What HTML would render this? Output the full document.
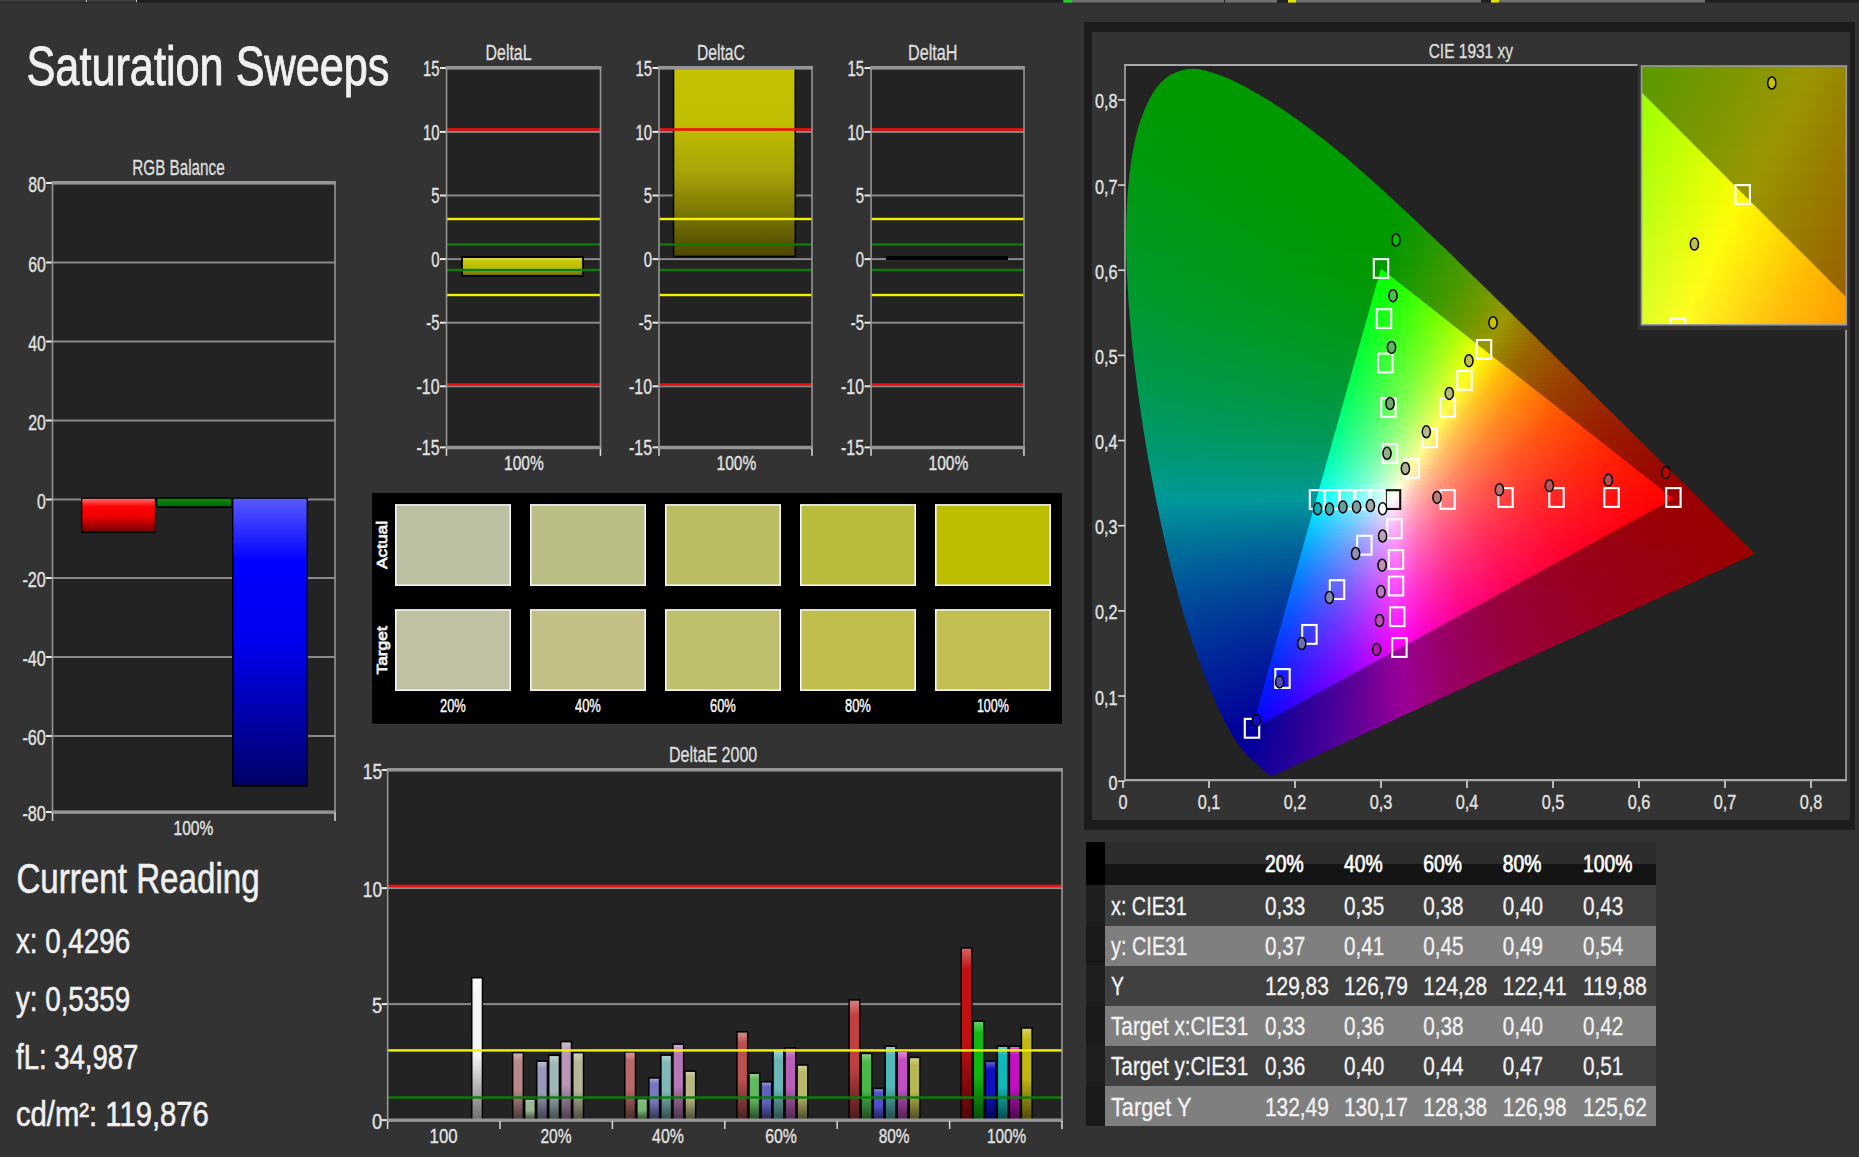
<!DOCTYPE html>
<html><head><meta charset="utf-8"><title>Saturation Sweeps</title>
<style>html,body{margin:0;padding:0;background:#333333;overflow:hidden;width:1859px;height:1157px}svg{display:block}text{font-family:"Liberation Sans",sans-serif}</style>
</head><body>
<svg width="1859" height="1157" viewBox="0 0 1859 1157" font-family="Liberation Sans"><rect x="0" y="0" width="1859" height="1157" fill="#333333"/>
<rect x="0" y="0" width="1859" height="2.5" fill="#1f1f1f"/>
<rect x="0" y="0" width="137" height="2.5" fill="#383838"/>
<rect x="86" y="0" width="1" height="2" fill="#bbbbbb"/>
<rect x="136" y="0" width="1" height="2.5" fill="#cccccc"/>
<rect x="0" y="2" width="137" height="0.8" fill="#262626"/>
<rect x="1063" y="0" width="161" height="2.5" fill="#707070"/>
<rect x="1064" y="0" width="8" height="2.5" fill="#20d020"/>
<rect x="1225" y="0" width="52" height="2.5" fill="#707070"/>
<rect x="1288" y="0" width="193" height="2.5" fill="#707070"/>
<rect x="1288" y="0" width="8" height="2.5" fill="#e0e000"/>
<rect x="1491" y="0" width="214" height="2.5" fill="#707070"/>
<rect x="1491" y="0" width="8" height="2.5" fill="#e0e000"/>
<text x="26.5" y="85.4" font-size="56" fill="#f0f0f0" textLength="363" lengthAdjust="spacingAndGlyphs" stroke="#f0f0f0" stroke-width="0.9">Saturation Sweeps</text>
<defs>
<linearGradient id="gR" x1="0" y1="0" x2="0" y2="1"><stop offset="0" stop-color="#ff6a6a"/><stop offset="0.25" stop-color="#ff0000"/><stop offset="0.55" stop-color="#ee0000"/><stop offset="1" stop-color="#7a0000"/></linearGradient>
<linearGradient id="gG" x1="0" y1="0" x2="0" y2="1"><stop offset="0" stop-color="#0a8a0a"/><stop offset="1" stop-color="#066806"/></linearGradient>
<linearGradient id="gB" x1="0" y1="0" x2="0" y2="1"><stop offset="0" stop-color="#5a5aff"/><stop offset="0.22" stop-color="#0000ff"/><stop offset="0.5" stop-color="#0000f0"/><stop offset="1" stop-color="#000068"/></linearGradient>
<linearGradient id="gYL" x1="0" y1="0" x2="0" y2="1"><stop offset="0" stop-color="#dcdc50"/><stop offset="0.2" stop-color="#c4c400"/><stop offset="0.6" stop-color="#bcbc00"/><stop offset="1" stop-color="#6c6800"/></linearGradient>
<linearGradient id="gYC" x1="0" y1="0" x2="0" y2="1"><stop offset="0" stop-color="#c4c200"/><stop offset="0.3" stop-color="#c0be00"/><stop offset="0.55" stop-color="#a8a408"/><stop offset="1" stop-color="#4c4800"/></linearGradient>
</defs>
<text x="132.3" y="175" font-size="21.5" fill="#dedede" stroke="#dedede" stroke-width="0.35" textLength="92.4" lengthAdjust="spacingAndGlyphs">RGB Balance</text>
<rect x="52.5" y="183" width="282.5" height="629" fill="#232323"/>
<rect x="46" y="182" width="6.5" height="2" fill="#e8e8e8"/>
<text x="28.2" y="192" font-size="21.6" fill="#e2e2e2" stroke="#e2e2e2" stroke-width="0.35" textLength="17.6" lengthAdjust="spacingAndGlyphs">80</text>
<rect x="52.5" y="261.5" width="282.5" height="2" fill="#8a8a8a"/>
<rect x="46" y="261.5" width="6.5" height="2" fill="#e8e8e8"/>
<text x="28.2" y="271.5" font-size="21.6" fill="#e2e2e2" stroke="#e2e2e2" stroke-width="0.35" textLength="17.6" lengthAdjust="spacingAndGlyphs">60</text>
<rect x="52.5" y="340.5" width="282.5" height="2" fill="#8a8a8a"/>
<rect x="46" y="340.5" width="6.5" height="2" fill="#e8e8e8"/>
<text x="28.2" y="350.5" font-size="21.6" fill="#e2e2e2" stroke="#e2e2e2" stroke-width="0.35" textLength="17.6" lengthAdjust="spacingAndGlyphs">40</text>
<rect x="52.5" y="419.5" width="282.5" height="2" fill="#8a8a8a"/>
<rect x="46" y="419.5" width="6.5" height="2" fill="#e8e8e8"/>
<text x="28.2" y="429.5" font-size="21.6" fill="#e2e2e2" stroke="#e2e2e2" stroke-width="0.35" textLength="17.6" lengthAdjust="spacingAndGlyphs">20</text>
<rect x="52.5" y="498.5" width="282.5" height="2" fill="#8a8a8a"/>
<rect x="46" y="498.5" width="6.5" height="2" fill="#e8e8e8"/>
<text x="37" y="508.5" font-size="21.6" fill="#e2e2e2" stroke="#e2e2e2" stroke-width="0.35" textLength="8.8" lengthAdjust="spacingAndGlyphs">0</text>
<rect x="52.5" y="577" width="282.5" height="2" fill="#8a8a8a"/>
<rect x="46" y="577" width="6.5" height="2" fill="#e8e8e8"/>
<text x="22.4" y="587" font-size="21.6" fill="#e2e2e2" stroke="#e2e2e2" stroke-width="0.35" textLength="23.4" lengthAdjust="spacingAndGlyphs">-20</text>
<rect x="52.5" y="656" width="282.5" height="2" fill="#8a8a8a"/>
<rect x="46" y="656" width="6.5" height="2" fill="#e8e8e8"/>
<text x="22.4" y="666" font-size="21.6" fill="#e2e2e2" stroke="#e2e2e2" stroke-width="0.35" textLength="23.4" lengthAdjust="spacingAndGlyphs">-40</text>
<rect x="52.5" y="735" width="282.5" height="2" fill="#8a8a8a"/>
<rect x="46" y="735" width="6.5" height="2" fill="#e8e8e8"/>
<text x="22.4" y="745" font-size="21.6" fill="#e2e2e2" stroke="#e2e2e2" stroke-width="0.35" textLength="23.4" lengthAdjust="spacingAndGlyphs">-60</text>
<rect x="46" y="811" width="6.5" height="2" fill="#e8e8e8"/>
<text x="22.4" y="821" font-size="21.6" fill="#e2e2e2" stroke="#e2e2e2" stroke-width="0.35" textLength="23.4" lengthAdjust="spacingAndGlyphs">-80</text>
<rect x="81" y="497.5" width="75" height="35.5" fill="#000"/>
<rect x="82.3" y="498.8" width="72.5" height="32.2" fill="url(#gR)"/>
<rect x="156" y="497.5" width="76" height="10.5" fill="#000"/>
<rect x="157.3" y="498.8" width="73.7" height="7.4" fill="url(#gG)"/>
<rect x="232" y="497.5" width="76" height="289.5" fill="#000"/>
<rect x="233.4" y="498.8" width="73.2" height="286" fill="url(#gB)"/>
<rect x="51.75" y="181" width="1.6" height="633" fill="#959595"/>
<rect x="334.2" y="181" width="1.6" height="633" fill="#959595"/>
<rect x="51.75" y="181" width="284.05" height="3.6" fill="#959595"/>
<rect x="51.75" y="810.4" width="284.05" height="3.4" fill="#959595"/>
<rect x="51.8" y="813" width="1.5" height="8" fill="#d8d8d8"/>
<rect x="334.3" y="813" width="1.5" height="8" fill="#d8d8d8"/>
<text x="173.6" y="834.9" font-size="21" fill="#e2e2e2" stroke="#e2e2e2" stroke-width="0.35" textLength="39.6" lengthAdjust="spacingAndGlyphs">100%</text>
<text x="485.6" y="59.9" font-size="21.5" fill="#dedede" stroke="#dedede" stroke-width="0.35" textLength="45.9" lengthAdjust="spacingAndGlyphs">DeltaL</text>
<rect x="446.5" y="68" width="154" height="379.4" fill="#232323"/>
<rect x="446.5" y="130.9" width="154" height="2" fill="#8a8a8a"/>
<rect x="446.5" y="194.5" width="154" height="2" fill="#8a8a8a"/>
<rect x="446.5" y="258.1" width="154" height="2" fill="#8a8a8a"/>
<rect x="446.5" y="321.7" width="154" height="2" fill="#8a8a8a"/>
<rect x="446.5" y="385.3" width="154" height="2" fill="#8a8a8a"/>
<rect x="440" y="67" width="6.5" height="2" fill="#e8e8e8"/>
<text x="422.9" y="75.6" font-size="21.6" fill="#e2e2e2" stroke="#e2e2e2" stroke-width="0.35" textLength="16.6" lengthAdjust="spacingAndGlyphs">15</text>
<rect x="440" y="130.9" width="6.5" height="2" fill="#e8e8e8"/>
<text x="422.9" y="139.5" font-size="21.6" fill="#e2e2e2" stroke="#e2e2e2" stroke-width="0.35" textLength="16.6" lengthAdjust="spacingAndGlyphs">10</text>
<rect x="440" y="194.5" width="6.5" height="2" fill="#e8e8e8"/>
<text x="431.2" y="203.1" font-size="21.6" fill="#e2e2e2" stroke="#e2e2e2" stroke-width="0.35" textLength="8.3" lengthAdjust="spacingAndGlyphs">5</text>
<rect x="440" y="258.1" width="6.5" height="2" fill="#e8e8e8"/>
<text x="431.2" y="266.7" font-size="21.6" fill="#e2e2e2" stroke="#e2e2e2" stroke-width="0.35" textLength="8.3" lengthAdjust="spacingAndGlyphs">0</text>
<rect x="440" y="321.7" width="6.5" height="2" fill="#e8e8e8"/>
<text x="426.3" y="330.3" font-size="21.6" fill="#e2e2e2" stroke="#e2e2e2" stroke-width="0.35" textLength="13.2" lengthAdjust="spacingAndGlyphs">-5</text>
<rect x="440" y="385.3" width="6.5" height="2" fill="#e8e8e8"/>
<text x="416.5" y="393.9" font-size="21.6" fill="#e2e2e2" stroke="#e2e2e2" stroke-width="0.35" textLength="23" lengthAdjust="spacingAndGlyphs">-10</text>
<rect x="440" y="446.4" width="6.5" height="2" fill="#e8e8e8"/>
<text x="416.5" y="455" font-size="21.6" fill="#e2e2e2" stroke="#e2e2e2" stroke-width="0.35" textLength="23" lengthAdjust="spacingAndGlyphs">-15</text>
<rect x="461.2" y="256" width="122.8" height="20.8" fill="#000"/>
<rect x="462.9" y="258" width="119.2" height="17" fill="url(#gYL)"/>
<rect x="446.5" y="128.2" width="154" height="2.6" fill="#ee1010"/>
<rect x="446.5" y="383.2" width="154" height="2.6" fill="#ee1010"/>
<rect x="446.5" y="217.8" width="154" height="2.4" fill="#f2f200"/>
<rect x="446.5" y="293.8" width="154" height="2.4" fill="#f2f200"/>
<rect x="446.5" y="243.3" width="154" height="2.3" fill="#0a7d0a"/>
<rect x="446.5" y="268.8" width="154" height="2.3" fill="#0a7d0a"/>
<rect x="445.75" y="66" width="1.6" height="383.4" fill="#959595"/>
<rect x="599.7" y="66" width="1.6" height="383.4" fill="#959595"/>
<rect x="445.75" y="66" width="155.55" height="3.6" fill="#959595"/>
<rect x="445.75" y="445.8" width="155.55" height="3.4" fill="#959595"/>
<rect x="445.75" y="448.9" width="1.5" height="7" fill="#d8d8d8"/>
<rect x="599.7" y="448.9" width="1.5" height="7" fill="#d8d8d8"/>
<text x="504.1" y="470" font-size="21" fill="#e2e2e2" stroke="#e2e2e2" stroke-width="0.35" textLength="39.7" lengthAdjust="spacingAndGlyphs">100%</text>
<text x="696.9" y="59.9" font-size="21.5" fill="#dedede" stroke="#dedede" stroke-width="0.35" textLength="48" lengthAdjust="spacingAndGlyphs">DeltaC</text>
<rect x="659" y="68" width="153" height="379.4" fill="#232323"/>
<rect x="659" y="130.9" width="153" height="2" fill="#8a8a8a"/>
<rect x="659" y="194.5" width="153" height="2" fill="#8a8a8a"/>
<rect x="659" y="258.1" width="153" height="2" fill="#8a8a8a"/>
<rect x="659" y="321.7" width="153" height="2" fill="#8a8a8a"/>
<rect x="659" y="385.3" width="153" height="2" fill="#8a8a8a"/>
<rect x="652.5" y="67" width="6.5" height="2" fill="#e8e8e8"/>
<text x="635.4" y="75.6" font-size="21.6" fill="#e2e2e2" stroke="#e2e2e2" stroke-width="0.35" textLength="16.6" lengthAdjust="spacingAndGlyphs">15</text>
<rect x="652.5" y="130.9" width="6.5" height="2" fill="#e8e8e8"/>
<text x="635.4" y="139.5" font-size="21.6" fill="#e2e2e2" stroke="#e2e2e2" stroke-width="0.35" textLength="16.6" lengthAdjust="spacingAndGlyphs">10</text>
<rect x="652.5" y="194.5" width="6.5" height="2" fill="#e8e8e8"/>
<text x="643.7" y="203.1" font-size="21.6" fill="#e2e2e2" stroke="#e2e2e2" stroke-width="0.35" textLength="8.3" lengthAdjust="spacingAndGlyphs">5</text>
<rect x="652.5" y="258.1" width="6.5" height="2" fill="#e8e8e8"/>
<text x="643.7" y="266.7" font-size="21.6" fill="#e2e2e2" stroke="#e2e2e2" stroke-width="0.35" textLength="8.3" lengthAdjust="spacingAndGlyphs">0</text>
<rect x="652.5" y="321.7" width="6.5" height="2" fill="#e8e8e8"/>
<text x="638.8" y="330.3" font-size="21.6" fill="#e2e2e2" stroke="#e2e2e2" stroke-width="0.35" textLength="13.2" lengthAdjust="spacingAndGlyphs">-5</text>
<rect x="652.5" y="385.3" width="6.5" height="2" fill="#e8e8e8"/>
<text x="629" y="393.9" font-size="21.6" fill="#e2e2e2" stroke="#e2e2e2" stroke-width="0.35" textLength="23" lengthAdjust="spacingAndGlyphs">-10</text>
<rect x="652.5" y="446.4" width="6.5" height="2" fill="#e8e8e8"/>
<text x="629" y="455" font-size="21.6" fill="#e2e2e2" stroke="#e2e2e2" stroke-width="0.35" textLength="23" lengthAdjust="spacingAndGlyphs">-15</text>
<rect x="672.8" y="68" width="123.3" height="189.5" fill="#000"/>
<rect x="674.3" y="68" width="120.2" height="187.6" fill="url(#gYC)"/>
<rect x="659" y="128.2" width="153" height="2.6" fill="#ee1010"/>
<rect x="659" y="383.2" width="153" height="2.6" fill="#ee1010"/>
<rect x="659" y="217.8" width="153" height="2.4" fill="#f2f200"/>
<rect x="659" y="293.8" width="153" height="2.4" fill="#f2f200"/>
<rect x="659" y="243.3" width="153" height="2.3" fill="#0a7d0a"/>
<rect x="659" y="268.8" width="153" height="2.3" fill="#0a7d0a"/>
<rect x="658.25" y="66" width="1.6" height="383.4" fill="#959595"/>
<rect x="811.2" y="66" width="1.6" height="383.4" fill="#959595"/>
<rect x="658.25" y="66" width="154.55" height="3.6" fill="#959595"/>
<rect x="658.25" y="445.8" width="154.55" height="3.4" fill="#959595"/>
<rect x="658.25" y="448.9" width="1.5" height="7" fill="#d8d8d8"/>
<rect x="811.2" y="448.9" width="1.5" height="7" fill="#d8d8d8"/>
<text x="716.6" y="470" font-size="21" fill="#e2e2e2" stroke="#e2e2e2" stroke-width="0.35" textLength="39.7" lengthAdjust="spacingAndGlyphs">100%</text>
<text x="908" y="59.9" font-size="21.5" fill="#dedede" stroke="#dedede" stroke-width="0.35" textLength="49.4" lengthAdjust="spacingAndGlyphs">DeltaH</text>
<rect x="871" y="68" width="153" height="379.4" fill="#232323"/>
<rect x="871" y="130.9" width="153" height="2" fill="#8a8a8a"/>
<rect x="871" y="194.5" width="153" height="2" fill="#8a8a8a"/>
<rect x="871" y="258.1" width="153" height="2" fill="#8a8a8a"/>
<rect x="871" y="321.7" width="153" height="2" fill="#8a8a8a"/>
<rect x="871" y="385.3" width="153" height="2" fill="#8a8a8a"/>
<rect x="864.5" y="67" width="6.5" height="2" fill="#e8e8e8"/>
<text x="847.4" y="75.6" font-size="21.6" fill="#e2e2e2" stroke="#e2e2e2" stroke-width="0.35" textLength="16.6" lengthAdjust="spacingAndGlyphs">15</text>
<rect x="864.5" y="130.9" width="6.5" height="2" fill="#e8e8e8"/>
<text x="847.4" y="139.5" font-size="21.6" fill="#e2e2e2" stroke="#e2e2e2" stroke-width="0.35" textLength="16.6" lengthAdjust="spacingAndGlyphs">10</text>
<rect x="864.5" y="194.5" width="6.5" height="2" fill="#e8e8e8"/>
<text x="855.7" y="203.1" font-size="21.6" fill="#e2e2e2" stroke="#e2e2e2" stroke-width="0.35" textLength="8.3" lengthAdjust="spacingAndGlyphs">5</text>
<rect x="864.5" y="258.1" width="6.5" height="2" fill="#e8e8e8"/>
<text x="855.7" y="266.7" font-size="21.6" fill="#e2e2e2" stroke="#e2e2e2" stroke-width="0.35" textLength="8.3" lengthAdjust="spacingAndGlyphs">0</text>
<rect x="864.5" y="321.7" width="6.5" height="2" fill="#e8e8e8"/>
<text x="850.8" y="330.3" font-size="21.6" fill="#e2e2e2" stroke="#e2e2e2" stroke-width="0.35" textLength="13.2" lengthAdjust="spacingAndGlyphs">-5</text>
<rect x="864.5" y="385.3" width="6.5" height="2" fill="#e8e8e8"/>
<text x="841" y="393.9" font-size="21.6" fill="#e2e2e2" stroke="#e2e2e2" stroke-width="0.35" textLength="23" lengthAdjust="spacingAndGlyphs">-10</text>
<rect x="864.5" y="446.4" width="6.5" height="2" fill="#e8e8e8"/>
<text x="841" y="455" font-size="21.6" fill="#e2e2e2" stroke="#e2e2e2" stroke-width="0.35" textLength="23" lengthAdjust="spacingAndGlyphs">-15</text>
<rect x="886" y="256" width="122" height="4" fill="#000"/>
<rect x="871" y="128.2" width="153" height="2.6" fill="#ee1010"/>
<rect x="871" y="383.2" width="153" height="2.6" fill="#ee1010"/>
<rect x="871" y="217.8" width="153" height="2.4" fill="#f2f200"/>
<rect x="871" y="293.8" width="153" height="2.4" fill="#f2f200"/>
<rect x="871" y="243.3" width="153" height="2.3" fill="#0a7d0a"/>
<rect x="871" y="268.8" width="153" height="2.3" fill="#0a7d0a"/>
<rect x="870.25" y="66" width="1.6" height="383.4" fill="#959595"/>
<rect x="1023.2" y="66" width="1.6" height="383.4" fill="#959595"/>
<rect x="870.25" y="66" width="154.55" height="3.6" fill="#959595"/>
<rect x="870.25" y="445.8" width="154.55" height="3.4" fill="#959595"/>
<rect x="870.25" y="448.9" width="1.5" height="7" fill="#d8d8d8"/>
<rect x="1023.2" y="448.9" width="1.5" height="7" fill="#d8d8d8"/>
<text x="928.6" y="470" font-size="21" fill="#e2e2e2" stroke="#e2e2e2" stroke-width="0.35" textLength="39.7" lengthAdjust="spacingAndGlyphs">100%</text>
<rect x="372" y="493" width="690" height="230.7" fill="#000000"/>
<rect x="395.8" y="504.9" width="114.4" height="80.3" fill="#bbc0a2" stroke="#f4f4f4" stroke-width="1.6"/>
<rect x="395.8" y="609.9" width="114.4" height="80.3" fill="#c0c0a2" stroke="#f4f4f4" stroke-width="1.6"/>
<text x="439.95" y="712.3" font-size="17.5" fill="#ffffff" stroke="#ffffff" stroke-width="0.35" textLength="25.9" lengthAdjust="spacingAndGlyphs">20%</text>
<rect x="530.8" y="504.9" width="114.4" height="80.3" fill="#babe85" stroke="#f4f4f4" stroke-width="1.6"/>
<rect x="530.8" y="609.9" width="114.4" height="80.3" fill="#c2c087" stroke="#f4f4f4" stroke-width="1.6"/>
<text x="574.95" y="712.3" font-size="17.5" fill="#ffffff" stroke="#ffffff" stroke-width="0.35" textLength="25.9" lengthAdjust="spacingAndGlyphs">40%</text>
<rect x="665.8" y="504.9" width="114.4" height="80.3" fill="#babd62" stroke="#f4f4f4" stroke-width="1.6"/>
<rect x="665.8" y="609.9" width="114.4" height="80.3" fill="#c0bf6c" stroke="#f4f4f4" stroke-width="1.6"/>
<text x="709.95" y="712.3" font-size="17.5" fill="#ffffff" stroke="#ffffff" stroke-width="0.35" textLength="25.9" lengthAdjust="spacingAndGlyphs">60%</text>
<rect x="800.8" y="504.9" width="114.4" height="80.3" fill="#b8bc3a" stroke="#f4f4f4" stroke-width="1.6"/>
<rect x="800.8" y="609.9" width="114.4" height="80.3" fill="#c0bf4e" stroke="#f4f4f4" stroke-width="1.6"/>
<text x="844.95" y="712.3" font-size="17.5" fill="#ffffff" stroke="#ffffff" stroke-width="0.35" textLength="25.9" lengthAdjust="spacingAndGlyphs">80%</text>
<rect x="935.8" y="504.9" width="114.4" height="80.3" fill="#bebe00" stroke="#f4f4f4" stroke-width="1.6"/>
<rect x="935.8" y="609.9" width="114.4" height="80.3" fill="#c2c052" stroke="#f4f4f4" stroke-width="1.6"/>
<text x="976.9" y="712.3" font-size="17.5" fill="#ffffff" stroke="#ffffff" stroke-width="0.35" textLength="32" lengthAdjust="spacingAndGlyphs">100%</text>
<text transform="translate(386.9,569) rotate(-90)" font-size="14.6" fill="#f4f4f4" stroke="#f4f4f4" stroke-width="0.75" textLength="48" lengthAdjust="spacingAndGlyphs">Actual</text>
<text transform="translate(386.9,674.5) rotate(-90)" font-size="14.6" fill="#f4f4f4" stroke="#f4f4f4" stroke-width="0.75" textLength="48.2" lengthAdjust="spacingAndGlyphs">Target</text>
<text x="668.9" y="762.3" font-size="21.5" fill="#dedede" stroke="#dedede" stroke-width="0.35" textLength="88.4" lengthAdjust="spacingAndGlyphs">DeltaE 2000</text>
<rect x="387.6" y="770" width="674.4" height="350.1" fill="#232323"/>
<rect x="387.6" y="887.1" width="674.4" height="2" fill="#8a8a8a"/>
<rect x="387.6" y="1003.1" width="674.4" height="2" fill="#8a8a8a"/>
<rect x="381.6" y="769" width="6" height="2" fill="#e8e8e8"/>
<text x="362.8" y="778.6" font-size="21.6" fill="#e2e2e2" stroke="#e2e2e2" stroke-width="0.35" textLength="19.3" lengthAdjust="spacingAndGlyphs">15</text>
<rect x="381.6" y="887.1" width="6" height="2" fill="#e8e8e8"/>
<text x="362.8" y="896.7" font-size="21.6" fill="#e2e2e2" stroke="#e2e2e2" stroke-width="0.35" textLength="19.3" lengthAdjust="spacingAndGlyphs">10</text>
<rect x="381.6" y="1003.1" width="6" height="2" fill="#e8e8e8"/>
<text x="371.9" y="1012.7" font-size="21.6" fill="#e2e2e2" stroke="#e2e2e2" stroke-width="0.35" textLength="10.2" lengthAdjust="spacingAndGlyphs">5</text>
<rect x="381.6" y="1119.1" width="6" height="2" fill="#e8e8e8"/>
<text x="371.9" y="1128.7" font-size="21.6" fill="#e2e2e2" stroke="#e2e2e2" stroke-width="0.35" textLength="10.2" lengthAdjust="spacingAndGlyphs">0</text>
<linearGradient id="bw" x1="0" y1="0" x2="0" y2="1"><stop offset="0" stop-color="#ffffff"/><stop offset="0.12" stop-color="#f4f4f4"/><stop offset="0.55" stop-color="#f4f4f4"/><stop offset="1" stop-color="#707070"/></linearGradient>
<rect x="471" y="976.9" width="12.1" height="142.1" fill="#000"/>
<rect x="472.5" y="978.5" width="9.2" height="140.5" fill="url(#bw)"/>
<linearGradient id="b00" x1="0" y1="0" x2="0" y2="1"><stop offset="0" stop-color="#d0b1b1"/><stop offset="0.12" stop-color="#b88888"/><stop offset="0.55" stop-color="#b88888"/><stop offset="1" stop-color="#4d3939"/></linearGradient>
<rect x="511.9" y="1051.8" width="12.1" height="67.2" fill="#000"/>
<rect x="513.4" y="1053.4" width="9.2" height="65.6" fill="url(#b00)"/>
<linearGradient id="b01" x1="0" y1="0" x2="0" y2="1"><stop offset="0" stop-color="#bcd0bc"/><stop offset="0.12" stop-color="#98b898"/><stop offset="0.55" stop-color="#98b898"/><stop offset="1" stop-color="#3f4d3f"/></linearGradient>
<rect x="523.93" y="1098.1" width="12.1" height="20.9" fill="#000"/>
<rect x="525.43" y="1099.7" width="9.2" height="19.3" fill="url(#b01)"/>
<linearGradient id="b02" x1="0" y1="0" x2="0" y2="1"><stop offset="0" stop-color="#bcbcd0"/><stop offset="0.12" stop-color="#9898b8"/><stop offset="0.55" stop-color="#9898b8"/><stop offset="1" stop-color="#3f3f4d"/></linearGradient>
<rect x="535.96" y="1060.3" width="12.1" height="58.7" fill="#000"/>
<rect x="537.46" y="1061.9" width="9.2" height="57.1" fill="url(#b02)"/>
<linearGradient id="b03" x1="0" y1="0" x2="0" y2="1"><stop offset="0" stop-color="#c1d0d0"/><stop offset="0.12" stop-color="#a0b8b8"/><stop offset="0.55" stop-color="#a0b8b8"/><stop offset="1" stop-color="#434d4d"/></linearGradient>
<rect x="547.99" y="1054.5" width="12.1" height="64.5" fill="#000"/>
<rect x="549.49" y="1056.1" width="9.2" height="62.9" fill="url(#b03)"/>
<linearGradient id="b04" x1="0" y1="0" x2="0" y2="1"><stop offset="0" stop-color="#d0bcd0"/><stop offset="0.12" stop-color="#b898b8"/><stop offset="0.55" stop-color="#b898b8"/><stop offset="1" stop-color="#4d3f4d"/></linearGradient>
<rect x="560.02" y="1040.8" width="12.1" height="78.2" fill="#000"/>
<rect x="561.52" y="1042.4" width="9.2" height="76.6" fill="url(#b04)"/>
<linearGradient id="b05" x1="0" y1="0" x2="0" y2="1"><stop offset="0" stop-color="#d0d0bc"/><stop offset="0.12" stop-color="#b8b898"/><stop offset="0.55" stop-color="#b8b898"/><stop offset="1" stop-color="#4d4d3f"/></linearGradient>
<rect x="572.05" y="1051.8" width="12.1" height="67.2" fill="#000"/>
<rect x="573.55" y="1053.4" width="9.2" height="65.6" fill="url(#b05)"/>
<linearGradient id="b10" x1="0" y1="0" x2="0" y2="1"><stop offset="0" stop-color="#d09c9c"/><stop offset="0.12" stop-color="#b86868"/><stop offset="0.55" stop-color="#b86868"/><stop offset="1" stop-color="#4d2b2b"/></linearGradient>
<rect x="624.05" y="1051" width="12.1" height="68" fill="#000"/>
<rect x="625.55" y="1052.6" width="9.2" height="66.4" fill="url(#b10)"/>
<linearGradient id="b11" x1="0" y1="0" x2="0" y2="1"><stop offset="0" stop-color="#a7d0a7"/><stop offset="0.12" stop-color="#78b878"/><stop offset="0.55" stop-color="#78b878"/><stop offset="1" stop-color="#324d32"/></linearGradient>
<rect x="636.08" y="1097.8" width="12.1" height="21.2" fill="#000"/>
<rect x="637.58" y="1099.4" width="9.2" height="19.6" fill="url(#b11)"/>
<linearGradient id="b12" x1="0" y1="0" x2="0" y2="1"><stop offset="0" stop-color="#a7a7d6"/><stop offset="0.12" stop-color="#7878c0"/><stop offset="0.55" stop-color="#7878c0"/><stop offset="1" stop-color="#323250"/></linearGradient>
<rect x="648.11" y="1077.1" width="12.1" height="41.9" fill="#000"/>
<rect x="649.61" y="1078.7" width="9.2" height="40.3" fill="url(#b12)"/>
<linearGradient id="b13" x1="0" y1="0" x2="0" y2="1"><stop offset="0" stop-color="#acd0d0"/><stop offset="0.12" stop-color="#80b8b8"/><stop offset="0.55" stop-color="#80b8b8"/><stop offset="1" stop-color="#354d4d"/></linearGradient>
<rect x="660.14" y="1054.3" width="12.1" height="64.7" fill="#000"/>
<rect x="661.64" y="1055.9" width="9.2" height="63.1" fill="url(#b13)"/>
<linearGradient id="b14" x1="0" y1="0" x2="0" y2="1"><stop offset="0" stop-color="#d0a7d0"/><stop offset="0.12" stop-color="#b878b8"/><stop offset="0.55" stop-color="#b878b8"/><stop offset="1" stop-color="#4d324d"/></linearGradient>
<rect x="672.17" y="1043.3" width="12.1" height="75.7" fill="#000"/>
<rect x="673.67" y="1044.9" width="9.2" height="74.1" fill="url(#b14)"/>
<linearGradient id="b15" x1="0" y1="0" x2="0" y2="1"><stop offset="0" stop-color="#d0d0ac"/><stop offset="0.12" stop-color="#b8b880"/><stop offset="0.55" stop-color="#b8b880"/><stop offset="1" stop-color="#4d4d35"/></linearGradient>
<rect x="684.2" y="1070.3" width="12.1" height="48.7" fill="#000"/>
<rect x="685.7" y="1071.9" width="9.2" height="47.1" fill="url(#b15)"/>
<linearGradient id="b20" x1="0" y1="0" x2="0" y2="1"><stop offset="0" stop-color="#d08d8d"/><stop offset="0.12" stop-color="#b85050"/><stop offset="0.55" stop-color="#b85050"/><stop offset="1" stop-color="#4d2121"/></linearGradient>
<rect x="736.2" y="1031" width="12.1" height="88" fill="#000"/>
<rect x="737.7" y="1032.6" width="9.2" height="86.4" fill="url(#b20)"/>
<linearGradient id="b21" x1="0" y1="0" x2="0" y2="1"><stop offset="0" stop-color="#97d097"/><stop offset="0.12" stop-color="#60b860"/><stop offset="0.55" stop-color="#60b860"/><stop offset="1" stop-color="#284d28"/></linearGradient>
<rect x="748.23" y="1072.4" width="12.1" height="46.6" fill="#000"/>
<rect x="749.73" y="1074" width="9.2" height="45" fill="url(#b21)"/>
<linearGradient id="b22" x1="0" y1="0" x2="0" y2="1"><stop offset="0" stop-color="#9797d6"/><stop offset="0.12" stop-color="#6060c0"/><stop offset="0.55" stop-color="#6060c0"/><stop offset="1" stop-color="#282850"/></linearGradient>
<rect x="760.26" y="1081" width="12.1" height="38" fill="#000"/>
<rect x="761.76" y="1082.6" width="9.2" height="36.4" fill="url(#b22)"/>
<linearGradient id="b23" x1="0" y1="0" x2="0" y2="1"><stop offset="0" stop-color="#9cd0d0"/><stop offset="0.12" stop-color="#68b8b8"/><stop offset="0.55" stop-color="#68b8b8"/><stop offset="1" stop-color="#2b4d4d"/></linearGradient>
<rect x="772.29" y="1049.4" width="12.1" height="69.6" fill="#000"/>
<rect x="773.79" y="1051" width="9.2" height="68" fill="url(#b23)"/>
<linearGradient id="b24" x1="0" y1="0" x2="0" y2="1"><stop offset="0" stop-color="#d097d0"/><stop offset="0.12" stop-color="#b860b8"/><stop offset="0.55" stop-color="#b860b8"/><stop offset="1" stop-color="#4d284d"/></linearGradient>
<rect x="784.32" y="1047.2" width="12.1" height="71.8" fill="#000"/>
<rect x="785.82" y="1048.8" width="9.2" height="70.2" fill="url(#b24)"/>
<linearGradient id="b25" x1="0" y1="0" x2="0" y2="1"><stop offset="0" stop-color="#d0d09c"/><stop offset="0.12" stop-color="#b8b868"/><stop offset="0.55" stop-color="#b8b868"/><stop offset="1" stop-color="#4d4d2b"/></linearGradient>
<rect x="796.35" y="1064.2" width="12.1" height="54.8" fill="#000"/>
<rect x="797.85" y="1065.8" width="9.2" height="53.2" fill="url(#b25)"/>
<linearGradient id="b30" x1="0" y1="0" x2="0" y2="1"><stop offset="0" stop-color="#d68282"/><stop offset="0.12" stop-color="#c04040"/><stop offset="0.55" stop-color="#c04040"/><stop offset="1" stop-color="#501a1a"/></linearGradient>
<rect x="848.35" y="999.1" width="12.1" height="119.9" fill="#000"/>
<rect x="849.85" y="1000.7" width="9.2" height="118.3" fill="url(#b30)"/>
<linearGradient id="b31" x1="0" y1="0" x2="0" y2="1"><stop offset="0" stop-color="#88d088"/><stop offset="0.12" stop-color="#48b848"/><stop offset="0.55" stop-color="#48b848"/><stop offset="1" stop-color="#1e4d1e"/></linearGradient>
<rect x="860.38" y="1052.6" width="12.1" height="66.4" fill="#000"/>
<rect x="861.88" y="1054.2" width="9.2" height="64.8" fill="url(#b31)"/>
<linearGradient id="b32" x1="0" y1="0" x2="0" y2="1"><stop offset="0" stop-color="#8d8ddb"/><stop offset="0.12" stop-color="#5050c8"/><stop offset="0.55" stop-color="#5050c8"/><stop offset="1" stop-color="#212154"/></linearGradient>
<rect x="872.41" y="1087.6" width="12.1" height="31.4" fill="#000"/>
<rect x="873.91" y="1089.2" width="9.2" height="29.8" fill="url(#b32)"/>
<linearGradient id="b33" x1="0" y1="0" x2="0" y2="1"><stop offset="0" stop-color="#8dd0d0"/><stop offset="0.12" stop-color="#50b8b8"/><stop offset="0.55" stop-color="#50b8b8"/><stop offset="1" stop-color="#214d4d"/></linearGradient>
<rect x="884.44" y="1045.4" width="12.1" height="73.6" fill="#000"/>
<rect x="885.94" y="1047" width="9.2" height="72" fill="url(#b33)"/>
<linearGradient id="b34" x1="0" y1="0" x2="0" y2="1"><stop offset="0" stop-color="#d68dd6"/><stop offset="0.12" stop-color="#c050c0"/><stop offset="0.55" stop-color="#c050c0"/><stop offset="1" stop-color="#502150"/></linearGradient>
<rect x="896.47" y="1050.3" width="12.1" height="68.7" fill="#000"/>
<rect x="897.97" y="1051.9" width="9.2" height="67.1" fill="url(#b34)"/>
<linearGradient id="b35" x1="0" y1="0" x2="0" y2="1"><stop offset="0" stop-color="#d0d08d"/><stop offset="0.12" stop-color="#b8b850"/><stop offset="0.55" stop-color="#b8b850"/><stop offset="1" stop-color="#4d4d21"/></linearGradient>
<rect x="908.5" y="1056.6" width="12.1" height="62.4" fill="#000"/>
<rect x="910" y="1058.2" width="9.2" height="60.8" fill="url(#b35)"/>
<linearGradient id="b40" x1="0" y1="0" x2="0" y2="1"><stop offset="0" stop-color="#d66363"/><stop offset="0.12" stop-color="#c01010"/><stop offset="0.55" stop-color="#c01010"/><stop offset="1" stop-color="#500606"/></linearGradient>
<rect x="960.5" y="947.1" width="12.1" height="171.9" fill="#000"/>
<rect x="962" y="948.7" width="9.2" height="170.3" fill="url(#b40)"/>
<linearGradient id="b41" x1="0" y1="0" x2="0" y2="1"><stop offset="0" stop-color="#63d063"/><stop offset="0.12" stop-color="#10b810"/><stop offset="0.55" stop-color="#10b810"/><stop offset="1" stop-color="#064d06"/></linearGradient>
<rect x="972.53" y="1020.3" width="12.1" height="98.7" fill="#000"/>
<rect x="974.03" y="1021.9" width="9.2" height="97.1" fill="url(#b41)"/>
<linearGradient id="b42" x1="0" y1="0" x2="0" y2="1"><stop offset="0" stop-color="#6363d6"/><stop offset="0.12" stop-color="#1010c0"/><stop offset="0.55" stop-color="#1010c0"/><stop offset="1" stop-color="#060650"/></linearGradient>
<rect x="984.56" y="1060.5" width="12.1" height="58.5" fill="#000"/>
<rect x="986.06" y="1062.1" width="9.2" height="56.9" fill="url(#b42)"/>
<linearGradient id="b43" x1="0" y1="0" x2="0" y2="1"><stop offset="0" stop-color="#63d0d0"/><stop offset="0.12" stop-color="#10b8b8"/><stop offset="0.55" stop-color="#10b8b8"/><stop offset="1" stop-color="#064d4d"/></linearGradient>
<rect x="996.59" y="1045.4" width="12.1" height="73.6" fill="#000"/>
<rect x="998.09" y="1047" width="9.2" height="72" fill="url(#b43)"/>
<linearGradient id="b44" x1="0" y1="0" x2="0" y2="1"><stop offset="0" stop-color="#d663d6"/><stop offset="0.12" stop-color="#c010c0"/><stop offset="0.55" stop-color="#c010c0"/><stop offset="1" stop-color="#500650"/></linearGradient>
<rect x="1008.62" y="1045.4" width="12.1" height="73.6" fill="#000"/>
<rect x="1010.12" y="1047" width="9.2" height="72" fill="url(#b44)"/>
<linearGradient id="b45" x1="0" y1="0" x2="0" y2="1"><stop offset="0" stop-color="#d6d063"/><stop offset="0.12" stop-color="#c0b810"/><stop offset="0.55" stop-color="#c0b810"/><stop offset="1" stop-color="#504d06"/></linearGradient>
<rect x="1020.65" y="1027.1" width="12.1" height="91.9" fill="#000"/>
<rect x="1022.15" y="1028.7" width="9.2" height="90.3" fill="url(#b45)"/>
<rect x="387.6" y="884.7" width="674.4" height="2.4" fill="#ee1010"/>
<rect x="387.6" y="1049.2" width="674.4" height="2.4" fill="#f2f200"/>
<rect x="387.6" y="1096.3" width="674.4" height="2.4" fill="#0a7d0a"/>
<rect x="386.85" y="768" width="1.6" height="354.1" fill="#959595"/>
<rect x="1061.2" y="768" width="1.6" height="354.1" fill="#959595"/>
<rect x="386.85" y="768" width="675.95" height="3.6" fill="#959595"/>
<rect x="386.85" y="1118.5" width="675.95" height="3.4" fill="#959595"/>
<rect x="386.85" y="1121" width="1.5" height="8" fill="#d8d8d8"/>
<rect x="499.25" y="1121" width="1.5" height="8" fill="#d8d8d8"/>
<rect x="611.65" y="1121" width="1.5" height="8" fill="#d8d8d8"/>
<rect x="724.05" y="1121" width="1.5" height="8" fill="#d8d8d8"/>
<rect x="836.45" y="1121" width="1.5" height="8" fill="#d8d8d8"/>
<rect x="948.85" y="1121" width="1.5" height="8" fill="#d8d8d8"/>
<rect x="1061.25" y="1121" width="1.5" height="8" fill="#d8d8d8"/>
<text x="429.55" y="1143.4" font-size="21" fill="#e2e2e2" stroke="#e2e2e2" stroke-width="0.35" textLength="28.1" lengthAdjust="spacingAndGlyphs">100</text>
<text x="540.45" y="1143.4" font-size="21" fill="#e2e2e2" stroke="#e2e2e2" stroke-width="0.35" textLength="31.1" lengthAdjust="spacingAndGlyphs">20%</text>
<text x="652.1" y="1143.4" font-size="21" fill="#e2e2e2" stroke="#e2e2e2" stroke-width="0.35" textLength="31.8" lengthAdjust="spacingAndGlyphs">40%</text>
<text x="765.2" y="1143.4" font-size="21" fill="#e2e2e2" stroke="#e2e2e2" stroke-width="0.35" textLength="31.6" lengthAdjust="spacingAndGlyphs">60%</text>
<text x="878.7" y="1143.4" font-size="21" fill="#e2e2e2" stroke="#e2e2e2" stroke-width="0.35" textLength="30.8" lengthAdjust="spacingAndGlyphs">80%</text>
<text x="987" y="1143.4" font-size="21" fill="#e2e2e2" stroke="#e2e2e2" stroke-width="0.35" textLength="39.2" lengthAdjust="spacingAndGlyphs">100%</text>
<text x="16.4" y="893.4" font-size="42" fill="#f0f0f0" textLength="243.3" lengthAdjust="spacingAndGlyphs" stroke="#f0f0f0" stroke-width="0.6">Current Reading</text>
<text x="15.9" y="952.9" font-size="34.5" fill="#f0f0f0" textLength="114.2" lengthAdjust="spacingAndGlyphs" stroke="#f0f0f0" stroke-width="0.6">x: 0,4296</text>
<text x="15.9" y="1011.2" font-size="34.5" fill="#f0f0f0" textLength="114.2" lengthAdjust="spacingAndGlyphs" stroke="#f0f0f0" stroke-width="0.6">y: 0,5359</text>
<text x="16" y="1068.8" font-size="34.5" fill="#f0f0f0" textLength="122.4" lengthAdjust="spacingAndGlyphs" stroke="#f0f0f0" stroke-width="0.6">fL: 34,987</text>
<text x="16" y="1126.3" font-size="34.5" fill="#f0f0f0" textLength="192.8" lengthAdjust="spacingAndGlyphs" stroke="#f0f0f0" stroke-width="0.6">cd/m²: 119,876</text>
<rect x="1084" y="22" width="771" height="808" fill="#1c1c1c"/>
<rect x="1092" y="32" width="758" height="788" fill="#333333"/>
<text x="1428.7" y="57.7" font-size="21" fill="#dedede" stroke="#dedede" stroke-width="0.35" textLength="84.3" lengthAdjust="spacingAndGlyphs">CIE 1931 xy</text>
<rect x="1125" y="65" width="721" height="715" fill="#232323"/>
<defs><linearGradient id="s0" gradientUnits="userSpaceOnUse" x1="1180.43" y1="0" x2="1205.77" y2="0"><stop offset="0.0000" stop-color="#009900"/><stop offset="1.0000" stop-color="#009900"/></linearGradient><linearGradient id="s1" gradientUnits="userSpaceOnUse" x1="1169.52" y1="0" x2="1219.35" y2="0"><stop offset="0.0000" stop-color="#009900"/><stop offset="1.0000" stop-color="#009900"/></linearGradient><linearGradient id="s2" gradientUnits="userSpaceOnUse" x1="1163.00" y1="0" x2="1230.25" y2="0"><stop offset="0.0000" stop-color="#009900"/><stop offset="1.0000" stop-color="#009900"/></linearGradient><linearGradient id="s3" gradientUnits="userSpaceOnUse" x1="1158.44" y1="0" x2="1238.84" y2="0"><stop offset="0.0000" stop-color="#009900"/><stop offset="1.0000" stop-color="#009900"/></linearGradient><linearGradient id="s4" gradientUnits="userSpaceOnUse" x1="1154.95" y1="0" x2="1246.51" y2="0"><stop offset="0.0000" stop-color="#009900"/><stop offset="1.0000" stop-color="#009900"/></linearGradient><linearGradient id="s5" gradientUnits="userSpaceOnUse" x1="1152.00" y1="0" x2="1253.75" y2="0"><stop offset="0.0000" stop-color="#009900"/><stop offset="1.0000" stop-color="#009900"/></linearGradient><linearGradient id="s6" gradientUnits="userSpaceOnUse" x1="1149.37" y1="0" x2="1260.81" y2="0"><stop offset="0.0000" stop-color="#009901"/><stop offset="1.0000" stop-color="#009900"/></linearGradient><linearGradient id="s7" gradientUnits="userSpaceOnUse" x1="1147.18" y1="0" x2="1267.63" y2="0"><stop offset="0.0000" stop-color="#009902"/><stop offset="1.0000" stop-color="#009900"/></linearGradient><linearGradient id="s8" gradientUnits="userSpaceOnUse" x1="1145.04" y1="0" x2="1274.13" y2="0"><stop offset="0.0000" stop-color="#009903"/><stop offset="1.0000" stop-color="#009900"/></linearGradient><linearGradient id="s9" gradientUnits="userSpaceOnUse" x1="1143.23" y1="0" x2="1280.38" y2="0"><stop offset="0.0000" stop-color="#009903"/><stop offset="1.0000" stop-color="#009900"/></linearGradient><linearGradient id="s10" gradientUnits="userSpaceOnUse" x1="1141.43" y1="0" x2="1286.43" y2="0"><stop offset="0.0000" stop-color="#009904"/><stop offset="1.0000" stop-color="#009900"/></linearGradient><linearGradient id="s11" gradientUnits="userSpaceOnUse" x1="1139.91" y1="0" x2="1292.33" y2="0"><stop offset="0.0000" stop-color="#009905"/><stop offset="0.8824" stop-color="#009900"/><stop offset="1.0000" stop-color="#009900"/></linearGradient><linearGradient id="s12" gradientUnits="userSpaceOnUse" x1="1138.40" y1="0" x2="1298.07" y2="0"><stop offset="0.0000" stop-color="#009906"/><stop offset="0.7407" stop-color="#009900"/><stop offset="1.0000" stop-color="#009900"/></linearGradient><linearGradient id="s13" gradientUnits="userSpaceOnUse" x1="1137.06" y1="0" x2="1303.65" y2="0"><stop offset="0.0000" stop-color="#009907"/><stop offset="0.6964" stop-color="#009900"/><stop offset="1.0000" stop-color="#009900"/></linearGradient><linearGradient id="s14" gradientUnits="userSpaceOnUse" x1="1135.82" y1="0" x2="1309.08" y2="0"><stop offset="0.0000" stop-color="#009908"/><stop offset="0.6552" stop-color="#009900"/><stop offset="1.0000" stop-color="#009900"/></linearGradient><linearGradient id="s15" gradientUnits="userSpaceOnUse" x1="1134.59" y1="0" x2="1314.40" y2="0"><stop offset="0.0000" stop-color="#009908"/><stop offset="0.6500" stop-color="#009900"/><stop offset="1.0000" stop-color="#009900"/></linearGradient><linearGradient id="s16" gradientUnits="userSpaceOnUse" x1="1133.59" y1="0" x2="1319.62" y2="0"><stop offset="0.0000" stop-color="#009909"/><stop offset="0.6349" stop-color="#009900"/><stop offset="1.0000" stop-color="#009900"/></linearGradient><linearGradient id="s17" gradientUnits="userSpaceOnUse" x1="1132.58" y1="0" x2="1324.76" y2="0"><stop offset="0.0000" stop-color="#00990a"/><stop offset="0.6308" stop-color="#009900"/><stop offset="1.0000" stop-color="#009900"/></linearGradient><linearGradient id="s18" gradientUnits="userSpaceOnUse" x1="1131.65" y1="0" x2="1329.82" y2="0"><stop offset="0.0000" stop-color="#00990b"/><stop offset="0.6418" stop-color="#009900"/><stop offset="1.0000" stop-color="#009900"/></linearGradient><linearGradient id="s19" gradientUnits="userSpaceOnUse" x1="1130.85" y1="0" x2="1334.78" y2="0"><stop offset="0.0000" stop-color="#00990c"/><stop offset="0.6471" stop-color="#009900"/><stop offset="1.0000" stop-color="#009900"/></linearGradient><linearGradient id="s20" gradientUnits="userSpaceOnUse" x1="1130.06" y1="0" x2="1339.67" y2="0"><stop offset="0.0000" stop-color="#00990d"/><stop offset="0.6429" stop-color="#009900"/><stop offset="1.0000" stop-color="#009900"/></linearGradient><linearGradient id="s21" gradientUnits="userSpaceOnUse" x1="1129.35" y1="0" x2="1344.48" y2="0"><stop offset="0.0000" stop-color="#00990d"/><stop offset="0.6528" stop-color="#009900"/><stop offset="1.0000" stop-color="#009900"/></linearGradient><linearGradient id="s22" gradientUnits="userSpaceOnUse" x1="1128.73" y1="0" x2="1349.24" y2="0"><stop offset="0.0000" stop-color="#00990e"/><stop offset="0.6622" stop-color="#009900"/><stop offset="1.0000" stop-color="#009900"/></linearGradient><linearGradient id="s23" gradientUnits="userSpaceOnUse" x1="1128.11" y1="0" x2="1353.95" y2="0"><stop offset="0.0000" stop-color="#00990f"/><stop offset="0.6579" stop-color="#009900"/><stop offset="1.0000" stop-color="#009900"/></linearGradient><linearGradient id="s24" gradientUnits="userSpaceOnUse" x1="1127.53" y1="0" x2="1358.60" y2="0"><stop offset="0.0000" stop-color="#009910"/><stop offset="0.6667" stop-color="#009900"/><stop offset="1.0000" stop-color="#009900"/></linearGradient><linearGradient id="s25" gradientUnits="userSpaceOnUse" x1="1127.06" y1="0" x2="1363.20" y2="0"><stop offset="0.0000" stop-color="#009911"/><stop offset="0.6709" stop-color="#009900"/><stop offset="1.0000" stop-color="#009900"/></linearGradient><linearGradient id="s26" gradientUnits="userSpaceOnUse" x1="1126.58" y1="0" x2="1367.74" y2="0"><stop offset="0.0000" stop-color="#009911"/><stop offset="0.6790" stop-color="#009900"/><stop offset="1.0000" stop-color="#009900"/></linearGradient><linearGradient id="s27" gradientUnits="userSpaceOnUse" x1="1126.11" y1="0" x2="1372.24" y2="0"><stop offset="0.0000" stop-color="#009912"/><stop offset="0.6867" stop-color="#009900"/><stop offset="1.0000" stop-color="#009900"/></linearGradient><linearGradient id="s28" gradientUnits="userSpaceOnUse" x1="1125.74" y1="0" x2="1376.71" y2="0"><stop offset="0.0000" stop-color="#009913"/><stop offset="0.6905" stop-color="#009900"/><stop offset="1.0000" stop-color="#009900"/></linearGradient><linearGradient id="s29" gradientUnits="userSpaceOnUse" x1="1125.39" y1="0" x2="1381.15" y2="0"><stop offset="0.0000" stop-color="#009914"/><stop offset="0.6977" stop-color="#009900"/><stop offset="1.0000" stop-color="#009900"/></linearGradient><linearGradient id="s30" gradientUnits="userSpaceOnUse" x1="1125.04" y1="0" x2="1385.57" y2="0"><stop offset="0.0000" stop-color="#009915"/><stop offset="0.7011" stop-color="#009900"/><stop offset="1.0000" stop-color="#009900"/></linearGradient><linearGradient id="s31" gradientUnits="userSpaceOnUse" x1="1125.00" y1="0" x2="1389.96" y2="0"><stop offset="0.0000" stop-color="#009916"/><stop offset="0.7079" stop-color="#009900"/><stop offset="1.0000" stop-color="#009900"/></linearGradient><linearGradient id="s32" gradientUnits="userSpaceOnUse" x1="1125.00" y1="0" x2="1394.31" y2="0"><stop offset="0.0000" stop-color="#009917"/><stop offset="0.7222" stop-color="#009900"/><stop offset="1.0000" stop-color="#009900"/></linearGradient><linearGradient id="s33" gradientUnits="userSpaceOnUse" x1="1125.00" y1="0" x2="1398.64" y2="0"><stop offset="0.0000" stop-color="#009917"/><stop offset="0.7283" stop-color="#009900"/><stop offset="1.0000" stop-color="#009900"/></linearGradient><linearGradient id="s34" gradientUnits="userSpaceOnUse" x1="1125.00" y1="0" x2="1402.94" y2="0"><stop offset="0.0000" stop-color="#009918"/><stop offset="0.7312" stop-color="#009900"/><stop offset="1.0000" stop-color="#039900"/></linearGradient><linearGradient id="s35" gradientUnits="userSpaceOnUse" x1="1125.00" y1="0" x2="1407.23" y2="0"><stop offset="0.0000" stop-color="#009919"/><stop offset="0.7368" stop-color="#009900"/><stop offset="0.9789" stop-color="#029900"/><stop offset="1.0000" stop-color="#079900"/></linearGradient><linearGradient id="s36" gradientUnits="userSpaceOnUse" x1="1125.00" y1="0" x2="1411.50" y2="0"><stop offset="0.0000" stop-color="#00991a"/><stop offset="0.7396" stop-color="#009900"/><stop offset="0.9583" stop-color="#029900"/><stop offset="1.0000" stop-color="#0b9900"/></linearGradient><linearGradient id="s37" gradientUnits="userSpaceOnUse" x1="1125.00" y1="0" x2="1415.76" y2="0"><stop offset="0.0000" stop-color="#00991b"/><stop offset="0.7423" stop-color="#009900"/><stop offset="0.9485" stop-color="#049900"/><stop offset="1.0000" stop-color="#0f9900"/></linearGradient><linearGradient id="s38" gradientUnits="userSpaceOnUse" x1="1125.00" y1="0" x2="1420.01" y2="0"><stop offset="0.0000" stop-color="#00991c"/><stop offset="0.7475" stop-color="#009900"/><stop offset="0.9293" stop-color="#039900"/><stop offset="1.0000" stop-color="#139900"/></linearGradient><linearGradient id="s39" gradientUnits="userSpaceOnUse" x1="1125.00" y1="0" x2="1424.24" y2="0"><stop offset="0.0000" stop-color="#00991d"/><stop offset="0.7600" stop-color="#009900"/><stop offset="0.9100" stop-color="#039900"/><stop offset="1.0000" stop-color="#179900"/></linearGradient><linearGradient id="s40" gradientUnits="userSpaceOnUse" x1="1125.00" y1="0" x2="1428.45" y2="0"><stop offset="0.0000" stop-color="#00991e"/><stop offset="0.7647" stop-color="#009900"/><stop offset="0.8922" stop-color="#029900"/><stop offset="1.0000" stop-color="#1c9900"/></linearGradient><linearGradient id="s41" gradientUnits="userSpaceOnUse" x1="1125.00" y1="0" x2="1432.65" y2="0"><stop offset="0.0000" stop-color="#00991f"/><stop offset="0.7670" stop-color="#009900"/><stop offset="0.8835" stop-color="#049900"/><stop offset="1.0000" stop-color="#209900"/></linearGradient><linearGradient id="s42" gradientUnits="userSpaceOnUse" x1="1125.00" y1="0" x2="1436.84" y2="0"><stop offset="0.0000" stop-color="#009920"/><stop offset="0.7692" stop-color="#009900"/><stop offset="0.8654" stop-color="#049900"/><stop offset="1.0000" stop-color="#259900"/></linearGradient><linearGradient id="s43" gradientUnits="userSpaceOnUse" x1="1125.00" y1="0" x2="1441.01" y2="0"><stop offset="0.0000" stop-color="#009921"/><stop offset="0.7736" stop-color="#009900"/><stop offset="0.8491" stop-color="#039900"/><stop offset="1.0000" stop-color="#2a9900"/></linearGradient><linearGradient id="s44" gradientUnits="userSpaceOnUse" x1="1125.00" y1="0" x2="1445.18" y2="0"><stop offset="0.0000" stop-color="#009922"/><stop offset="0.7757" stop-color="#009900"/><stop offset="0.8411" stop-color="#059900"/><stop offset="1.0000" stop-color="#2f9900"/></linearGradient><linearGradient id="s45" gradientUnits="userSpaceOnUse" x1="1125.00" y1="0" x2="1449.33" y2="0"><stop offset="0.0000" stop-color="#009923"/><stop offset="0.7890" stop-color="#009900"/><stop offset="0.8624" stop-color="#0e9900"/><stop offset="1.0000" stop-color="#349900"/></linearGradient><linearGradient id="s46" gradientUnits="userSpaceOnUse" x1="1125.00" y1="0" x2="1453.47" y2="0"><stop offset="0.0000" stop-color="#009924"/><stop offset="0.7909" stop-color="#009900"/><stop offset="1.0000" stop-color="#399900"/></linearGradient><linearGradient id="s47" gradientUnits="userSpaceOnUse" x1="1125.00" y1="0" x2="1457.59" y2="0"><stop offset="0.0000" stop-color="#009925"/><stop offset="0.7928" stop-color="#039900"/><stop offset="1.0000" stop-color="#3f9900"/></linearGradient><linearGradient id="s48" gradientUnits="userSpaceOnUse" x1="1125.00" y1="0" x2="1461.71" y2="0"><stop offset="0.0000" stop-color="#009926"/><stop offset="0.7788" stop-color="#039900"/><stop offset="1.0000" stop-color="#449900"/></linearGradient><linearGradient id="s49" gradientUnits="userSpaceOnUse" x1="1125.00" y1="0" x2="1465.82" y2="0"><stop offset="0.0000" stop-color="#009927"/><stop offset="0.7632" stop-color="#029900"/><stop offset="1.0000" stop-color="#4a9900"/></linearGradient><linearGradient id="s50" gradientUnits="userSpaceOnUse" x1="1125.00" y1="0" x2="1469.92" y2="0"><stop offset="0.0000" stop-color="#009928"/><stop offset="0.7478" stop-color="#019900"/><stop offset="1.0000" stop-color="#509900"/></linearGradient><linearGradient id="s51" gradientUnits="userSpaceOnUse" x1="1125.00" y1="0" x2="1474.02" y2="0"><stop offset="0.0000" stop-color="#009929"/><stop offset="0.7350" stop-color="#019901"/><stop offset="1.0000" stop-color="#579900"/></linearGradient><linearGradient id="s52" gradientUnits="userSpaceOnUse" x1="1125.00" y1="0" x2="1478.12" y2="0"><stop offset="0.0000" stop-color="#00992a"/><stop offset="0.7288" stop-color="#039902"/><stop offset="1.0000" stop-color="#5d9900"/></linearGradient><linearGradient id="s53" gradientUnits="userSpaceOnUse" x1="1125.00" y1="0" x2="1482.23" y2="0"><stop offset="0.0000" stop-color="#00992b"/><stop offset="0.7167" stop-color="#039903"/><stop offset="0.9833" stop-color="#5d9900"/><stop offset="1.0000" stop-color="#649900"/></linearGradient><linearGradient id="s54" gradientUnits="userSpaceOnUse" x1="1125.00" y1="0" x2="1486.33" y2="0"><stop offset="0.0000" stop-color="#00992c"/><stop offset="0.7025" stop-color="#029905"/><stop offset="0.9421" stop-color="#549900"/><stop offset="1.0000" stop-color="#6b9900"/></linearGradient><linearGradient id="s55" gradientUnits="userSpaceOnUse" x1="1125.00" y1="0" x2="1490.42" y2="0"><stop offset="0.0000" stop-color="#00992e"/><stop offset="0.6967" stop-color="#039906"/><stop offset="0.8770" stop-color="#419900"/><stop offset="1.0000" stop-color="#729900"/></linearGradient><linearGradient id="s56" gradientUnits="userSpaceOnUse" x1="1125.00" y1="0" x2="1494.52" y2="0"><stop offset="0.0000" stop-color="#00992f"/><stop offset="0.6855" stop-color="#039907"/><stop offset="0.8548" stop-color="#3e9900"/><stop offset="1.0000" stop-color="#7a9900"/></linearGradient><linearGradient id="s57" gradientUnits="userSpaceOnUse" x1="1125.13" y1="0" x2="1498.61" y2="0"><stop offset="0.0000" stop-color="#009930"/><stop offset="0.6720" stop-color="#029909"/><stop offset="0.8480" stop-color="#409900"/><stop offset="1.0000" stop-color="#829900"/></linearGradient><linearGradient id="s58" gradientUnits="userSpaceOnUse" x1="1125.38" y1="0" x2="1502.70" y2="0"><stop offset="0.0000" stop-color="#009931"/><stop offset="0.6587" stop-color="#01990b"/><stop offset="0.8413" stop-color="#439900"/><stop offset="1.0000" stop-color="#8a9900"/></linearGradient><linearGradient id="s59" gradientUnits="userSpaceOnUse" x1="1125.63" y1="0" x2="1506.78" y2="0"><stop offset="0.0000" stop-color="#009932"/><stop offset="0.6484" stop-color="#01990c"/><stop offset="0.8438" stop-color="#4a9900"/><stop offset="1.0000" stop-color="#939900"/></linearGradient><linearGradient id="s60" gradientUnits="userSpaceOnUse" x1="1125.91" y1="0" x2="1510.85" y2="0"><stop offset="0.0000" stop-color="#009934"/><stop offset="0.6434" stop-color="#03990d"/><stop offset="0.8450" stop-color="#509900"/><stop offset="1.0000" stop-color="#999600"/></linearGradient><linearGradient id="s61" gradientUnits="userSpaceOnUse" x1="1126.22" y1="0" x2="1514.92" y2="0"><stop offset="0.0000" stop-color="#009935"/><stop offset="0.6308" stop-color="#02990f"/><stop offset="0.8462" stop-color="#579900"/><stop offset="0.9846" stop-color="#999500"/><stop offset="1.0000" stop-color="#998e00"/></linearGradient><linearGradient id="s62" gradientUnits="userSpaceOnUse" x1="1126.52" y1="0" x2="1518.98" y2="0"><stop offset="0.0000" stop-color="#009936"/><stop offset="0.6183" stop-color="#019911"/><stop offset="0.8397" stop-color="#5b9900"/><stop offset="0.9618" stop-color="#999900"/><stop offset="1.0000" stop-color="#998600"/></linearGradient><linearGradient id="s63" gradientUnits="userSpaceOnUse" x1="1126.82" y1="0" x2="1523.04" y2="0"><stop offset="0.0000" stop-color="#009937"/><stop offset="0.6090" stop-color="#019913"/><stop offset="0.8271" stop-color="#5b9900"/><stop offset="0.9474" stop-color="#999800"/><stop offset="1.0000" stop-color="#997e00"/></linearGradient><linearGradient id="s64" gradientUnits="userSpaceOnUse" x1="1127.14" y1="0" x2="1527.09" y2="0"><stop offset="0.0000" stop-color="#009939"/><stop offset="0.6045" stop-color="#039914"/><stop offset="0.8209" stop-color="#5f9900"/><stop offset="0.9328" stop-color="#999700"/><stop offset="1.0000" stop-color="#997700"/></linearGradient><linearGradient id="s65" gradientUnits="userSpaceOnUse" x1="1127.50" y1="0" x2="1531.14" y2="0"><stop offset="0.0000" stop-color="#00993a"/><stop offset="0.5926" stop-color="#029916"/><stop offset="0.8074" stop-color="#5f9901"/><stop offset="0.9185" stop-color="#999700"/><stop offset="1.0000" stop-color="#997100"/></linearGradient><linearGradient id="s66" gradientUnits="userSpaceOnUse" x1="1127.87" y1="0" x2="1535.20" y2="0"><stop offset="0.0000" stop-color="#00993b"/><stop offset="0.5809" stop-color="#019918"/><stop offset="0.7868" stop-color="#5b9904"/><stop offset="0.9044" stop-color="#999600"/><stop offset="1.0000" stop-color="#996b00"/></linearGradient><linearGradient id="s67" gradientUnits="userSpaceOnUse" x1="1128.23" y1="0" x2="1539.25" y2="0"><stop offset="0.0000" stop-color="#00993d"/><stop offset="0.5725" stop-color="#01991a"/><stop offset="0.7754" stop-color="#5c9906"/><stop offset="0.8841" stop-color="#999900"/><stop offset="0.9855" stop-color="#996a00"/><stop offset="1.0000" stop-color="#996500"/></linearGradient><linearGradient id="s68" gradientUnits="userSpaceOnUse" x1="1128.59" y1="0" x2="1543.30" y2="0"><stop offset="0.0000" stop-color="#00993e"/><stop offset="0.5683" stop-color="#03991b"/><stop offset="0.7698" stop-color="#5f9907"/><stop offset="0.8705" stop-color="#999900"/><stop offset="0.9712" stop-color="#996900"/><stop offset="1.0000" stop-color="#995f00"/></linearGradient><linearGradient id="s69" gradientUnits="userSpaceOnUse" x1="1129.00" y1="0" x2="1547.35" y2="0"><stop offset="0.0000" stop-color="#009940"/><stop offset="0.5571" stop-color="#02991d"/><stop offset="0.7500" stop-color="#5b990a"/><stop offset="0.8571" stop-color="#999800"/><stop offset="0.9571" stop-color="#996800"/><stop offset="1.0000" stop-color="#995a00"/></linearGradient><linearGradient id="s70" gradientUnits="userSpaceOnUse" x1="1129.43" y1="0" x2="1551.39" y2="0"><stop offset="0.0000" stop-color="#009941"/><stop offset="0.5461" stop-color="#01991f"/><stop offset="0.7376" stop-color="#5b990c"/><stop offset="0.8440" stop-color="#999700"/><stop offset="0.9433" stop-color="#996700"/><stop offset="1.0000" stop-color="#995500"/></linearGradient><linearGradient id="s71" gradientUnits="userSpaceOnUse" x1="1129.85" y1="0" x2="1555.44" y2="0"><stop offset="0.0000" stop-color="#009943"/><stop offset="0.5423" stop-color="#039921"/><stop offset="0.7324" stop-color="#5f990e"/><stop offset="0.8310" stop-color="#999701"/><stop offset="0.9296" stop-color="#996700"/><stop offset="1.0000" stop-color="#995100"/></linearGradient><linearGradient id="s72" gradientUnits="userSpaceOnUse" x1="1130.27" y1="0" x2="1559.48" y2="0"><stop offset="0.0000" stop-color="#009944"/><stop offset="0.5347" stop-color="#039923"/><stop offset="0.7222" stop-color="#609910"/><stop offset="0.8125" stop-color="#989904"/><stop offset="0.9097" stop-color="#996800"/><stop offset="1.0000" stop-color="#994c00"/></linearGradient><linearGradient id="s73" gradientUnits="userSpaceOnUse" x1="1130.72" y1="0" x2="1563.53" y2="0"><stop offset="0.0000" stop-color="#009946"/><stop offset="0.5241" stop-color="#029925"/><stop offset="0.7034" stop-color="#5c9913"/><stop offset="0.8000" stop-color="#999907"/><stop offset="0.8897" stop-color="#996a00"/><stop offset="1.0000" stop-color="#994800"/></linearGradient><linearGradient id="s74" gradientUnits="userSpaceOnUse" x1="1131.20" y1="0" x2="1567.58" y2="0"><stop offset="0.0000" stop-color="#009947"/><stop offset="0.5137" stop-color="#019927"/><stop offset="0.6918" stop-color="#5c9916"/><stop offset="0.7877" stop-color="#999909"/><stop offset="0.8767" stop-color="#996900"/><stop offset="1.0000" stop-color="#994400"/></linearGradient><linearGradient id="s75" gradientUnits="userSpaceOnUse" x1="1131.67" y1="0" x2="1571.62" y2="0"><stop offset="0.0000" stop-color="#009949"/><stop offset="0.5102" stop-color="#039929"/><stop offset="0.6871" stop-color="#609917"/><stop offset="0.7755" stop-color="#99980c"/><stop offset="0.8639" stop-color="#996900"/><stop offset="1.0000" stop-color="#994100"/></linearGradient><linearGradient id="s76" gradientUnits="userSpaceOnUse" x1="1132.15" y1="0" x2="1575.67" y2="0"><stop offset="0.0000" stop-color="#00994b"/><stop offset="0.5000" stop-color="#02992c"/><stop offset="0.6689" stop-color="#5b991b"/><stop offset="0.7635" stop-color="#99970e"/><stop offset="0.8514" stop-color="#996801"/><stop offset="0.9932" stop-color="#993e00"/><stop offset="1.0000" stop-color="#993d00"/></linearGradient><linearGradient id="s77" gradientUnits="userSpaceOnUse" x1="1132.62" y1="0" x2="1579.71" y2="0"><stop offset="0.0000" stop-color="#00994c"/><stop offset="0.4933" stop-color="#02992e"/><stop offset="0.6600" stop-color="#5c991d"/><stop offset="0.7533" stop-color="#999611"/><stop offset="0.8400" stop-color="#996702"/><stop offset="0.9800" stop-color="#993e00"/><stop offset="1.0000" stop-color="#993a00"/></linearGradient><linearGradient id="s78" gradientUnits="userSpaceOnUse" x1="1133.14" y1="0" x2="1583.76" y2="0"><stop offset="0.0000" stop-color="#00994e"/><stop offset="0.4834" stop-color="#019930"/><stop offset="0.6490" stop-color="#5c9920"/><stop offset="0.7351" stop-color="#989915"/><stop offset="0.8212" stop-color="#996805"/><stop offset="0.9536" stop-color="#994000"/><stop offset="1.0000" stop-color="#993600"/></linearGradient><linearGradient id="s79" gradientUnits="userSpaceOnUse" x1="1133.66" y1="0" x2="1587.81" y2="0"><stop offset="0.0000" stop-color="#009950"/><stop offset="0.4803" stop-color="#039932"/><stop offset="0.6382" stop-color="#5c9922"/><stop offset="0.7237" stop-color="#999918"/><stop offset="0.8026" stop-color="#996b08"/><stop offset="0.9145" stop-color="#994500"/><stop offset="1.0000" stop-color="#993300"/></linearGradient><linearGradient id="s80" gradientUnits="userSpaceOnUse" x1="1134.18" y1="0" x2="1591.86" y2="0"><stop offset="0.0000" stop-color="#009951"/><stop offset="0.4706" stop-color="#029935"/><stop offset="0.6275" stop-color="#5c9925"/><stop offset="0.7124" stop-color="#99991a"/><stop offset="0.7908" stop-color="#996a0a"/><stop offset="0.9085" stop-color="#994300"/><stop offset="1.0000" stop-color="#993000"/></linearGradient><linearGradient id="s81" gradientUnits="userSpaceOnUse" x1="1134.71" y1="0" x2="1595.91" y2="0"><stop offset="0.0000" stop-color="#009953"/><stop offset="0.4610" stop-color="#019937"/><stop offset="0.6169" stop-color="#5c9928"/><stop offset="0.7013" stop-color="#99981d"/><stop offset="0.7792" stop-color="#99690c"/><stop offset="0.9026" stop-color="#994000"/><stop offset="1.0000" stop-color="#992d00"/></linearGradient><linearGradient id="s82" gradientUnits="userSpaceOnUse" x1="1135.24" y1="0" x2="1599.97" y2="0"><stop offset="0.0000" stop-color="#009955"/><stop offset="0.4581" stop-color="#03993a"/><stop offset="0.6129" stop-color="#60992a"/><stop offset="0.6903" stop-color="#999720"/><stop offset="0.7677" stop-color="#99680e"/><stop offset="0.8903" stop-color="#993f00"/><stop offset="1.0000" stop-color="#992a00"/></linearGradient><linearGradient id="s83" gradientUnits="userSpaceOnUse" x1="1135.81" y1="0" x2="1604.04" y2="0"><stop offset="0.0000" stop-color="#009957"/><stop offset="0.4459" stop-color="#00993d"/><stop offset="0.5987" stop-color="#5d992e"/><stop offset="0.6752" stop-color="#989924"/><stop offset="0.7580" stop-color="#996710"/><stop offset="0.8790" stop-color="#993e00"/><stop offset="1.0000" stop-color="#992800"/></linearGradient><linearGradient id="s84" gradientUnits="userSpaceOnUse" x1="1136.37" y1="0" x2="1608.10" y2="0"><stop offset="0.0000" stop-color="#009959"/><stop offset="0.4430" stop-color="#03993f"/><stop offset="0.5886" stop-color="#5d9931"/><stop offset="0.6646" stop-color="#989927"/><stop offset="0.7405" stop-color="#996913"/><stop offset="0.8608" stop-color="#993f02"/><stop offset="1.0000" stop-color="#992500"/></linearGradient><linearGradient id="s85" gradientUnits="userSpaceOnUse" x1="1136.93" y1="0" x2="1612.17" y2="0"><stop offset="0.0000" stop-color="#00995b"/><stop offset="0.4340" stop-color="#019942"/><stop offset="0.5786" stop-color="#5d9934"/><stop offset="0.6541" stop-color="#99992b"/><stop offset="0.7233" stop-color="#996b17"/><stop offset="0.8365" stop-color="#994205"/><stop offset="0.9937" stop-color="#992400"/><stop offset="1.0000" stop-color="#992300"/></linearGradient><linearGradient id="s86" gradientUnits="userSpaceOnUse" x1="1137.49" y1="0" x2="1616.23" y2="0"><stop offset="0.0000" stop-color="#00995d"/><stop offset="0.4250" stop-color="#009945"/><stop offset="0.5687" stop-color="#5c9937"/><stop offset="0.6438" stop-color="#99982e"/><stop offset="0.7125" stop-color="#996a19"/><stop offset="0.8250" stop-color="#994107"/><stop offset="0.9625" stop-color="#992600"/><stop offset="1.0000" stop-color="#992000"/></linearGradient><linearGradient id="s87" gradientUnits="userSpaceOnUse" x1="1138.09" y1="0" x2="1620.29" y2="0"><stop offset="0.0000" stop-color="#00995f"/><stop offset="0.4224" stop-color="#029947"/><stop offset="0.5590" stop-color="#5c993a"/><stop offset="0.6335" stop-color="#999831"/><stop offset="0.7019" stop-color="#99691c"/><stop offset="0.8137" stop-color="#994008"/><stop offset="0.9503" stop-color="#992500"/><stop offset="1.0000" stop-color="#991e00"/></linearGradient><linearGradient id="s88" gradientUnits="userSpaceOnUse" x1="1138.69" y1="0" x2="1624.33" y2="0"><stop offset="0.0000" stop-color="#009961"/><stop offset="0.4136" stop-color="#01994a"/><stop offset="0.5494" stop-color="#5c993e"/><stop offset="0.6235" stop-color="#999735"/><stop offset="0.6914" stop-color="#99681e"/><stop offset="0.8025" stop-color="#993f0a"/><stop offset="0.9444" stop-color="#992300"/><stop offset="1.0000" stop-color="#991c00"/></linearGradient><linearGradient id="s89" gradientUnits="userSpaceOnUse" x1="1139.29" y1="0" x2="1628.37" y2="0"><stop offset="0.0000" stop-color="#009963"/><stop offset="0.4085" stop-color="#02994d"/><stop offset="0.5427" stop-color="#5e9941"/><stop offset="0.6098" stop-color="#989939"/><stop offset="0.6829" stop-color="#996720"/><stop offset="0.7927" stop-color="#993e0b"/><stop offset="0.9451" stop-color="#992100"/><stop offset="1.0000" stop-color="#991a00"/></linearGradient><linearGradient id="s90" gradientUnits="userSpaceOnUse" x1="1139.89" y1="0" x2="1632.40" y2="0"><stop offset="0.0000" stop-color="#009965"/><stop offset="0.4000" stop-color="#019950"/><stop offset="0.5273" stop-color="#599945"/><stop offset="0.6000" stop-color="#99993d"/><stop offset="0.6667" stop-color="#996924"/><stop offset="0.7697" stop-color="#99400f"/><stop offset="0.9394" stop-color="#991f00"/><stop offset="1.0000" stop-color="#991800"/></linearGradient><linearGradient id="s91" gradientUnits="userSpaceOnUse" x1="1140.51" y1="0" x2="1636.43" y2="0"><stop offset="0.0000" stop-color="#009968"/><stop offset="0.3976" stop-color="#039953"/><stop offset="0.5241" stop-color="#5d9948"/><stop offset="0.5904" stop-color="#999941"/><stop offset="0.6506" stop-color="#996b28"/><stop offset="0.7470" stop-color="#994312"/><stop offset="0.9157" stop-color="#992000"/><stop offset="1.0000" stop-color="#991600"/></linearGradient><linearGradient id="s92" gradientUnits="userSpaceOnUse" x1="1141.15" y1="0" x2="1640.46" y2="0"><stop offset="0.0000" stop-color="#00996a"/><stop offset="0.3892" stop-color="#029956"/><stop offset="0.5150" stop-color="#5d994c"/><stop offset="0.5808" stop-color="#999845"/><stop offset="0.6407" stop-color="#996b2b"/><stop offset="0.7365" stop-color="#994214"/><stop offset="0.9042" stop-color="#991f00"/><stop offset="1.0000" stop-color="#991400"/></linearGradient><linearGradient id="s93" gradientUnits="userSpaceOnUse" x1="1141.80" y1="0" x2="1644.50" y2="0"><stop offset="0.0000" stop-color="#00996c"/><stop offset="0.3810" stop-color="#00995a"/><stop offset="0.5060" stop-color="#5d9950"/><stop offset="0.5714" stop-color="#999748"/><stop offset="0.6310" stop-color="#996a2d"/><stop offset="0.7262" stop-color="#994116"/><stop offset="0.8929" stop-color="#991f01"/><stop offset="1.0000" stop-color="#991200"/></linearGradient><linearGradient id="s94" gradientUnits="userSpaceOnUse" x1="1142.44" y1="0" x2="1648.55" y2="0"><stop offset="0.0000" stop-color="#00996f"/><stop offset="0.3787" stop-color="#03995d"/><stop offset="0.4970" stop-color="#5d9954"/><stop offset="0.5621" stop-color="#99974c"/><stop offset="0.6213" stop-color="#996930"/><stop offset="0.7160" stop-color="#994017"/><stop offset="0.8817" stop-color="#991e02"/><stop offset="1.0000" stop-color="#991000"/></linearGradient><linearGradient id="s95" gradientUnits="userSpaceOnUse" x1="1143.09" y1="0" x2="1652.60" y2="0"><stop offset="0.0000" stop-color="#009971"/><stop offset="0.3706" stop-color="#029961"/><stop offset="0.4882" stop-color="#5c9958"/><stop offset="0.5529" stop-color="#999650"/><stop offset="0.6118" stop-color="#996833"/><stop offset="0.7059" stop-color="#993f19"/><stop offset="0.8706" stop-color="#991d04"/><stop offset="1.0000" stop-color="#990f00"/></linearGradient><linearGradient id="s96" gradientUnits="userSpaceOnUse" x1="1143.79" y1="0" x2="1656.65" y2="0"><stop offset="0.0000" stop-color="#009974"/><stop offset="0.3626" stop-color="#009964"/><stop offset="0.4795" stop-color="#5c995c"/><stop offset="0.5439" stop-color="#999554"/><stop offset="0.6023" stop-color="#996736"/><stop offset="0.6959" stop-color="#993e1b"/><stop offset="0.8596" stop-color="#991c05"/><stop offset="1.0000" stop-color="#990d00"/></linearGradient><linearGradient id="s97" gradientUnits="userSpaceOnUse" x1="1144.48" y1="0" x2="1660.71" y2="0"><stop offset="0.0000" stop-color="#009977"/><stop offset="0.3584" stop-color="#019968"/><stop offset="0.4682" stop-color="#599961"/><stop offset="0.5318" stop-color="#99985b"/><stop offset="0.5896" stop-color="#99683a"/><stop offset="0.6821" stop-color="#993f1e"/><stop offset="0.8439" stop-color="#991c06"/><stop offset="1.0000" stop-color="#990b00"/></linearGradient><linearGradient id="s98" gradientUnits="userSpaceOnUse" x1="1145.18" y1="0" x2="1664.76" y2="0"><stop offset="0.0000" stop-color="#009979"/><stop offset="0.3506" stop-color="#00996c"/><stop offset="0.4598" stop-color="#599965"/><stop offset="0.5230" stop-color="#99975f"/><stop offset="0.5805" stop-color="#99673d"/><stop offset="0.6724" stop-color="#993e20"/><stop offset="0.8333" stop-color="#991b08"/><stop offset="1.0000" stop-color="#990a00"/></linearGradient><linearGradient id="s99" gradientUnits="userSpaceOnUse" x1="1145.87" y1="0" x2="1668.81" y2="0"><stop offset="0.0000" stop-color="#00997c"/><stop offset="0.3486" stop-color="#039970"/><stop offset="0.4571" stop-color="#5e9969"/><stop offset="0.5143" stop-color="#999663"/><stop offset="0.5714" stop-color="#996640"/><stop offset="0.6629" stop-color="#993d22"/><stop offset="0.8229" stop-color="#991b09"/><stop offset="0.9943" stop-color="#990900"/><stop offset="1.0000" stop-color="#990800"/></linearGradient><linearGradient id="s100" gradientUnits="userSpaceOnUse" x1="1146.61" y1="0" x2="1672.86" y2="0"><stop offset="0.0000" stop-color="#00997f"/><stop offset="0.3409" stop-color="#019974"/><stop offset="0.4432" stop-color="#59996e"/><stop offset="0.5057" stop-color="#999668"/><stop offset="0.5568" stop-color="#996946"/><stop offset="0.6420" stop-color="#994027"/><stop offset="0.7898" stop-color="#991d0c"/><stop offset="0.9773" stop-color="#990800"/><stop offset="1.0000" stop-color="#990700"/></linearGradient><linearGradient id="s101" gradientUnits="userSpaceOnUse" x1="1147.35" y1="0" x2="1676.92" y2="0"><stop offset="0.0000" stop-color="#009982"/><stop offset="0.3333" stop-color="#009978"/><stop offset="0.4350" stop-color="#589973"/><stop offset="0.4915" stop-color="#979970"/><stop offset="0.5537" stop-color="#996446"/><stop offset="0.6384" stop-color="#993d27"/><stop offset="0.7910" stop-color="#991b0c"/><stop offset="0.9831" stop-color="#990700"/><stop offset="1.0000" stop-color="#990500"/></linearGradient><linearGradient id="s102" gradientUnits="userSpaceOnUse" x1="1148.09" y1="0" x2="1680.97" y2="0"><stop offset="0.0000" stop-color="#009985"/><stop offset="0.3315" stop-color="#03997c"/><stop offset="0.4326" stop-color="#5e9978"/><stop offset="0.4831" stop-color="#979975"/><stop offset="0.5393" stop-color="#99674c"/><stop offset="0.6236" stop-color="#993e2b"/><stop offset="0.7697" stop-color="#991c0f"/><stop offset="0.9775" stop-color="#990600"/><stop offset="1.0000" stop-color="#990400"/></linearGradient><linearGradient id="s103" gradientUnits="userSpaceOnUse" x1="1148.83" y1="0" x2="1685.04" y2="0"><stop offset="0.0000" stop-color="#009988"/><stop offset="0.3240" stop-color="#019981"/><stop offset="0.4246" stop-color="#5e997d"/><stop offset="0.4749" stop-color="#98997b"/><stop offset="0.5251" stop-color="#996a53"/><stop offset="0.6034" stop-color="#994130"/><stop offset="0.7374" stop-color="#991e13"/><stop offset="0.9665" stop-color="#990500"/><stop offset="1.0000" stop-color="#990300"/></linearGradient><linearGradient id="s104" gradientUnits="userSpaceOnUse" x1="1149.59" y1="0" x2="1689.12" y2="0"><stop offset="0.0000" stop-color="#00998b"/><stop offset="0.3167" stop-color="#009985"/><stop offset="0.4111" stop-color="#579983"/><stop offset="0.4667" stop-color="#999980"/><stop offset="0.5167" stop-color="#996856"/><stop offset="0.5944" stop-color="#994032"/><stop offset="0.7278" stop-color="#991e15"/><stop offset="0.9611" stop-color="#990400"/><stop offset="1.0000" stop-color="#990100"/></linearGradient><linearGradient id="s105" gradientUnits="userSpaceOnUse" x1="1150.36" y1="0" x2="1693.21" y2="0"><stop offset="0.0000" stop-color="#00998e"/><stop offset="0.3149" stop-color="#03998a"/><stop offset="0.4088" stop-color="#5d9988"/><stop offset="0.4586" stop-color="#999886"/><stop offset="0.5028" stop-color="#996b5d"/><stop offset="0.5746" stop-color="#994339"/><stop offset="0.7017" stop-color="#992019"/><stop offset="0.9503" stop-color="#990300"/><stop offset="1.0000" stop-color="#990000"/></linearGradient><linearGradient id="s106" gradientUnits="userSpaceOnUse" x1="1151.14" y1="0" x2="1697.29" y2="0"><stop offset="0.0000" stop-color="#009992"/><stop offset="0.3060" stop-color="#00998f"/><stop offset="0.3989" stop-color="#5b998e"/><stop offset="0.4481" stop-color="#97998d"/><stop offset="0.4973" stop-color="#99685f"/><stop offset="0.5738" stop-color="#993f38"/><stop offset="0.7049" stop-color="#991c18"/><stop offset="0.9508" stop-color="#990200"/><stop offset="1.0000" stop-color="#990000"/></linearGradient><linearGradient id="s107" gradientUnits="userSpaceOnUse" x1="1151.92" y1="0" x2="1701.35" y2="0"><stop offset="0.0000" stop-color="#009995"/><stop offset="0.3043" stop-color="#039994"/><stop offset="0.3913" stop-color="#5a9994"/><stop offset="0.4402" stop-color="#989993"/><stop offset="0.4891" stop-color="#996763"/><stop offset="0.5598" stop-color="#99403d"/><stop offset="0.6848" stop-color="#991d1c"/><stop offset="0.9348" stop-color="#990201"/><stop offset="1.0000" stop-color="#990000"/></linearGradient><linearGradient id="s108" gradientUnits="userSpaceOnUse" x1="1152.71" y1="0" x2="1705.38" y2="0"><stop offset="0.0000" stop-color="#009999"/><stop offset="0.2973" stop-color="#019999"/><stop offset="0.3838" stop-color="#5a9899"/><stop offset="0.4324" stop-color="#989899"/><stop offset="0.4757" stop-color="#996a6b"/><stop offset="0.5459" stop-color="#994141"/><stop offset="0.6649" stop-color="#991f1f"/><stop offset="0.9027" stop-color="#990203"/><stop offset="1.0000" stop-color="#990000"/></linearGradient><linearGradient id="s109" gradientUnits="userSpaceOnUse" x1="1153.53" y1="0" x2="1709.41" y2="0"><stop offset="0.0000" stop-color="#009699"/><stop offset="0.2903" stop-color="#009399"/><stop offset="0.3763" stop-color="#569299"/><stop offset="0.4301" stop-color="#999098"/><stop offset="0.4731" stop-color="#99656a"/><stop offset="0.5430" stop-color="#993d42"/><stop offset="0.6667" stop-color="#991c1f"/><stop offset="0.9086" stop-color="#990103"/><stop offset="1.0000" stop-color="#990000"/></linearGradient><linearGradient id="s110" gradientUnits="userSpaceOnUse" x1="1154.34" y1="0" x2="1713.44" y2="0"><stop offset="0.0000" stop-color="#009299"/><stop offset="0.2888" stop-color="#038e99"/><stop offset="0.3797" stop-color="#5f8c99"/><stop offset="0.4278" stop-color="#998996"/><stop offset="0.4706" stop-color="#995f6a"/><stop offset="0.5401" stop-color="#993a42"/><stop offset="0.6631" stop-color="#991a1f"/><stop offset="0.9037" stop-color="#990003"/><stop offset="1.0000" stop-color="#990000"/></linearGradient><linearGradient id="s111" gradientUnits="userSpaceOnUse" x1="1155.16" y1="0" x2="1717.47" y2="0"><stop offset="0.0000" stop-color="#008e99"/><stop offset="0.2819" stop-color="#018999"/><stop offset="0.3723" stop-color="#5b8799"/><stop offset="0.4202" stop-color="#968599"/><stop offset="0.4734" stop-color="#995765"/><stop offset="0.5479" stop-color="#99333e"/><stop offset="0.6809" stop-color="#99141c"/><stop offset="0.9043" stop-color="#990003"/><stop offset="1.0000" stop-color="#990000"/></linearGradient><linearGradient id="s112" gradientUnits="userSpaceOnUse" x1="1155.98" y1="0" x2="1721.52" y2="0"><stop offset="0.0000" stop-color="#008b99"/><stop offset="0.2751" stop-color="#008599"/><stop offset="0.3651" stop-color="#578299"/><stop offset="0.4180" stop-color="#987f99"/><stop offset="0.4656" stop-color="#995569"/><stop offset="0.5397" stop-color="#993240"/><stop offset="0.6667" stop-color="#99141e"/><stop offset="0.8889" stop-color="#990004"/><stop offset="1.0000" stop-color="#990000"/></linearGradient><linearGradient id="s113" gradientUnits="userSpaceOnUse" x1="1156.82" y1="0" x2="1725.60" y2="0"><stop offset="0.0000" stop-color="#008899"/><stop offset="0.2737" stop-color="#038099"/><stop offset="0.3684" stop-color="#5f7c99"/><stop offset="0.4158" stop-color="#997898"/><stop offset="0.4632" stop-color="#995169"/><stop offset="0.5368" stop-color="#992f40"/><stop offset="0.6684" stop-color="#99121e"/><stop offset="0.8737" stop-color="#990006"/><stop offset="1.0000" stop-color="#990000"/></linearGradient><linearGradient id="s114" gradientUnits="userSpaceOnUse" x1="1157.67" y1="0" x2="1729.67" y2="0"><stop offset="0.0000" stop-color="#008499"/><stop offset="0.2670" stop-color="#017c99"/><stop offset="0.3613" stop-color="#5c7799"/><stop offset="0.4136" stop-color="#997196"/><stop offset="0.4607" stop-color="#994c68"/><stop offset="0.5340" stop-color="#992c41"/><stop offset="0.6649" stop-color="#99101e"/><stop offset="0.8586" stop-color="#990007"/><stop offset="1.0000" stop-color="#990000"/></linearGradient><linearGradient id="s115" gradientUnits="userSpaceOnUse" x1="1158.52" y1="0" x2="1733.71" y2="0"><stop offset="0.0000" stop-color="#008199"/><stop offset="0.2604" stop-color="#007899"/><stop offset="0.3542" stop-color="#587299"/><stop offset="0.4062" stop-color="#976e99"/><stop offset="0.4635" stop-color="#994564"/><stop offset="0.5417" stop-color="#99263d"/><stop offset="0.6823" stop-color="#990c1b"/><stop offset="0.8490" stop-color="#990008"/><stop offset="1.0000" stop-color="#990000"/></linearGradient><linearGradient id="s116" gradientUnits="userSpaceOnUse" x1="1159.38" y1="0" x2="1737.74" y2="0"><stop offset="0.0000" stop-color="#007e99"/><stop offset="0.2591" stop-color="#037399"/><stop offset="0.3523" stop-color="#5b6d99"/><stop offset="0.4041" stop-color="#986999"/><stop offset="0.4560" stop-color="#994467"/><stop offset="0.5337" stop-color="#99253f"/><stop offset="0.6684" stop-color="#990c1d"/><stop offset="0.8290" stop-color="#99000a"/><stop offset="1.0000" stop-color="#990000"/></linearGradient><linearGradient id="s117" gradientUnits="userSpaceOnUse" x1="1160.26" y1="0" x2="1741.77" y2="0"><stop offset="0.0000" stop-color="#007b99"/><stop offset="0.2526" stop-color="#026f99"/><stop offset="0.3505" stop-color="#5d6899"/><stop offset="0.4021" stop-color="#996398"/><stop offset="0.4485" stop-color="#99426b"/><stop offset="0.5258" stop-color="#992441"/><stop offset="0.6598" stop-color="#990b1e"/><stop offset="0.8144" stop-color="#99000b"/><stop offset="1.0000" stop-color="#990000"/></linearGradient><linearGradient id="s118" gradientUnits="userSpaceOnUse" x1="1161.15" y1="0" x2="1745.84" y2="0"><stop offset="0.0000" stop-color="#007799"/><stop offset="0.2462" stop-color="#006b99"/><stop offset="0.3436" stop-color="#5a6499"/><stop offset="0.4000" stop-color="#995d96"/><stop offset="0.4513" stop-color="#993c67"/><stop offset="0.5333" stop-color="#991f3e"/><stop offset="0.6769" stop-color="#99071b"/><stop offset="0.8256" stop-color="#99000a"/><stop offset="1.0000" stop-color="#990000"/></linearGradient><linearGradient id="s119" gradientUnits="userSpaceOnUse" x1="1162.03" y1="0" x2="1749.93" y2="0"><stop offset="0.0000" stop-color="#007499"/><stop offset="0.2449" stop-color="#036799"/><stop offset="0.3418" stop-color="#5c5f99"/><stop offset="0.3929" stop-color="#975a99"/><stop offset="0.4490" stop-color="#993866"/><stop offset="0.5306" stop-color="#991c3e"/><stop offset="0.6735" stop-color="#99051c"/><stop offset="0.8367" stop-color="#990009"/><stop offset="1.0000" stop-color="#990000"/></linearGradient><linearGradient id="s120" gradientUnits="userSpaceOnUse" x1="1162.95" y1="0" x2="1753.97" y2="0"><stop offset="0.0000" stop-color="#007199"/><stop offset="0.2374" stop-color="#016499"/><stop offset="0.3384" stop-color="#5c5b99"/><stop offset="0.3939" stop-color="#995396"/><stop offset="0.4444" stop-color="#993567"/><stop offset="0.5253" stop-color="#991b3f"/><stop offset="0.6667" stop-color="#99041d"/><stop offset="0.9192" stop-color="#990003"/><stop offset="1.0000" stop-color="#990000"/></linearGradient><linearGradient id="s121" gradientUnits="userSpaceOnUse" x1="1163.88" y1="0" x2="1757.50" y2="0"><stop offset="0.0000" stop-color="#006e99"/><stop offset="0.2323" stop-color="#006099"/><stop offset="0.3333" stop-color="#5b5799"/><stop offset="0.3889" stop-color="#995098"/><stop offset="0.4394" stop-color="#993369"/><stop offset="0.5202" stop-color="#991940"/><stop offset="0.6616" stop-color="#99031e"/><stop offset="0.9394" stop-color="#990002"/><stop offset="1.0000" stop-color="#990000"/></linearGradient><linearGradient id="s122" gradientUnits="userSpaceOnUse" x1="1164.81" y1="0" x2="1757.45" y2="0"><stop offset="0.0000" stop-color="#006b99"/><stop offset="0.2323" stop-color="#035d99"/><stop offset="0.3333" stop-color="#5c5399"/><stop offset="0.3889" stop-color="#994c98"/><stop offset="0.4394" stop-color="#992f69"/><stop offset="0.5202" stop-color="#991741"/><stop offset="0.6616" stop-color="#99021e"/><stop offset="0.9394" stop-color="#990002"/><stop offset="1.0000" stop-color="#990000"/></linearGradient><linearGradient id="s123" gradientUnits="userSpaceOnUse" x1="1165.75" y1="0" x2="1748.76" y2="0"><stop offset="0.0000" stop-color="#006899"/><stop offset="0.2308" stop-color="#015999"/><stop offset="0.3385" stop-color="#5e4f99"/><stop offset="0.3949" stop-color="#994797"/><stop offset="0.4462" stop-color="#992c69"/><stop offset="0.5282" stop-color="#991541"/><stop offset="0.6718" stop-color="#99011f"/><stop offset="0.9538" stop-color="#990003"/><stop offset="1.0000" stop-color="#990000"/></linearGradient><linearGradient id="s124" gradientUnits="userSpaceOnUse" x1="1166.73" y1="0" x2="1740.07" y2="0"><stop offset="0.0000" stop-color="#006599"/><stop offset="0.2292" stop-color="#005699"/><stop offset="0.3385" stop-color="#5a4b99"/><stop offset="0.4010" stop-color="#994296"/><stop offset="0.4583" stop-color="#992766"/><stop offset="0.5469" stop-color="#99113e"/><stop offset="0.7031" stop-color="#99001c"/><stop offset="1.0000" stop-color="#990002"/></linearGradient><linearGradient id="s125" gradientUnits="userSpaceOnUse" x1="1167.71" y1="0" x2="1731.38" y2="0"><stop offset="0.0000" stop-color="#006399"/><stop offset="0.2340" stop-color="#035399"/><stop offset="0.3457" stop-color="#5e4799"/><stop offset="0.4043" stop-color="#993f98"/><stop offset="0.4628" stop-color="#992568"/><stop offset="0.5532" stop-color="#990f3f"/><stop offset="0.7021" stop-color="#99001e"/><stop offset="1.0000" stop-color="#990003"/></linearGradient><linearGradient id="s126" gradientUnits="userSpaceOnUse" x1="1168.70" y1="0" x2="1722.69" y2="0"><stop offset="0.0000" stop-color="#006099"/><stop offset="0.2324" stop-color="#025099"/><stop offset="0.3459" stop-color="#5b4499"/><stop offset="0.4108" stop-color="#993b97"/><stop offset="0.4703" stop-color="#992268"/><stop offset="0.5622" stop-color="#990d40"/><stop offset="0.7027" stop-color="#990021"/><stop offset="1.0000" stop-color="#990004"/></linearGradient><linearGradient id="s127" gradientUnits="userSpaceOnUse" x1="1169.71" y1="0" x2="1714.00" y2="0"><stop offset="0.0000" stop-color="#005d99"/><stop offset="0.2308" stop-color="#014d99"/><stop offset="0.3516" stop-color="#5c4099"/><stop offset="0.4176" stop-color="#993796"/><stop offset="0.4780" stop-color="#991f68"/><stop offset="0.5769" stop-color="#990b3e"/><stop offset="0.7088" stop-color="#990022"/><stop offset="1.0000" stop-color="#990006"/></linearGradient><linearGradient id="s128" gradientUnits="userSpaceOnUse" x1="1170.73" y1="0" x2="1705.31" y2="0"><stop offset="0.0000" stop-color="#005a99"/><stop offset="0.2346" stop-color="#034999"/><stop offset="0.3575" stop-color="#5e3d99"/><stop offset="0.4246" stop-color="#993295"/><stop offset="0.4860" stop-color="#991c68"/><stop offset="0.5866" stop-color="#99093f"/><stop offset="0.7095" stop-color="#990024"/><stop offset="1.0000" stop-color="#990007"/></linearGradient><linearGradient id="s129" gradientUnits="userSpaceOnUse" x1="1171.76" y1="0" x2="1696.62" y2="0"><stop offset="0.0000" stop-color="#005799"/><stop offset="0.2343" stop-color="#034799"/><stop offset="0.3600" stop-color="#5c3999"/><stop offset="0.4286" stop-color="#993098"/><stop offset="0.4914" stop-color="#991a69"/><stop offset="0.5943" stop-color="#990740"/><stop offset="0.7143" stop-color="#990026"/><stop offset="1.0000" stop-color="#990009"/></linearGradient><linearGradient id="s130" gradientUnits="userSpaceOnUse" x1="1172.81" y1="0" x2="1687.93" y2="0"><stop offset="0.0000" stop-color="#005599"/><stop offset="0.2326" stop-color="#014499"/><stop offset="0.3663" stop-color="#5e3699"/><stop offset="0.4360" stop-color="#992c97"/><stop offset="0.5000" stop-color="#991869"/><stop offset="0.6047" stop-color="#990640"/><stop offset="0.7442" stop-color="#990024"/><stop offset="1.0000" stop-color="#99000a"/></linearGradient><linearGradient id="s131" gradientUnits="userSpaceOnUse" x1="1173.88" y1="0" x2="1679.24" y2="0"><stop offset="0.0000" stop-color="#005299"/><stop offset="0.2367" stop-color="#044199"/><stop offset="0.3728" stop-color="#603299"/><stop offset="0.4438" stop-color="#992896"/><stop offset="0.5148" stop-color="#991466"/><stop offset="0.6272" stop-color="#99023e"/><stop offset="0.8225" stop-color="#99001c"/><stop offset="1.0000" stop-color="#99000c"/></linearGradient><linearGradient id="s132" gradientUnits="userSpaceOnUse" x1="1174.95" y1="0" x2="1670.55" y2="0"><stop offset="0.0000" stop-color="#004f99"/><stop offset="0.2349" stop-color="#023e99"/><stop offset="0.3735" stop-color="#5d3099"/><stop offset="0.4458" stop-color="#982699"/><stop offset="0.5241" stop-color="#991166"/><stop offset="0.6386" stop-color="#99013e"/><stop offset="0.8434" stop-color="#99001c"/><stop offset="1.0000" stop-color="#99000e"/></linearGradient><linearGradient id="s133" gradientUnits="userSpaceOnUse" x1="1176.04" y1="0" x2="1661.86" y2="0"><stop offset="0.0000" stop-color="#004d99"/><stop offset="0.2346" stop-color="#023c99"/><stop offset="0.3765" stop-color="#5b2d99"/><stop offset="0.4568" stop-color="#992297"/><stop offset="0.5309" stop-color="#990f67"/><stop offset="0.6481" stop-color="#99003f"/><stop offset="0.8519" stop-color="#99001d"/><stop offset="1.0000" stop-color="#99000f"/></linearGradient><linearGradient id="s134" gradientUnits="userSpaceOnUse" x1="1177.15" y1="0" x2="1653.17" y2="0"><stop offset="0.0000" stop-color="#004a99"/><stop offset="0.2327" stop-color="#013999"/><stop offset="0.3836" stop-color="#5d2a99"/><stop offset="0.4654" stop-color="#991e96"/><stop offset="0.5409" stop-color="#990d67"/><stop offset="0.6604" stop-color="#99003f"/><stop offset="0.8742" stop-color="#99001d"/><stop offset="1.0000" stop-color="#990011"/></linearGradient><linearGradient id="s135" gradientUnits="userSpaceOnUse" x1="1178.27" y1="0" x2="1644.48" y2="0"><stop offset="0.0000" stop-color="#004899"/><stop offset="0.2372" stop-color="#033699"/><stop offset="0.3910" stop-color="#5e2799"/><stop offset="0.4679" stop-color="#981d99"/><stop offset="0.5513" stop-color="#990b67"/><stop offset="0.6731" stop-color="#990040"/><stop offset="0.8910" stop-color="#99001d"/><stop offset="1.0000" stop-color="#990013"/></linearGradient><linearGradient id="s136" gradientUnits="userSpaceOnUse" x1="1179.41" y1="0" x2="1635.79" y2="0"><stop offset="0.0000" stop-color="#004599"/><stop offset="0.2353" stop-color="#023499"/><stop offset="0.3922" stop-color="#5c2499"/><stop offset="0.4771" stop-color="#991999"/><stop offset="0.5556" stop-color="#99096a"/><stop offset="0.6667" stop-color="#990045"/><stop offset="0.8758" stop-color="#990021"/><stop offset="1.0000" stop-color="#990015"/></linearGradient><linearGradient id="s137" gradientUnits="userSpaceOnUse" x1="1180.60" y1="0" x2="1627.10" y2="0"><stop offset="0.0000" stop-color="#004399"/><stop offset="0.2349" stop-color="#023299"/><stop offset="0.4027" stop-color="#5f2199"/><stop offset="0.4899" stop-color="#991596"/><stop offset="0.5772" stop-color="#990566"/><stop offset="0.7047" stop-color="#99003f"/><stop offset="0.9396" stop-color="#99001d"/><stop offset="1.0000" stop-color="#990017"/></linearGradient><linearGradient id="s138" gradientUnits="userSpaceOnUse" x1="1181.78" y1="0" x2="1618.41" y2="0"><stop offset="0.0000" stop-color="#004099"/><stop offset="0.2329" stop-color="#013099"/><stop offset="0.4041" stop-color="#5c1f99"/><stop offset="0.4932" stop-color="#981399"/><stop offset="0.5822" stop-color="#990469"/><stop offset="0.7192" stop-color="#990040"/><stop offset="0.9589" stop-color="#99001d"/><stop offset="1.0000" stop-color="#99001a"/></linearGradient><linearGradient id="s139" gradientUnits="userSpaceOnUse" x1="1183.01" y1="0" x2="1609.72" y2="0"><stop offset="0.0000" stop-color="#003e99"/><stop offset="0.2378" stop-color="#032d99"/><stop offset="0.4126" stop-color="#5e1c99"/><stop offset="0.5035" stop-color="#991099"/><stop offset="0.5944" stop-color="#990268"/><stop offset="0.7343" stop-color="#990040"/><stop offset="0.9790" stop-color="#99001e"/><stop offset="1.0000" stop-color="#99001c"/></linearGradient><linearGradient id="s140" gradientUnits="userSpaceOnUse" x1="1184.29" y1="0" x2="1601.03" y2="0"><stop offset="0.0000" stop-color="#003c99"/><stop offset="0.2374" stop-color="#032b99"/><stop offset="0.4173" stop-color="#5d1999"/><stop offset="0.5180" stop-color="#990d96"/><stop offset="0.6115" stop-color="#990067"/><stop offset="0.7626" stop-color="#99003e"/><stop offset="1.0000" stop-color="#99001e"/></linearGradient><linearGradient id="s141" gradientUnits="userSpaceOnUse" x1="1185.56" y1="0" x2="1592.34" y2="0"><stop offset="0.0000" stop-color="#003999"/><stop offset="0.2353" stop-color="#022999"/><stop offset="0.4265" stop-color="#5e1699"/><stop offset="0.5221" stop-color="#990b99"/><stop offset="0.6176" stop-color="#99006a"/><stop offset="0.7721" stop-color="#990040"/><stop offset="1.0000" stop-color="#990021"/></linearGradient><linearGradient id="s142" gradientUnits="userSpaceOnUse" x1="1186.90" y1="0" x2="1583.65" y2="0"><stop offset="0.0000" stop-color="#003799"/><stop offset="0.2331" stop-color="#012799"/><stop offset="0.4286" stop-color="#5c1499"/><stop offset="0.5338" stop-color="#990899"/><stop offset="0.6316" stop-color="#990069"/><stop offset="0.7895" stop-color="#990040"/><stop offset="1.0000" stop-color="#990023"/></linearGradient><linearGradient id="s143" gradientUnits="userSpaceOnUse" x1="1188.24" y1="0" x2="1574.95" y2="0"><stop offset="0.0000" stop-color="#003599"/><stop offset="0.2326" stop-color="#012599"/><stop offset="0.4341" stop-color="#5b1299"/><stop offset="0.5426" stop-color="#980699"/><stop offset="0.6512" stop-color="#990068"/><stop offset="0.8140" stop-color="#99003f"/><stop offset="1.0000" stop-color="#990026"/></linearGradient><linearGradient id="s144" gradientUnits="userSpaceOnUse" x1="1189.61" y1="0" x2="1566.26" y2="0"><stop offset="0.0000" stop-color="#003299"/><stop offset="0.2381" stop-color="#032299"/><stop offset="0.4524" stop-color="#610f99"/><stop offset="0.5556" stop-color="#990399"/><stop offset="0.6587" stop-color="#99006a"/><stop offset="0.8254" stop-color="#990041"/><stop offset="1.0000" stop-color="#990029"/></linearGradient><linearGradient id="s145" gradientUnits="userSpaceOnUse" x1="1191.01" y1="0" x2="1557.57" y2="0"><stop offset="0.0000" stop-color="#003099"/><stop offset="0.2358" stop-color="#032099"/><stop offset="0.4553" stop-color="#5e0d99"/><stop offset="0.5691" stop-color="#990098"/><stop offset="0.6829" stop-color="#990068"/><stop offset="0.8618" stop-color="#99003f"/><stop offset="1.0000" stop-color="#99002c"/></linearGradient><linearGradient id="s146" gradientUnits="userSpaceOnUse" x1="1192.42" y1="0" x2="1548.88" y2="0"><stop offset="0.0000" stop-color="#002e99"/><stop offset="0.2353" stop-color="#031e99"/><stop offset="0.4622" stop-color="#5d0b99"/><stop offset="0.5798" stop-color="#990099"/><stop offset="0.6975" stop-color="#990068"/><stop offset="0.8824" stop-color="#99003f"/><stop offset="1.0000" stop-color="#990030"/></linearGradient><linearGradient id="s147" gradientUnits="userSpaceOnUse" x1="1193.86" y1="0" x2="1540.19" y2="0"><stop offset="0.0000" stop-color="#002c99"/><stop offset="0.2328" stop-color="#021d99"/><stop offset="0.4741" stop-color="#5f0899"/><stop offset="0.5948" stop-color="#990098"/><stop offset="0.7155" stop-color="#990068"/><stop offset="0.9052" stop-color="#990040"/><stop offset="1.0000" stop-color="#990033"/></linearGradient><linearGradient id="s148" gradientUnits="userSpaceOnUse" x1="1195.30" y1="0" x2="1531.50" y2="0"><stop offset="0.0000" stop-color="#002999"/><stop offset="0.2301" stop-color="#011b99"/><stop offset="0.4779" stop-color="#5d0799"/><stop offset="0.6106" stop-color="#990097"/><stop offset="0.7345" stop-color="#990069"/><stop offset="0.9381" stop-color="#99003f"/><stop offset="1.0000" stop-color="#990037"/></linearGradient><linearGradient id="s149" gradientUnits="userSpaceOnUse" x1="1196.75" y1="0" x2="1522.81" y2="0"><stop offset="0.0000" stop-color="#002799"/><stop offset="0.2294" stop-color="#011999"/><stop offset="0.4862" stop-color="#5c0599"/><stop offset="0.6239" stop-color="#990098"/><stop offset="0.7523" stop-color="#990069"/><stop offset="0.9541" stop-color="#990041"/><stop offset="1.0000" stop-color="#99003b"/></linearGradient><linearGradient id="s150" gradientUnits="userSpaceOnUse" x1="1198.20" y1="0" x2="1514.12" y2="0"><stop offset="0.0000" stop-color="#002599"/><stop offset="0.2358" stop-color="#031799"/><stop offset="0.5000" stop-color="#5d0299"/><stop offset="0.6415" stop-color="#990098"/><stop offset="0.7736" stop-color="#990069"/><stop offset="0.9906" stop-color="#990040"/><stop offset="1.0000" stop-color="#99003f"/></linearGradient><linearGradient id="s151" gradientUnits="userSpaceOnUse" x1="1199.68" y1="0" x2="1505.43" y2="0"><stop offset="0.0000" stop-color="#002399"/><stop offset="0.2353" stop-color="#031599"/><stop offset="0.5098" stop-color="#5d0099"/><stop offset="0.6569" stop-color="#990098"/><stop offset="0.7941" stop-color="#99006a"/><stop offset="1.0000" stop-color="#990043"/></linearGradient><linearGradient id="s152" gradientUnits="userSpaceOnUse" x1="1201.16" y1="0" x2="1496.74" y2="0"><stop offset="0.0000" stop-color="#002199"/><stop offset="0.2323" stop-color="#031399"/><stop offset="0.5253" stop-color="#5e0099"/><stop offset="0.6768" stop-color="#990098"/><stop offset="0.8283" stop-color="#990068"/><stop offset="1.0000" stop-color="#990048"/></linearGradient><linearGradient id="s153" gradientUnits="userSpaceOnUse" x1="1202.68" y1="0" x2="1488.05" y2="0"><stop offset="0.0000" stop-color="#001f99"/><stop offset="0.2292" stop-color="#021299"/><stop offset="0.5313" stop-color="#5c0099"/><stop offset="0.6979" stop-color="#990097"/><stop offset="0.8542" stop-color="#990068"/><stop offset="1.0000" stop-color="#99004d"/></linearGradient><linearGradient id="s154" gradientUnits="userSpaceOnUse" x1="1204.22" y1="0" x2="1479.36" y2="0"><stop offset="0.0000" stop-color="#001c99"/><stop offset="0.2283" stop-color="#021099"/><stop offset="0.5326" stop-color="#580099"/><stop offset="0.7174" stop-color="#990098"/><stop offset="0.8804" stop-color="#990068"/><stop offset="1.0000" stop-color="#990052"/></linearGradient><linearGradient id="s155" gradientUnits="userSpaceOnUse" x1="1205.82" y1="0" x2="1470.67" y2="0"><stop offset="0.0000" stop-color="#001a99"/><stop offset="0.2247" stop-color="#020f99"/><stop offset="0.5281" stop-color="#530099"/><stop offset="0.7416" stop-color="#990097"/><stop offset="0.9101" stop-color="#990068"/><stop offset="1.0000" stop-color="#990058"/></linearGradient><linearGradient id="s156" gradientUnits="userSpaceOnUse" x1="1207.44" y1="0" x2="1461.98" y2="0"><stop offset="0.0000" stop-color="#001899"/><stop offset="0.2235" stop-color="#020d99"/><stop offset="0.5176" stop-color="#4c0099"/><stop offset="0.7647" stop-color="#990098"/><stop offset="0.9412" stop-color="#990069"/><stop offset="1.0000" stop-color="#99005e"/></linearGradient><linearGradient id="s157" gradientUnits="userSpaceOnUse" x1="1209.09" y1="0" x2="1453.29" y2="0"><stop offset="0.0000" stop-color="#001699"/><stop offset="0.2317" stop-color="#040b99"/><stop offset="0.5122" stop-color="#470099"/><stop offset="0.7927" stop-color="#990097"/><stop offset="0.9878" stop-color="#990067"/><stop offset="1.0000" stop-color="#990064"/></linearGradient><linearGradient id="s158" gradientUnits="userSpaceOnUse" x1="1210.79" y1="0" x2="1444.60" y2="0"><stop offset="0.0000" stop-color="#001499"/><stop offset="0.2179" stop-color="#010a99"/><stop offset="0.5000" stop-color="#400099"/><stop offset="0.8205" stop-color="#990097"/><stop offset="1.0000" stop-color="#99006c"/></linearGradient><linearGradient id="s159" gradientUnits="userSpaceOnUse" x1="1212.51" y1="0" x2="1435.91" y2="0"><stop offset="0.0000" stop-color="#001299"/><stop offset="0.2267" stop-color="#040899"/><stop offset="0.5067" stop-color="#3f0099"/><stop offset="0.8533" stop-color="#990097"/><stop offset="1.0000" stop-color="#990073"/></linearGradient><linearGradient id="s160" gradientUnits="userSpaceOnUse" x1="1214.26" y1="0" x2="1427.22" y2="0"><stop offset="0.0000" stop-color="#001099"/><stop offset="0.2254" stop-color="#040699"/><stop offset="0.5211" stop-color="#3f0099"/><stop offset="0.8873" stop-color="#990097"/><stop offset="1.0000" stop-color="#99007c"/></linearGradient><linearGradient id="s161" gradientUnits="userSpaceOnUse" x1="1216.07" y1="0" x2="1418.53" y2="0"><stop offset="0.0000" stop-color="#000e99"/><stop offset="0.2206" stop-color="#030599"/><stop offset="0.6029" stop-color="#4d0099"/><stop offset="0.9265" stop-color="#990097"/><stop offset="1.0000" stop-color="#990085"/></linearGradient><linearGradient id="s162" gradientUnits="userSpaceOnUse" x1="1217.96" y1="0" x2="1409.84" y2="0"><stop offset="0.0000" stop-color="#000c99"/><stop offset="0.2187" stop-color="#040399"/><stop offset="0.7187" stop-color="#600099"/><stop offset="0.9688" stop-color="#990097"/><stop offset="1.0000" stop-color="#99008f"/></linearGradient><linearGradient id="s163" gradientUnits="userSpaceOnUse" x1="1219.93" y1="0" x2="1401.15" y2="0"><stop offset="0.0000" stop-color="#000a99"/><stop offset="0.2131" stop-color="#030299"/><stop offset="0.7377" stop-color="#5e0099"/><stop offset="1.0000" stop-color="#970099"/></linearGradient><linearGradient id="s164" gradientUnits="userSpaceOnUse" x1="1221.99" y1="0" x2="1392.46" y2="0"><stop offset="0.0000" stop-color="#000899"/><stop offset="0.2105" stop-color="#040199"/><stop offset="0.7719" stop-color="#5e0099"/><stop offset="1.0000" stop-color="#8c0099"/></linearGradient><linearGradient id="s165" gradientUnits="userSpaceOnUse" x1="1224.13" y1="0" x2="1383.76" y2="0"><stop offset="0.0000" stop-color="#000699"/><stop offset="0.2037" stop-color="#040099"/><stop offset="0.8148" stop-color="#5f0099"/><stop offset="1.0000" stop-color="#810099"/></linearGradient><linearGradient id="s166" gradientUnits="userSpaceOnUse" x1="1226.33" y1="0" x2="1375.07" y2="0"><stop offset="0.0000" stop-color="#000499"/><stop offset="0.2000" stop-color="#040099"/><stop offset="0.8600" stop-color="#600099"/><stop offset="1.0000" stop-color="#770099"/></linearGradient><linearGradient id="s167" gradientUnits="userSpaceOnUse" x1="1228.61" y1="0" x2="1366.38" y2="0"><stop offset="0.0000" stop-color="#000299"/><stop offset="0.1957" stop-color="#040099"/><stop offset="0.9130" stop-color="#600099"/><stop offset="1.0000" stop-color="#6d0099"/></linearGradient><linearGradient id="s168" gradientUnits="userSpaceOnUse" x1="1231.09" y1="0" x2="1357.69" y2="0"><stop offset="0.0000" stop-color="#000099"/><stop offset="0.1860" stop-color="#050099"/><stop offset="0.9767" stop-color="#610099"/><stop offset="1.0000" stop-color="#640099"/></linearGradient><linearGradient id="s169" gradientUnits="userSpaceOnUse" x1="1233.74" y1="0" x2="1349.00" y2="0"><stop offset="0.0000" stop-color="#000099"/><stop offset="0.1795" stop-color="#050099"/><stop offset="1.0000" stop-color="#5b0099"/></linearGradient><linearGradient id="s170" gradientUnits="userSpaceOnUse" x1="1236.55" y1="0" x2="1340.31" y2="0"><stop offset="0.0000" stop-color="#000099"/><stop offset="0.1714" stop-color="#060099"/><stop offset="1.0000" stop-color="#520099"/></linearGradient><linearGradient id="s171" gradientUnits="userSpaceOnUse" x1="1239.66" y1="0" x2="1331.62" y2="0"><stop offset="0.0000" stop-color="#000099"/><stop offset="0.2581" stop-color="#0e0099"/><stop offset="1.0000" stop-color="#4a0099"/></linearGradient><linearGradient id="s172" gradientUnits="userSpaceOnUse" x1="1243.22" y1="0" x2="1322.93" y2="0"><stop offset="0.0000" stop-color="#000099"/><stop offset="1.0000" stop-color="#420099"/></linearGradient><linearGradient id="s173" gradientUnits="userSpaceOnUse" x1="1247.08" y1="0" x2="1314.24" y2="0"><stop offset="0.0000" stop-color="#030099"/><stop offset="1.0000" stop-color="#3b0099"/></linearGradient><linearGradient id="s174" gradientUnits="userSpaceOnUse" x1="1251.35" y1="0" x2="1305.55" y2="0"><stop offset="0.0000" stop-color="#070099"/><stop offset="1.0000" stop-color="#330099"/></linearGradient><linearGradient id="s175" gradientUnits="userSpaceOnUse" x1="1255.95" y1="0" x2="1296.86" y2="0"><stop offset="0.0000" stop-color="#0b0099"/><stop offset="1.0000" stop-color="#2c0099"/></linearGradient><linearGradient id="s176" gradientUnits="userSpaceOnUse" x1="1260.59" y1="0" x2="1288.17" y2="0"><stop offset="0.0000" stop-color="#100099"/><stop offset="1.0000" stop-color="#260099"/></linearGradient><linearGradient id="s177" gradientUnits="userSpaceOnUse" x1="1265.12" y1="0" x2="1279.48" y2="0"><stop offset="0.0000" stop-color="#140099"/><stop offset="1.0000" stop-color="#1f0099"/></linearGradient><linearGradient id="t0" gradientUnits="userSpaceOnUse" x1="1376.88" y1="0" x2="1389.07" y2="0"><stop offset="0.0000" stop-color="#00ff02"/><stop offset="1.0000" stop-color="#0cff00"/></linearGradient><linearGradient id="t1" gradientUnits="userSpaceOnUse" x1="1375.76" y1="0" x2="1394.15" y2="0"><stop offset="0.0000" stop-color="#00ff05"/><stop offset="1.0000" stop-color="#14ff00"/></linearGradient><linearGradient id="t2" gradientUnits="userSpaceOnUse" x1="1374.64" y1="0" x2="1399.23" y2="0"><stop offset="0.0000" stop-color="#00ff07"/><stop offset="0.6667" stop-color="#12ff01"/><stop offset="1.0000" stop-color="#1dff00"/></linearGradient><linearGradient id="t3" gradientUnits="userSpaceOnUse" x1="1373.52" y1="0" x2="1404.31" y2="0"><stop offset="0.0000" stop-color="#00ff09"/><stop offset="0.5455" stop-color="#12ff03"/><stop offset="1.0000" stop-color="#27ff00"/></linearGradient><linearGradient id="t4" gradientUnits="userSpaceOnUse" x1="1372.40" y1="0" x2="1409.39" y2="0"><stop offset="0.0000" stop-color="#00ff0c"/><stop offset="0.4615" stop-color="#13ff05"/><stop offset="1.0000" stop-color="#30ff00"/></linearGradient><linearGradient id="t5" gradientUnits="userSpaceOnUse" x1="1371.28" y1="0" x2="1414.48" y2="0"><stop offset="0.0000" stop-color="#00ff0e"/><stop offset="0.4000" stop-color="#13ff08"/><stop offset="1.0000" stop-color="#3aff00"/></linearGradient><linearGradient id="t6" gradientUnits="userSpaceOnUse" x1="1370.16" y1="0" x2="1419.56" y2="0"><stop offset="0.0000" stop-color="#00ff10"/><stop offset="0.3529" stop-color="#14ff0a"/><stop offset="1.0000" stop-color="#45ff00"/></linearGradient><linearGradient id="t7" gradientUnits="userSpaceOnUse" x1="1369.04" y1="0" x2="1424.64" y2="0"><stop offset="0.0000" stop-color="#00ff13"/><stop offset="0.3158" stop-color="#14ff0d"/><stop offset="1.0000" stop-color="#50ff00"/></linearGradient><linearGradient id="t8" gradientUnits="userSpaceOnUse" x1="1367.91" y1="0" x2="1429.72" y2="0"><stop offset="0.0000" stop-color="#00ff15"/><stop offset="0.2381" stop-color="#10ff10"/><stop offset="1.0000" stop-color="#5bff00"/></linearGradient><linearGradient id="t9" gradientUnits="userSpaceOnUse" x1="1366.79" y1="0" x2="1434.80" y2="0"><stop offset="0.0000" stop-color="#00ff18"/><stop offset="0.2174" stop-color="#10ff13"/><stop offset="1.0000" stop-color="#67ff00"/></linearGradient><linearGradient id="t10" gradientUnits="userSpaceOnUse" x1="1365.67" y1="0" x2="1439.88" y2="0"><stop offset="0.0000" stop-color="#00ff1b"/><stop offset="0.2000" stop-color="#11ff15"/><stop offset="1.0000" stop-color="#73ff00"/></linearGradient><linearGradient id="t11" gradientUnits="userSpaceOnUse" x1="1364.55" y1="0" x2="1444.96" y2="0"><stop offset="0.0000" stop-color="#00ff1d"/><stop offset="0.1852" stop-color="#11ff18"/><stop offset="1.0000" stop-color="#80ff00"/></linearGradient><linearGradient id="t12" gradientUnits="userSpaceOnUse" x1="1363.43" y1="0" x2="1450.04" y2="0"><stop offset="0.0000" stop-color="#00ff20"/><stop offset="0.1724" stop-color="#11ff1b"/><stop offset="0.9655" stop-color="#88ff00"/><stop offset="1.0000" stop-color="#8eff00"/></linearGradient><linearGradient id="t13" gradientUnits="userSpaceOnUse" x1="1362.31" y1="0" x2="1455.13" y2="0"><stop offset="0.0000" stop-color="#00ff23"/><stop offset="0.1613" stop-color="#11ff1e"/><stop offset="0.8710" stop-color="#84ff03"/><stop offset="1.0000" stop-color="#9cff00"/></linearGradient><linearGradient id="t14" gradientUnits="userSpaceOnUse" x1="1361.19" y1="0" x2="1460.21" y2="0"><stop offset="0.0000" stop-color="#00ff26"/><stop offset="0.1471" stop-color="#11ff21"/><stop offset="0.8235" stop-color="#87ff06"/><stop offset="1.0000" stop-color="#aaff00"/></linearGradient><linearGradient id="t15" gradientUnits="userSpaceOnUse" x1="1360.07" y1="0" x2="1465.29" y2="0"><stop offset="0.0000" stop-color="#00ff29"/><stop offset="0.1389" stop-color="#11ff23"/><stop offset="0.7500" stop-color="#83ff0a"/><stop offset="1.0000" stop-color="#baff00"/></linearGradient><linearGradient id="t16" gradientUnits="userSpaceOnUse" x1="1358.95" y1="0" x2="1470.37" y2="0"><stop offset="0.0000" stop-color="#00ff2b"/><stop offset="0.1316" stop-color="#11ff26"/><stop offset="0.7105" stop-color="#85ff0d"/><stop offset="1.0000" stop-color="#caff00"/></linearGradient><linearGradient id="t17" gradientUnits="userSpaceOnUse" x1="1357.83" y1="0" x2="1475.45" y2="0"><stop offset="0.0000" stop-color="#00ff2e"/><stop offset="0.1000" stop-color="#0dff2a"/><stop offset="0.6500" stop-color="#81ff11"/><stop offset="1.0000" stop-color="#dbff00"/></linearGradient><linearGradient id="t18" gradientUnits="userSpaceOnUse" x1="1356.71" y1="0" x2="1480.53" y2="0"><stop offset="0.0000" stop-color="#00ff32"/><stop offset="0.0952" stop-color="#0dff2e"/><stop offset="0.6190" stop-color="#83ff14"/><stop offset="1.0000" stop-color="#edff00"/></linearGradient><linearGradient id="t19" gradientUnits="userSpaceOnUse" x1="1355.59" y1="0" x2="1485.61" y2="0"><stop offset="0.0000" stop-color="#00ff35"/><stop offset="0.0909" stop-color="#0dff31"/><stop offset="0.5682" stop-color="#7fff18"/><stop offset="1.0000" stop-color="#fffe00"/></linearGradient><linearGradient id="t20" gradientUnits="userSpaceOnUse" x1="1354.46" y1="0" x2="1490.70" y2="0"><stop offset="0.0000" stop-color="#00ff38"/><stop offset="0.0870" stop-color="#0eff34"/><stop offset="0.5435" stop-color="#81ff1c"/><stop offset="0.9348" stop-color="#fcff02"/><stop offset="1.0000" stop-color="#ffec00"/></linearGradient><linearGradient id="t21" gradientUnits="userSpaceOnUse" x1="1353.34" y1="0" x2="1495.78" y2="0"><stop offset="0.0000" stop-color="#00ff3b"/><stop offset="0.0833" stop-color="#0eff37"/><stop offset="0.5208" stop-color="#83ff1f"/><stop offset="0.8958" stop-color="#fffe05"/><stop offset="1.0000" stop-color="#ffdb00"/></linearGradient><linearGradient id="t22" gradientUnits="userSpaceOnUse" x1="1352.22" y1="0" x2="1500.86" y2="0"><stop offset="0.0000" stop-color="#00ff3f"/><stop offset="0.0800" stop-color="#0eff3b"/><stop offset="0.5000" stop-color="#85ff23"/><stop offset="0.8400" stop-color="#fdff0a"/><stop offset="1.0000" stop-color="#ffcc00"/></linearGradient><linearGradient id="t23" gradientUnits="userSpaceOnUse" x1="1351.10" y1="0" x2="1505.94" y2="0"><stop offset="0.0000" stop-color="#00ff42"/><stop offset="0.0577" stop-color="#09ff3f"/><stop offset="0.4423" stop-color="#7aff29"/><stop offset="0.7692" stop-color="#f1ff11"/><stop offset="0.8077" stop-color="#fffd0e"/><stop offset="0.9808" stop-color="#ffc300"/><stop offset="1.0000" stop-color="#ffbe00"/></linearGradient><linearGradient id="t24" gradientUnits="userSpaceOnUse" x1="1349.98" y1="0" x2="1511.02" y2="0"><stop offset="0.0000" stop-color="#00ff45"/><stop offset="0.0556" stop-color="#09ff43"/><stop offset="0.4259" stop-color="#7bff2c"/><stop offset="0.7407" stop-color="#f5ff15"/><stop offset="0.7778" stop-color="#fff911"/><stop offset="0.9630" stop-color="#ffbb00"/><stop offset="1.0000" stop-color="#ffb100"/></linearGradient><linearGradient id="t25" gradientUnits="userSpaceOnUse" x1="1348.86" y1="0" x2="1516.10" y2="0"><stop offset="0.0000" stop-color="#00ff49"/><stop offset="0.0536" stop-color="#09ff46"/><stop offset="0.4107" stop-color="#7dff30"/><stop offset="0.7321" stop-color="#fffd17"/><stop offset="0.8929" stop-color="#ffc206"/><stop offset="1.0000" stop-color="#ffa500"/></linearGradient><linearGradient id="t26" gradientUnits="userSpaceOnUse" x1="1347.74" y1="0" x2="1521.18" y2="0"><stop offset="0.0000" stop-color="#00ff4d"/><stop offset="0.0517" stop-color="#09ff4a"/><stop offset="0.3966" stop-color="#7fff34"/><stop offset="0.6897" stop-color="#fdff1c"/><stop offset="0.8793" stop-color="#ffb907"/><stop offset="1.0000" stop-color="#ff9a00"/></linearGradient><linearGradient id="t27" gradientUnits="userSpaceOnUse" x1="1346.62" y1="0" x2="1526.27" y2="0"><stop offset="0.0000" stop-color="#00ff50"/><stop offset="0.0500" stop-color="#0aff4e"/><stop offset="0.3667" stop-color="#7aff39"/><stop offset="0.6333" stop-color="#f0ff23"/><stop offset="0.6667" stop-color="#fffd20"/><stop offset="0.8167" stop-color="#ffc10d"/><stop offset="1.0000" stop-color="#ff9000"/></linearGradient><linearGradient id="t28" gradientUnits="userSpaceOnUse" x1="1345.50" y1="0" x2="1531.35" y2="0"><stop offset="0.0000" stop-color="#00ff54"/><stop offset="0.0484" stop-color="#0aff51"/><stop offset="0.3548" stop-color="#7cff3d"/><stop offset="0.6129" stop-color="#f4ff27"/><stop offset="0.6452" stop-color="#fff923"/><stop offset="0.7903" stop-color="#ffbd10"/><stop offset="1.0000" stop-color="#ff8600"/></linearGradient><linearGradient id="t29" gradientUnits="userSpaceOnUse" x1="1344.38" y1="0" x2="1536.43" y2="0"><stop offset="0.0000" stop-color="#00ff58"/><stop offset="0.0462" stop-color="#0aff55"/><stop offset="0.3385" stop-color="#7bff41"/><stop offset="0.5846" stop-color="#f3ff2c"/><stop offset="0.6154" stop-color="#fffa29"/><stop offset="0.7538" stop-color="#ffbe14"/><stop offset="0.9538" stop-color="#ff8701"/><stop offset="1.0000" stop-color="#ff7d00"/></linearGradient><linearGradient id="t30" gradientUnits="userSpaceOnUse" x1="1343.26" y1="0" x2="1541.51" y2="0"><stop offset="0.0000" stop-color="#00ff5c"/><stop offset="0.0448" stop-color="#0aff59"/><stop offset="0.3284" stop-color="#7dff46"/><stop offset="0.5821" stop-color="#fffe2f"/><stop offset="0.7164" stop-color="#ffc019"/><stop offset="0.9104" stop-color="#ff8705"/><stop offset="1.0000" stop-color="#ff7500"/></linearGradient><linearGradient id="t31" gradientUnits="userSpaceOnUse" x1="1342.13" y1="0" x2="1546.59" y2="0"><stop offset="0.0000" stop-color="#00ff60"/><stop offset="0.0435" stop-color="#0aff5e"/><stop offset="0.3188" stop-color="#7fff4a"/><stop offset="0.5507" stop-color="#fbff35"/><stop offset="0.7101" stop-color="#ffb71a"/><stop offset="0.8986" stop-color="#ff8106"/><stop offset="1.0000" stop-color="#ff6d00"/></linearGradient><linearGradient id="t32" gradientUnits="userSpaceOnUse" x1="1341.01" y1="0" x2="1551.67" y2="0"><stop offset="0.0000" stop-color="#00ff64"/><stop offset="0.0423" stop-color="#0aff62"/><stop offset="0.2958" stop-color="#7aff50"/><stop offset="0.5211" stop-color="#f7ff3b"/><stop offset="0.5352" stop-color="#fffe3a"/><stop offset="0.6620" stop-color="#ffbf21"/><stop offset="0.8310" stop-color="#ff890c"/><stop offset="1.0000" stop-color="#ff6600"/></linearGradient><linearGradient id="t33" gradientUnits="userSpaceOnUse" x1="1339.89" y1="0" x2="1556.75" y2="0"><stop offset="0.0000" stop-color="#00ff69"/><stop offset="0.0411" stop-color="#0aff66"/><stop offset="0.2877" stop-color="#7cff54"/><stop offset="0.4932" stop-color="#f2ff41"/><stop offset="0.5205" stop-color="#fffa3e"/><stop offset="0.6438" stop-color="#ffbb24"/><stop offset="0.8082" stop-color="#ff860e"/><stop offset="1.0000" stop-color="#ff5f00"/></linearGradient><linearGradient id="t34" gradientUnits="userSpaceOnUse" x1="1338.77" y1="0" x2="1561.83" y2="0"><stop offset="0.0000" stop-color="#00ff6d"/><stop offset="0.0400" stop-color="#0aff6b"/><stop offset="0.2800" stop-color="#7eff59"/><stop offset="0.4800" stop-color="#f6ff46"/><stop offset="0.4933" stop-color="#ffff45"/><stop offset="0.6000" stop-color="#ffc42c"/><stop offset="0.7600" stop-color="#ff8b14"/><stop offset="0.9867" stop-color="#ff5a00"/><stop offset="1.0000" stop-color="#ff5800"/></linearGradient><linearGradient id="t35" gradientUnits="userSpaceOnUse" x1="1337.65" y1="0" x2="1566.92" y2="0"><stop offset="0.0000" stop-color="#00ff72"/><stop offset="0.0390" stop-color="#0aff6f"/><stop offset="0.2727" stop-color="#80ff5e"/><stop offset="0.4675" stop-color="#fbff4b"/><stop offset="0.5325" stop-color="#ffda3b"/><stop offset="0.6623" stop-color="#ffa121"/><stop offset="0.8571" stop-color="#ff6b0a"/><stop offset="1.0000" stop-color="#ff5200"/></linearGradient><linearGradient id="t36" gradientUnits="userSpaceOnUse" x1="1336.53" y1="0" x2="1572.00" y2="0"><stop offset="0.0000" stop-color="#00ff76"/><stop offset="0.0253" stop-color="#05ff75"/><stop offset="0.2532" stop-color="#7bff64"/><stop offset="0.4430" stop-color="#f6ff52"/><stop offset="0.4557" stop-color="#ffff51"/><stop offset="0.5570" stop-color="#ffc235"/><stop offset="0.6962" stop-color="#ff8d1c"/><stop offset="0.9114" stop-color="#ff5a05"/><stop offset="1.0000" stop-color="#ff4c00"/></linearGradient><linearGradient id="t37" gradientUnits="userSpaceOnUse" x1="1335.41" y1="0" x2="1577.08" y2="0"><stop offset="0.0000" stop-color="#00ff7b"/><stop offset="0.0247" stop-color="#05ff79"/><stop offset="0.2346" stop-color="#75ff6a"/><stop offset="0.4198" stop-color="#f1ff59"/><stop offset="0.4444" stop-color="#fffb55"/><stop offset="0.5432" stop-color="#ffbf38"/><stop offset="0.6914" stop-color="#ff861d"/><stop offset="0.9012" stop-color="#ff5606"/><stop offset="1.0000" stop-color="#ff4600"/></linearGradient><linearGradient id="t38" gradientUnits="userSpaceOnUse" x1="1334.29" y1="0" x2="1582.16" y2="0"><stop offset="0.0000" stop-color="#00ff80"/><stop offset="0.0241" stop-color="#05ff7e"/><stop offset="0.2289" stop-color="#77ff6f"/><stop offset="0.3976" stop-color="#ecff60"/><stop offset="0.4217" stop-color="#ffff5d"/><stop offset="0.5181" stop-color="#ffc13e"/><stop offset="0.6506" stop-color="#ff8b23"/><stop offset="0.8434" stop-color="#ff5a0b"/><stop offset="1.0000" stop-color="#ff4100"/></linearGradient><linearGradient id="t39" gradientUnits="userSpaceOnUse" x1="1333.17" y1="0" x2="1587.24" y2="0"><stop offset="0.0000" stop-color="#00ff85"/><stop offset="0.0235" stop-color="#05ff83"/><stop offset="0.2235" stop-color="#79ff75"/><stop offset="0.3882" stop-color="#f0ff65"/><stop offset="0.4118" stop-color="#fffb61"/><stop offset="0.5059" stop-color="#ffbe42"/><stop offset="0.6353" stop-color="#ff8826"/><stop offset="0.8353" stop-color="#ff560c"/><stop offset="1.0000" stop-color="#ff3c00"/></linearGradient><linearGradient id="t40" gradientUnits="userSpaceOnUse" x1="1332.05" y1="0" x2="1592.32" y2="0"><stop offset="0.0000" stop-color="#00ff8a"/><stop offset="0.0230" stop-color="#05ff89"/><stop offset="0.2184" stop-color="#7bff7a"/><stop offset="0.3793" stop-color="#f4ff6b"/><stop offset="0.3908" stop-color="#feff6a"/><stop offset="0.4828" stop-color="#ffc048"/><stop offset="0.6092" stop-color="#ff892a"/><stop offset="0.7931" stop-color="#ff5810"/><stop offset="1.0000" stop-color="#ff3700"/></linearGradient><linearGradient id="t41" gradientUnits="userSpaceOnUse" x1="1330.93" y1="0" x2="1597.40" y2="0"><stop offset="0.0000" stop-color="#00ff8f"/><stop offset="0.0225" stop-color="#05ff8e"/><stop offset="0.2022" stop-color="#75ff81"/><stop offset="0.3596" stop-color="#efff73"/><stop offset="0.3820" stop-color="#fffb6f"/><stop offset="0.4719" stop-color="#ffbd4c"/><stop offset="0.5955" stop-color="#ff862d"/><stop offset="0.7753" stop-color="#ff5612"/><stop offset="1.0000" stop-color="#ff3300"/></linearGradient><linearGradient id="t42" gradientUnits="userSpaceOnUse" x1="1329.80" y1="0" x2="1602.49" y2="0"><stop offset="0.0000" stop-color="#00ff95"/><stop offset="0.0220" stop-color="#05ff93"/><stop offset="0.1978" stop-color="#77ff87"/><stop offset="0.3516" stop-color="#f3ff79"/><stop offset="0.3626" stop-color="#fdff78"/><stop offset="0.4505" stop-color="#ffbf53"/><stop offset="0.5714" stop-color="#ff8732"/><stop offset="0.7473" stop-color="#ff5616"/><stop offset="1.0000" stop-color="#ff2e00"/></linearGradient><linearGradient id="t43" gradientUnits="userSpaceOnUse" x1="1328.68" y1="0" x2="1607.57" y2="0"><stop offset="0.0000" stop-color="#00ff9a"/><stop offset="0.0215" stop-color="#05ff99"/><stop offset="0.1935" stop-color="#79ff8d"/><stop offset="0.3333" stop-color="#eeff81"/><stop offset="0.3548" stop-color="#fffc7d"/><stop offset="0.4301" stop-color="#ffc25a"/><stop offset="0.5376" stop-color="#ff8c3a"/><stop offset="0.6989" stop-color="#ff5b1c"/><stop offset="0.9570" stop-color="#ff2f02"/><stop offset="1.0000" stop-color="#ff2a00"/></linearGradient><linearGradient id="t44" gradientUnits="userSpaceOnUse" x1="1327.56" y1="0" x2="1612.65" y2="0"><stop offset="0.0000" stop-color="#00ffa0"/><stop offset="0.0208" stop-color="#05ff9f"/><stop offset="0.1875" stop-color="#79ff93"/><stop offset="0.3229" stop-color="#efff88"/><stop offset="0.3437" stop-color="#fffb83"/><stop offset="0.4167" stop-color="#ffc15f"/><stop offset="0.5208" stop-color="#ff8b3e"/><stop offset="0.6771" stop-color="#ff5a1f"/><stop offset="0.9271" stop-color="#ff2f04"/><stop offset="1.0000" stop-color="#ff2600"/></linearGradient><linearGradient id="t45" gradientUnits="userSpaceOnUse" x1="1326.44" y1="0" x2="1617.73" y2="0"><stop offset="0.0000" stop-color="#00ffa6"/><stop offset="0.0204" stop-color="#05ffa5"/><stop offset="0.1837" stop-color="#7bff9a"/><stop offset="0.3163" stop-color="#f4ff8f"/><stop offset="0.3265" stop-color="#feff8e"/><stop offset="0.4082" stop-color="#ffbd63"/><stop offset="0.5102" stop-color="#ff8841"/><stop offset="0.6633" stop-color="#ff5821"/><stop offset="0.9082" stop-color="#ff2d06"/><stop offset="1.0000" stop-color="#ff2300"/></linearGradient><linearGradient id="t46" gradientUnits="userSpaceOnUse" x1="1325.32" y1="0" x2="1622.81" y2="0"><stop offset="0.0000" stop-color="#00ffac"/><stop offset="0.0200" stop-color="#05ffab"/><stop offset="0.1700" stop-color="#75ffa1"/><stop offset="0.3000" stop-color="#eeff97"/><stop offset="0.3200" stop-color="#fffb93"/><stop offset="0.3900" stop-color="#ffc06b"/><stop offset="0.4900" stop-color="#ff8946"/><stop offset="0.6400" stop-color="#ff5825"/><stop offset="0.8700" stop-color="#ff2e09"/><stop offset="1.0000" stop-color="#ff1f00"/></linearGradient><linearGradient id="t47" gradientUnits="userSpaceOnUse" x1="1324.20" y1="0" x2="1627.89" y2="0"><stop offset="0.0000" stop-color="#00ffb2"/><stop offset="0.0196" stop-color="#05ffb1"/><stop offset="0.1667" stop-color="#77ffa8"/><stop offset="0.2941" stop-color="#f3ff9e"/><stop offset="0.3039" stop-color="#fdff9d"/><stop offset="0.3824" stop-color="#ffbc6e"/><stop offset="0.4804" stop-color="#ff8649"/><stop offset="0.6275" stop-color="#ff5627"/><stop offset="0.8627" stop-color="#ff2b0a"/><stop offset="1.0000" stop-color="#ff1b00"/></linearGradient><linearGradient id="t48" gradientUnits="userSpaceOnUse" x1="1323.08" y1="0" x2="1632.97" y2="0"><stop offset="0.0000" stop-color="#00ffb9"/><stop offset="0.0192" stop-color="#06ffb8"/><stop offset="0.1635" stop-color="#79ffaf"/><stop offset="0.2788" stop-color="#edffa7"/><stop offset="0.2981" stop-color="#fffca3"/><stop offset="0.3654" stop-color="#ffbf77"/><stop offset="0.4615" stop-color="#ff874f"/><stop offset="0.6058" stop-color="#ff562b"/><stop offset="0.8269" stop-color="#ff2c0d"/><stop offset="1.0000" stop-color="#ff1800"/></linearGradient><linearGradient id="t49" gradientUnits="userSpaceOnUse" x1="1321.96" y1="0" x2="1638.05" y2="0"><stop offset="0.0000" stop-color="#00ffbf"/><stop offset="0.0189" stop-color="#06ffbe"/><stop offset="0.1604" stop-color="#7cffb7"/><stop offset="0.2736" stop-color="#f1ffaf"/><stop offset="0.2830" stop-color="#fcffae"/><stop offset="0.3585" stop-color="#ffbb7b"/><stop offset="0.4528" stop-color="#ff8452"/><stop offset="0.5943" stop-color="#ff532d"/><stop offset="0.8208" stop-color="#ff290e"/><stop offset="1.0000" stop-color="#ff1500"/></linearGradient><linearGradient id="t50" gradientUnits="userSpaceOnUse" x1="1320.84" y1="0" x2="1643.14" y2="0"><stop offset="0.0000" stop-color="#00ffc6"/><stop offset="0.0185" stop-color="#06ffc5"/><stop offset="0.1481" stop-color="#75ffbf"/><stop offset="0.2593" stop-color="#ebffb8"/><stop offset="0.2778" stop-color="#fffcb5"/><stop offset="0.3426" stop-color="#ffbe84"/><stop offset="0.4352" stop-color="#ff8558"/><stop offset="0.5648" stop-color="#ff5634"/><stop offset="0.7778" stop-color="#ff2b12"/><stop offset="1.0000" stop-color="#ff1200"/></linearGradient><linearGradient id="t51" gradientUnits="userSpaceOnUse" x1="1319.72" y1="0" x2="1648.22" y2="0"><stop offset="0.0000" stop-color="#00ffcd"/><stop offset="0.0182" stop-color="#06ffcc"/><stop offset="0.1455" stop-color="#77ffc7"/><stop offset="0.2545" stop-color="#f0ffc0"/><stop offset="0.2636" stop-color="#fcffc0"/><stop offset="0.3364" stop-color="#ffb988"/><stop offset="0.4273" stop-color="#ff825b"/><stop offset="0.5636" stop-color="#ff5134"/><stop offset="0.7727" stop-color="#ff2813"/><stop offset="1.0000" stop-color="#ff0f00"/></linearGradient><linearGradient id="t52" gradientUnits="userSpaceOnUse" x1="1318.60" y1="0" x2="1653.30" y2="0"><stop offset="0.0000" stop-color="#00ffd4"/><stop offset="0.0179" stop-color="#06ffd4"/><stop offset="0.1429" stop-color="#79ffcf"/><stop offset="0.2589" stop-color="#fffdc7"/><stop offset="0.3125" stop-color="#ffc498"/><stop offset="0.3929" stop-color="#ff8c6a"/><stop offset="0.5089" stop-color="#ff5c41"/><stop offset="0.6964" stop-color="#ff301d"/><stop offset="1.0000" stop-color="#ff0c00"/></linearGradient><linearGradient id="t53" gradientUnits="userSpaceOnUse" x1="1317.47" y1="0" x2="1658.38" y2="0"><stop offset="0.0000" stop-color="#00ffdc"/><stop offset="0.0175" stop-color="#06ffdb"/><stop offset="0.1404" stop-color="#7cffd7"/><stop offset="0.2368" stop-color="#efffd3"/><stop offset="0.2456" stop-color="#fbffd3"/><stop offset="0.2807" stop-color="#ffd9b2"/><stop offset="0.3509" stop-color="#ff9e7f"/><stop offset="0.4474" stop-color="#ff6c54"/><stop offset="0.5965" stop-color="#ff3f2d"/><stop offset="0.8421" stop-color="#ff180c"/><stop offset="1.0000" stop-color="#ff0900"/></linearGradient><linearGradient id="t54" gradientUnits="userSpaceOnUse" x1="1316.35" y1="0" x2="1663.46" y2="0"><stop offset="0.0000" stop-color="#00ffe3"/><stop offset="0.0172" stop-color="#06ffe3"/><stop offset="0.1293" stop-color="#75ffe0"/><stop offset="0.2241" stop-color="#e8ffdd"/><stop offset="0.2414" stop-color="#fffedb"/><stop offset="0.2931" stop-color="#ffc3a7"/><stop offset="0.3707" stop-color="#ff8a74"/><stop offset="0.4828" stop-color="#ff5948"/><stop offset="0.6552" stop-color="#ff2f23"/><stop offset="0.9483" stop-color="#ff0b03"/><stop offset="1.0000" stop-color="#ff0700"/></linearGradient><linearGradient id="t55" gradientUnits="userSpaceOnUse" x1="1315.23" y1="0" x2="1668.54" y2="0"><stop offset="0.0000" stop-color="#00ffeb"/><stop offset="0.0169" stop-color="#06ffeb"/><stop offset="0.1271" stop-color="#77ffe9"/><stop offset="0.2203" stop-color="#edffe7"/><stop offset="0.2373" stop-color="#fff8e1"/><stop offset="0.2881" stop-color="#ffbeab"/><stop offset="0.3644" stop-color="#ff8777"/><stop offset="0.4746" stop-color="#ff564b"/><stop offset="0.6525" stop-color="#ff2b23"/><stop offset="0.9576" stop-color="#ff0702"/><stop offset="1.0000" stop-color="#ff0400"/></linearGradient><linearGradient id="t56" gradientUnits="userSpaceOnUse" x1="1314.11" y1="0" x2="1673.62" y2="0"><stop offset="0.0000" stop-color="#00fff4"/><stop offset="0.0167" stop-color="#06fff4"/><stop offset="0.1250" stop-color="#79fff2"/><stop offset="0.2167" stop-color="#f3fff1"/><stop offset="0.2250" stop-color="#fffff1"/><stop offset="0.2750" stop-color="#ffc2b7"/><stop offset="0.3417" stop-color="#ff8d84"/><stop offset="0.4417" stop-color="#ff5c56"/><stop offset="0.6000" stop-color="#ff312d"/><stop offset="0.8667" stop-color="#ff0c09"/><stop offset="1.0000" stop-color="#ff0100"/></linearGradient><linearGradient id="t57" gradientUnits="userSpaceOnUse" x1="1312.99" y1="0" x2="1676.18" y2="0"><stop offset="0.0000" stop-color="#00fffc"/><stop offset="0.0164" stop-color="#06fffc"/><stop offset="0.1230" stop-color="#7bfffc"/><stop offset="0.2213" stop-color="#fffcf9"/><stop offset="0.2705" stop-color="#ffbfbd"/><stop offset="0.3361" stop-color="#ff8b89"/><stop offset="0.4344" stop-color="#ff5b5a"/><stop offset="0.5902" stop-color="#ff302f"/><stop offset="0.8525" stop-color="#ff0c0b"/><stop offset="1.0000" stop-color="#ff0000"/></linearGradient><linearGradient id="t58" gradientUnits="userSpaceOnUse" x1="1311.87" y1="0" x2="1673.04" y2="0"><stop offset="0.0000" stop-color="#00f9ff"/><stop offset="0.0165" stop-color="#06f9ff"/><stop offset="0.1240" stop-color="#7af8ff"/><stop offset="0.2231" stop-color="#fff5fd"/><stop offset="0.2727" stop-color="#ffbac1"/><stop offset="0.3388" stop-color="#ff878c"/><stop offset="0.4380" stop-color="#ff585c"/><stop offset="0.5950" stop-color="#ff2e31"/><stop offset="0.8595" stop-color="#ff0a0c"/><stop offset="1.0000" stop-color="#ff0001"/></linearGradient><linearGradient id="t59" gradientUnits="userSpaceOnUse" x1="1310.75" y1="0" x2="1665.72" y2="0"><stop offset="0.0000" stop-color="#00f1ff"/><stop offset="0.0168" stop-color="#06f0ff"/><stop offset="0.1261" stop-color="#78eeff"/><stop offset="0.2185" stop-color="#efecff"/><stop offset="0.2269" stop-color="#fbecff"/><stop offset="0.2857" stop-color="#ffaebd"/><stop offset="0.3613" stop-color="#ff7a86"/><stop offset="0.4706" stop-color="#ff4c56"/><stop offset="0.6471" stop-color="#ff242b"/><stop offset="0.9496" stop-color="#ff0207"/><stop offset="1.0000" stop-color="#ff0003"/></linearGradient><linearGradient id="t60" gradientUnits="userSpaceOnUse" x1="1309.63" y1="0" x2="1658.39" y2="0"><stop offset="0.0000" stop-color="#00e8ff"/><stop offset="0.0171" stop-color="#06e8ff"/><stop offset="0.1282" stop-color="#75e5ff"/><stop offset="0.2222" stop-color="#eae2ff"/><stop offset="0.2393" stop-color="#ffdffc"/><stop offset="0.2906" stop-color="#ffaac2"/><stop offset="0.3675" stop-color="#ff7689"/><stop offset="0.4786" stop-color="#ff4a59"/><stop offset="0.6496" stop-color="#ff242f"/><stop offset="0.9402" stop-color="#ff030b"/><stop offset="1.0000" stop-color="#ff0006"/></linearGradient><linearGradient id="t61" gradientUnits="userSpaceOnUse" x1="1308.51" y1="0" x2="1651.07" y2="0"><stop offset="0.0000" stop-color="#00e1ff"/><stop offset="0.0174" stop-color="#06e0ff"/><stop offset="0.1391" stop-color="#7cdcff"/><stop offset="0.2348" stop-color="#f0d8ff"/><stop offset="0.2435" stop-color="#fcd8ff"/><stop offset="0.3130" stop-color="#ff98b7"/><stop offset="0.3913" stop-color="#ff6b83"/><stop offset="0.5130" stop-color="#ff4053"/><stop offset="0.7043" stop-color="#ff1b29"/><stop offset="1.0000" stop-color="#ff0009"/></linearGradient><linearGradient id="t62" gradientUnits="userSpaceOnUse" x1="1307.39" y1="0" x2="1643.75" y2="0"><stop offset="0.0000" stop-color="#00d9ff"/><stop offset="0.0177" stop-color="#06d8ff"/><stop offset="0.1416" stop-color="#7ad3ff"/><stop offset="0.2566" stop-color="#ffcbfc"/><stop offset="0.3097" stop-color="#ff9bc3"/><stop offset="0.3894" stop-color="#ff6c8b"/><stop offset="0.5044" stop-color="#ff425b"/><stop offset="0.6903" stop-color="#ff1d30"/><stop offset="0.9912" stop-color="#ff000c"/><stop offset="1.0000" stop-color="#ff000b"/></linearGradient><linearGradient id="t63" gradientUnits="userSpaceOnUse" x1="1306.27" y1="0" x2="1636.42" y2="0"><stop offset="0.0000" stop-color="#00d2ff"/><stop offset="0.0180" stop-color="#06d1ff"/><stop offset="0.1441" stop-color="#78cbff"/><stop offset="0.2523" stop-color="#f2c5ff"/><stop offset="0.2613" stop-color="#fdc4ff"/><stop offset="0.3243" stop-color="#ff90c0"/><stop offset="0.4054" stop-color="#ff648a"/><stop offset="0.5315" stop-color="#ff3b58"/><stop offset="0.7297" stop-color="#ff182d"/><stop offset="1.0000" stop-color="#ff000e"/></linearGradient><linearGradient id="t64" gradientUnits="userSpaceOnUse" x1="1305.15" y1="0" x2="1629.10" y2="0"><stop offset="0.0000" stop-color="#00caff"/><stop offset="0.0185" stop-color="#06caff"/><stop offset="0.1481" stop-color="#77c3ff"/><stop offset="0.2593" stop-color="#f0bcff"/><stop offset="0.2685" stop-color="#fbbbff"/><stop offset="0.3241" stop-color="#ff90c9"/><stop offset="0.4074" stop-color="#ff6490"/><stop offset="0.5278" stop-color="#ff3c5f"/><stop offset="0.7130" stop-color="#ff1a34"/><stop offset="1.0000" stop-color="#ff0011"/></linearGradient><linearGradient id="t65" gradientUnits="userSpaceOnUse" x1="1304.02" y1="0" x2="1621.78" y2="0"><stop offset="0.0000" stop-color="#00c3ff"/><stop offset="0.0189" stop-color="#06c2ff"/><stop offset="0.1509" stop-color="#75bbff"/><stop offset="0.2642" stop-color="#ebb3ff"/><stop offset="0.2830" stop-color="#ffb1fd"/><stop offset="0.3491" stop-color="#ff81be"/><stop offset="0.4434" stop-color="#ff5586"/><stop offset="0.5755" stop-color="#ff3156"/><stop offset="0.7925" stop-color="#ff102b"/><stop offset="1.0000" stop-color="#ff0014"/></linearGradient><linearGradient id="t66" gradientUnits="userSpaceOnUse" x1="1302.90" y1="0" x2="1614.46" y2="0"><stop offset="0.0000" stop-color="#00bdff"/><stop offset="0.0192" stop-color="#06bcff"/><stop offset="0.1635" stop-color="#7cb3ff"/><stop offset="0.2788" stop-color="#f1abff"/><stop offset="0.2885" stop-color="#fcaaff"/><stop offset="0.3654" stop-color="#ff77bb"/><stop offset="0.4615" stop-color="#ff4f85"/><stop offset="0.6058" stop-color="#ff2b54"/><stop offset="0.8365" stop-color="#ff0c29"/><stop offset="1.0000" stop-color="#ff0017"/></linearGradient><linearGradient id="t67" gradientUnits="userSpaceOnUse" x1="1301.78" y1="0" x2="1607.13" y2="0"><stop offset="0.0000" stop-color="#00b6ff"/><stop offset="0.0196" stop-color="#06b5ff"/><stop offset="0.1667" stop-color="#79acff"/><stop offset="0.3039" stop-color="#ff9ffc"/><stop offset="0.3725" stop-color="#ff74bf"/><stop offset="0.4706" stop-color="#ff4c88"/><stop offset="0.6176" stop-color="#ff2956"/><stop offset="0.8431" stop-color="#ff0b2c"/><stop offset="1.0000" stop-color="#ff001a"/></linearGradient><linearGradient id="t68" gradientUnits="userSpaceOnUse" x1="1300.66" y1="0" x2="1599.81" y2="0"><stop offset="0.0000" stop-color="#00b0ff"/><stop offset="0.0200" stop-color="#05afff"/><stop offset="0.1700" stop-color="#77a5ff"/><stop offset="0.3000" stop-color="#f29aff"/><stop offset="0.3100" stop-color="#fd99ff"/><stop offset="0.3900" stop-color="#ff6bbc"/><stop offset="0.4900" stop-color="#ff4687"/><stop offset="0.6400" stop-color="#ff2556"/><stop offset="0.8800" stop-color="#ff082b"/><stop offset="1.0000" stop-color="#ff001e"/></linearGradient><linearGradient id="t69" gradientUnits="userSpaceOnUse" x1="1299.54" y1="0" x2="1592.49" y2="0"><stop offset="0.0000" stop-color="#00aaff"/><stop offset="0.0204" stop-color="#05a8ff"/><stop offset="0.1735" stop-color="#759eff"/><stop offset="0.3061" stop-color="#ee93ff"/><stop offset="0.3265" stop-color="#ff8ffb"/><stop offset="0.3980" stop-color="#ff68c0"/><stop offset="0.5000" stop-color="#ff438a"/><stop offset="0.6531" stop-color="#ff2359"/><stop offset="0.8980" stop-color="#ff062d"/><stop offset="1.0000" stop-color="#ff0021"/></linearGradient><linearGradient id="t70" gradientUnits="userSpaceOnUse" x1="1298.42" y1="0" x2="1585.16" y2="0"><stop offset="0.0000" stop-color="#00a4ff"/><stop offset="0.0208" stop-color="#05a2ff"/><stop offset="0.1875" stop-color="#7b97ff"/><stop offset="0.3229" stop-color="#f38bff"/><stop offset="0.3333" stop-color="#fe8aff"/><stop offset="0.4167" stop-color="#ff60bd"/><stop offset="0.5208" stop-color="#ff3e89"/><stop offset="0.6771" stop-color="#ff1f58"/><stop offset="0.9271" stop-color="#ff042e"/><stop offset="1.0000" stop-color="#ff0025"/></linearGradient><linearGradient id="t71" gradientUnits="userSpaceOnUse" x1="1297.30" y1="0" x2="1577.84" y2="0"><stop offset="0.0000" stop-color="#009eff"/><stop offset="0.0213" stop-color="#059cff"/><stop offset="0.1915" stop-color="#7990ff"/><stop offset="0.3298" stop-color="#ef84ff"/><stop offset="0.3511" stop-color="#ff7ffb"/><stop offset="0.4255" stop-color="#ff5cc1"/><stop offset="0.5319" stop-color="#ff3b8c"/><stop offset="0.6915" stop-color="#ff1d5b"/><stop offset="0.9468" stop-color="#ff022f"/><stop offset="1.0000" stop-color="#ff0029"/></linearGradient><linearGradient id="t72" gradientUnits="userSpaceOnUse" x1="1296.18" y1="0" x2="1570.52" y2="0"><stop offset="0.0000" stop-color="#0098ff"/><stop offset="0.0217" stop-color="#0597ff"/><stop offset="0.1957" stop-color="#778aff"/><stop offset="0.3478" stop-color="#f47cff"/><stop offset="0.3587" stop-color="#ff7bff"/><stop offset="0.4457" stop-color="#ff54be"/><stop offset="0.5652" stop-color="#ff3386"/><stop offset="0.7391" stop-color="#ff1656"/><stop offset="1.0000" stop-color="#ff002d"/></linearGradient><linearGradient id="t73" gradientUnits="userSpaceOnUse" x1="1295.06" y1="0" x2="1563.19" y2="0"><stop offset="0.0000" stop-color="#0092ff"/><stop offset="0.0222" stop-color="#0591ff"/><stop offset="0.2000" stop-color="#7584ff"/><stop offset="0.3556" stop-color="#f075ff"/><stop offset="0.3778" stop-color="#ff71fa"/><stop offset="0.4667" stop-color="#ff4dbc"/><stop offset="0.5889" stop-color="#ff2e85"/><stop offset="0.7667" stop-color="#ff1356"/><stop offset="1.0000" stop-color="#ff0031"/></linearGradient><linearGradient id="t74" gradientUnits="userSpaceOnUse" x1="1293.94" y1="0" x2="1555.87" y2="0"><stop offset="0.0000" stop-color="#008dff"/><stop offset="0.0227" stop-color="#058cff"/><stop offset="0.2159" stop-color="#7b7dff"/><stop offset="0.3750" stop-color="#f56eff"/><stop offset="0.3864" stop-color="#ff6dff"/><stop offset="0.4773" stop-color="#ff4ac0"/><stop offset="0.6023" stop-color="#ff2c88"/><stop offset="0.7841" stop-color="#ff1158"/><stop offset="1.0000" stop-color="#ff0036"/></linearGradient><linearGradient id="t75" gradientUnits="userSpaceOnUse" x1="1292.82" y1="0" x2="1548.55" y2="0"><stop offset="0.0000" stop-color="#0088ff"/><stop offset="0.0233" stop-color="#0586ff"/><stop offset="0.2209" stop-color="#7977ff"/><stop offset="0.3837" stop-color="#f168ff"/><stop offset="0.4070" stop-color="#ff63fa"/><stop offset="0.5000" stop-color="#ff43bd"/><stop offset="0.6279" stop-color="#ff2787"/><stop offset="0.8256" stop-color="#ff0d56"/><stop offset="1.0000" stop-color="#ff003b"/></linearGradient><linearGradient id="t76" gradientUnits="userSpaceOnUse" x1="1291.69" y1="0" x2="1541.22" y2="0"><stop offset="0.0000" stop-color="#0083ff"/><stop offset="0.0238" stop-color="#0581ff"/><stop offset="0.2262" stop-color="#7772ff"/><stop offset="0.3929" stop-color="#ed62ff"/><stop offset="0.4167" stop-color="#ff5ffe"/><stop offset="0.5119" stop-color="#ff40c1"/><stop offset="0.6429" stop-color="#ff248a"/><stop offset="0.8333" stop-color="#ff0c5a"/><stop offset="1.0000" stop-color="#ff003f"/></linearGradient><linearGradient id="t77" gradientUnits="userSpaceOnUse" x1="1290.57" y1="0" x2="1533.90" y2="0"><stop offset="0.0000" stop-color="#007eff"/><stop offset="0.0244" stop-color="#057cff"/><stop offset="0.2317" stop-color="#766cff"/><stop offset="0.4146" stop-color="#f25bff"/><stop offset="0.4390" stop-color="#ff57fa"/><stop offset="0.5366" stop-color="#ff3abe"/><stop offset="0.6829" stop-color="#ff1e86"/><stop offset="0.8902" stop-color="#ff0756"/><stop offset="1.0000" stop-color="#ff0045"/></linearGradient><linearGradient id="t78" gradientUnits="userSpaceOnUse" x1="1289.45" y1="0" x2="1526.58" y2="0"><stop offset="0.0000" stop-color="#0079ff"/><stop offset="0.0250" stop-color="#0577ff"/><stop offset="0.2500" stop-color="#7b66ff"/><stop offset="0.4500" stop-color="#ff53fe"/><stop offset="0.5500" stop-color="#ff36c2"/><stop offset="0.6875" stop-color="#ff1d8c"/><stop offset="0.9000" stop-color="#ff065a"/><stop offset="1.0000" stop-color="#ff004a"/></linearGradient><linearGradient id="t79" gradientUnits="userSpaceOnUse" x1="1288.33" y1="0" x2="1519.25" y2="0"><stop offset="0.0000" stop-color="#0074ff"/><stop offset="0.0260" stop-color="#0573ff"/><stop offset="0.2597" stop-color="#7b61ff"/><stop offset="0.4675" stop-color="#ff4dfe"/><stop offset="0.5714" stop-color="#ff32c2"/><stop offset="0.7143" stop-color="#ff198c"/><stop offset="0.9351" stop-color="#ff035a"/><stop offset="1.0000" stop-color="#ff0050"/></linearGradient><linearGradient id="t80" gradientUnits="userSpaceOnUse" x1="1287.21" y1="0" x2="1511.93" y2="0"><stop offset="0.0000" stop-color="#0070ff"/><stop offset="0.0400" stop-color="#0a6dff"/><stop offset="0.2800" stop-color="#805bff"/><stop offset="0.4800" stop-color="#fb48ff"/><stop offset="0.6133" stop-color="#ff29ba"/><stop offset="0.7733" stop-color="#ff1284"/><stop offset="1.0000" stop-color="#ff0056"/></linearGradient><linearGradient id="t81" gradientUnits="userSpaceOnUse" x1="1286.09" y1="0" x2="1504.61" y2="0"><stop offset="0.0000" stop-color="#006bff"/><stop offset="0.0411" stop-color="#0a68ff"/><stop offset="0.2877" stop-color="#7f56ff"/><stop offset="0.5068" stop-color="#ff41fe"/><stop offset="0.6164" stop-color="#ff29c3"/><stop offset="0.7808" stop-color="#ff118a"/><stop offset="1.0000" stop-color="#ff005c"/></linearGradient><linearGradient id="t82" gradientUnits="userSpaceOnUse" x1="1284.97" y1="0" x2="1497.29" y2="0"><stop offset="0.0000" stop-color="#0067ff"/><stop offset="0.0423" stop-color="#0a64ff"/><stop offset="0.2958" stop-color="#7d51ff"/><stop offset="0.5070" stop-color="#f33eff"/><stop offset="0.5352" stop-color="#ff3af9"/><stop offset="0.6620" stop-color="#ff21bb"/><stop offset="0.8310" stop-color="#ff0c86"/><stop offset="1.0000" stop-color="#ff0063"/></linearGradient><linearGradient id="t83" gradientUnits="userSpaceOnUse" x1="1283.85" y1="0" x2="1489.96" y2="0"><stop offset="0.0000" stop-color="#0062ff"/><stop offset="0.0435" stop-color="#0a60ff"/><stop offset="0.3043" stop-color="#7b4dff"/><stop offset="0.5507" stop-color="#ff36fd"/><stop offset="0.6812" stop-color="#ff1ebe"/><stop offset="0.8551" stop-color="#ff0989"/><stop offset="1.0000" stop-color="#ff006a"/></linearGradient><linearGradient id="t84" gradientUnits="userSpaceOnUse" x1="1282.73" y1="0" x2="1482.64" y2="0"><stop offset="0.0000" stop-color="#005eff"/><stop offset="0.0448" stop-color="#0a5bff"/><stop offset="0.3284" stop-color="#8047ff"/><stop offset="0.5672" stop-color="#fc32ff"/><stop offset="0.7164" stop-color="#ff19bc"/><stop offset="0.9104" stop-color="#ff0484"/><stop offset="1.0000" stop-color="#ff0072"/></linearGradient><linearGradient id="t85" gradientUnits="userSpaceOnUse" x1="1281.61" y1="0" x2="1475.32" y2="0"><stop offset="0.0000" stop-color="#005aff"/><stop offset="0.0462" stop-color="#0a57ff"/><stop offset="0.3385" stop-color="#7e43ff"/><stop offset="0.6000" stop-color="#ff2bfd"/><stop offset="0.7385" stop-color="#ff16bf"/><stop offset="0.9385" stop-color="#ff0287"/><stop offset="1.0000" stop-color="#ff007a"/></linearGradient><linearGradient id="t86" gradientUnits="userSpaceOnUse" x1="1280.49" y1="0" x2="1467.99" y2="0"><stop offset="0.0000" stop-color="#0056ff"/><stop offset="0.0476" stop-color="#0a53ff"/><stop offset="0.3492" stop-color="#7c3fff"/><stop offset="0.6032" stop-color="#f429ff"/><stop offset="0.6349" stop-color="#ff25f9"/><stop offset="0.7778" stop-color="#ff11bd"/><stop offset="0.9841" stop-color="#ff0086"/><stop offset="1.0000" stop-color="#ff0083"/></linearGradient><linearGradient id="t87" gradientUnits="userSpaceOnUse" x1="1279.36" y1="0" x2="1460.67" y2="0"><stop offset="0.0000" stop-color="#0052ff"/><stop offset="0.0492" stop-color="#094fff"/><stop offset="0.3607" stop-color="#7a3bff"/><stop offset="0.6557" stop-color="#ff21fd"/><stop offset="0.8033" stop-color="#ff0ec1"/><stop offset="1.0000" stop-color="#ff008c"/></linearGradient><linearGradient id="t88" gradientUnits="userSpaceOnUse" x1="1278.24" y1="0" x2="1453.35" y2="0"><stop offset="0.0000" stop-color="#004eff"/><stop offset="0.0508" stop-color="#094cff"/><stop offset="0.3898" stop-color="#7f35ff"/><stop offset="0.6780" stop-color="#fd1eff"/><stop offset="0.8644" stop-color="#ff08b9"/><stop offset="1.0000" stop-color="#ff0096"/></linearGradient><linearGradient id="t89" gradientUnits="userSpaceOnUse" x1="1277.12" y1="0" x2="1446.02" y2="0"><stop offset="0.0000" stop-color="#004bff"/><stop offset="0.0526" stop-color="#0948ff"/><stop offset="0.4035" stop-color="#7d31ff"/><stop offset="0.7193" stop-color="#ff18fd"/><stop offset="0.8772" stop-color="#ff07c2"/><stop offset="1.0000" stop-color="#ff00a1"/></linearGradient><linearGradient id="t90" gradientUnits="userSpaceOnUse" x1="1276.00" y1="0" x2="1438.70" y2="0"><stop offset="0.0000" stop-color="#0047ff"/><stop offset="0.0545" stop-color="#0944ff"/><stop offset="0.4182" stop-color="#7c2eff"/><stop offset="0.7273" stop-color="#f516ff"/><stop offset="0.7636" stop-color="#ff12f9"/><stop offset="0.9455" stop-color="#ff01bb"/><stop offset="1.0000" stop-color="#ff00ad"/></linearGradient><linearGradient id="t91" gradientUnits="userSpaceOnUse" x1="1274.88" y1="0" x2="1431.38" y2="0"><stop offset="0.0000" stop-color="#0044ff"/><stop offset="0.0566" stop-color="#0941ff"/><stop offset="0.4528" stop-color="#8029ff"/><stop offset="0.7925" stop-color="#ff0ffd"/><stop offset="0.9811" stop-color="#ff00be"/><stop offset="1.0000" stop-color="#ff00b9"/></linearGradient><linearGradient id="t92" gradientUnits="userSpaceOnUse" x1="1273.76" y1="0" x2="1424.05" y2="0"><stop offset="0.0000" stop-color="#0040ff"/><stop offset="0.0784" stop-color="#0e3cff"/><stop offset="0.4902" stop-color="#8524ff"/><stop offset="0.8235" stop-color="#fc0bff"/><stop offset="1.0000" stop-color="#ff00c7"/></linearGradient><linearGradient id="t93" gradientUnits="userSpaceOnUse" x1="1272.64" y1="0" x2="1416.73" y2="0"><stop offset="0.0000" stop-color="#003dff"/><stop offset="0.0816" stop-color="#0e39ff"/><stop offset="0.5102" stop-color="#8320ff"/><stop offset="0.8776" stop-color="#ff06fe"/><stop offset="1.0000" stop-color="#ff00d6"/></linearGradient><linearGradient id="t94" gradientUnits="userSpaceOnUse" x1="1271.52" y1="0" x2="1409.41" y2="0"><stop offset="0.0000" stop-color="#0039ff"/><stop offset="0.0870" stop-color="#0e35ff"/><stop offset="0.5435" stop-color="#841cff"/><stop offset="0.9130" stop-color="#fb03ff"/><stop offset="1.0000" stop-color="#ff00e6"/></linearGradient><linearGradient id="t95" gradientUnits="userSpaceOnUse" x1="1270.40" y1="0" x2="1402.08" y2="0"><stop offset="0.0000" stop-color="#0036ff"/><stop offset="0.0909" stop-color="#0e32ff"/><stop offset="0.5682" stop-color="#8219ff"/><stop offset="0.9773" stop-color="#ff00ff"/><stop offset="1.0000" stop-color="#ff00f8"/></linearGradient><linearGradient id="t96" gradientUnits="userSpaceOnUse" x1="1269.28" y1="0" x2="1394.76" y2="0"><stop offset="0.0000" stop-color="#0033ff"/><stop offset="0.0952" stop-color="#0e2fff"/><stop offset="0.5952" stop-color="#8016ff"/><stop offset="1.0000" stop-color="#f300ff"/></linearGradient><linearGradient id="t97" gradientUnits="userSpaceOnUse" x1="1268.16" y1="0" x2="1387.44" y2="0"><stop offset="0.0000" stop-color="#0030ff"/><stop offset="0.1000" stop-color="#0d2bff"/><stop offset="0.6500" stop-color="#8511ff"/><stop offset="1.0000" stop-color="#e100ff"/></linearGradient><linearGradient id="t98" gradientUnits="userSpaceOnUse" x1="1267.04" y1="0" x2="1380.12" y2="0"><stop offset="0.0000" stop-color="#002dff"/><stop offset="0.1053" stop-color="#0d28ff"/><stop offset="0.6842" stop-color="#830eff"/><stop offset="1.0000" stop-color="#d000ff"/></linearGradient><linearGradient id="t99" gradientUnits="userSpaceOnUse" x1="1265.91" y1="0" x2="1372.79" y2="0"><stop offset="0.0000" stop-color="#002aff"/><stop offset="0.1111" stop-color="#0d25ff"/><stop offset="0.7222" stop-color="#810bff"/><stop offset="1.0000" stop-color="#bf00ff"/></linearGradient><linearGradient id="t100" gradientUnits="userSpaceOnUse" x1="1264.79" y1="0" x2="1365.47" y2="0"><stop offset="0.0000" stop-color="#0027ff"/><stop offset="0.1471" stop-color="#1121ff"/><stop offset="0.7941" stop-color="#8507ff"/><stop offset="1.0000" stop-color="#b000ff"/></linearGradient><linearGradient id="t101" gradientUnits="userSpaceOnUse" x1="1263.67" y1="0" x2="1358.15" y2="0"><stop offset="0.0000" stop-color="#0024ff"/><stop offset="0.1563" stop-color="#111eff"/><stop offset="0.8750" stop-color="#8902ff"/><stop offset="1.0000" stop-color="#a100ff"/></linearGradient><linearGradient id="t102" gradientUnits="userSpaceOnUse" x1="1262.55" y1="0" x2="1350.82" y2="0"><stop offset="0.0000" stop-color="#0021ff"/><stop offset="0.1667" stop-color="#111cff"/><stop offset="0.9333" stop-color="#8700ff"/><stop offset="1.0000" stop-color="#9200ff"/></linearGradient><linearGradient id="t103" gradientUnits="userSpaceOnUse" x1="1261.43" y1="0" x2="1343.50" y2="0"><stop offset="0.0000" stop-color="#001eff"/><stop offset="0.1786" stop-color="#1119ff"/><stop offset="1.0000" stop-color="#8500ff"/></linearGradient><linearGradient id="t104" gradientUnits="userSpaceOnUse" x1="1260.31" y1="0" x2="1336.18" y2="0"><stop offset="0.0000" stop-color="#001bff"/><stop offset="0.1923" stop-color="#1016ff"/><stop offset="1.0000" stop-color="#7700ff"/></linearGradient><linearGradient id="t105" gradientUnits="userSpaceOnUse" x1="1259.19" y1="0" x2="1328.85" y2="0"><stop offset="0.0000" stop-color="#0019ff"/><stop offset="0.2083" stop-color="#1013ff"/><stop offset="1.0000" stop-color="#6b00ff"/></linearGradient><linearGradient id="t106" gradientUnits="userSpaceOnUse" x1="1258.07" y1="0" x2="1321.53" y2="0"><stop offset="0.0000" stop-color="#0016ff"/><stop offset="0.2273" stop-color="#1011ff"/><stop offset="1.0000" stop-color="#5f00ff"/></linearGradient><linearGradient id="t107" gradientUnits="userSpaceOnUse" x1="1256.95" y1="0" x2="1314.21" y2="0"><stop offset="0.0000" stop-color="#0013ff"/><stop offset="0.2500" stop-color="#100eff"/><stop offset="1.0000" stop-color="#5300ff"/></linearGradient><linearGradient id="t108" gradientUnits="userSpaceOnUse" x1="1255.83" y1="0" x2="1306.88" y2="0"><stop offset="0.0000" stop-color="#0011ff"/><stop offset="0.3333" stop-color="#130bff"/><stop offset="1.0000" stop-color="#4800ff"/></linearGradient><linearGradient id="t109" gradientUnits="userSpaceOnUse" x1="1254.71" y1="0" x2="1299.56" y2="0"><stop offset="0.0000" stop-color="#000eff"/><stop offset="0.4000" stop-color="#1508ff"/><stop offset="1.0000" stop-color="#3e00ff"/></linearGradient><linearGradient id="t110" gradientUnits="userSpaceOnUse" x1="1253.58" y1="0" x2="1292.24" y2="0"><stop offset="0.0000" stop-color="#000cff"/><stop offset="0.4615" stop-color="#1405ff"/><stop offset="1.0000" stop-color="#3300ff"/></linearGradient><linearGradient id="t111" gradientUnits="userSpaceOnUse" x1="1252.46" y1="0" x2="1284.91" y2="0"><stop offset="0.0000" stop-color="#000aff"/><stop offset="0.5455" stop-color="#1403ff"/><stop offset="1.0000" stop-color="#2900ff"/></linearGradient><linearGradient id="t112" gradientUnits="userSpaceOnUse" x1="1251.34" y1="0" x2="1277.59" y2="0"><stop offset="0.0000" stop-color="#0007ff"/><stop offset="0.6667" stop-color="#1301ff"/><stop offset="1.0000" stop-color="#2000ff"/></linearGradient><linearGradient id="t113" gradientUnits="userSpaceOnUse" x1="1250.22" y1="0" x2="1270.27" y2="0"><stop offset="0.0000" stop-color="#0005ff"/><stop offset="0.8571" stop-color="#1300ff"/><stop offset="1.0000" stop-color="#1700ff"/></linearGradient><linearGradient id="t114" gradientUnits="userSpaceOnUse" x1="1249.10" y1="0" x2="1262.95" y2="0"><stop offset="0.0000" stop-color="#0003ff"/><stop offset="1.0000" stop-color="#0e00ff"/></linearGradient><linearGradient id="t115" gradientUnits="userSpaceOnUse" x1="1249.10" y1="0" x2="1255.62" y2="0"><stop offset="0.0000" stop-color="#0000ff"/><stop offset="1.0000" stop-color="#0500ff"/></linearGradient><clipPath id="locclip"><path d="M1272.7,775.7 L1272.7,775.7 L1272.7,775.7 L1272.7,775.7 L1272.7,775.7 L1272.7,775.7 L1272.6,775.7 L1272.6,775.7 L1272.6,775.8 L1272.6,775.8 L1272.5,775.8 L1272.5,775.8 L1272.5,775.8 L1272.4,775.8 L1272.4,775.8 L1272.4,775.8 L1272.4,775.8 L1272.3,775.8 L1272.3,775.8 L1272.3,775.8 L1272.2,775.8 L1272.2,775.9 L1272.1,775.9 L1272.1,775.9 L1272.0,775.9 L1272.0,775.9 L1272.0,775.9 L1271.9,775.9 L1271.9,775.9 L1271.8,775.9 L1271.8,775.9 L1271.7,775.9 L1271.7,775.9 L1271.6,775.9 L1271.6,775.9 L1271.5,775.9 L1271.4,775.9 L1271.4,775.9 L1271.3,775.9 L1271.2,775.9 L1271.2,775.9 L1271.1,775.9 L1271.0,775.9 L1270.9,775.9 L1270.8,775.9 L1270.7,775.8 L1270.6,775.8 L1270.5,775.7 L1270.4,775.7 L1270.3,775.6 L1270.1,775.5 L1270.0,775.4 L1269.8,775.3 L1269.6,775.2 L1269.5,775.1 L1269.3,774.9 L1269.1,774.8 L1268.9,774.6 L1268.7,774.5 L1268.5,774.3 L1268.3,774.1 L1268.0,773.9 L1267.7,773.7 L1267.5,773.5 L1267.2,773.2 L1266.9,772.9 L1266.5,772.7 L1266.2,772.4 L1265.9,772.1 L1265.5,771.8 L1265.2,771.4 L1264.8,771.1 L1264.4,770.7 L1264.0,770.3 L1263.5,770.0 L1263.1,769.6 L1262.6,769.1 L1262.1,768.7 L1261.5,768.2 L1261.0,767.7 L1260.4,767.2 L1259.7,766.7 L1259.1,766.1 L1258.4,765.5 L1257.7,764.9 L1256.9,764.3 L1256.2,763.6 L1255.4,762.9 L1254.6,762.2 L1253.7,761.5 L1252.9,760.6 L1251.9,759.8 L1251.0,758.9 L1250.0,757.9 L1249.0,756.9 L1247.9,755.9 L1246.8,754.7 L1245.7,753.5 L1244.6,752.2 L1243.4,750.9 L1242.2,749.5 L1240.9,747.8 L1239.5,746.0 L1238.1,743.9 L1236.5,741.7 L1235.0,739.4 L1233.3,736.8 L1231.5,733.9 L1229.7,730.7 L1227.8,727.3 L1225.9,723.7 L1223.9,719.9 L1221.8,715.7 L1219.6,711.1 L1217.3,706.0 L1214.9,700.5 L1212.4,694.7 L1209.8,688.5 L1207.2,681.8 L1204.4,674.7 L1201.5,666.9 L1198.5,658.6 L1195.3,649.8 L1192.1,640.5 L1188.7,630.6 L1185.4,620.1 L1182.1,608.9 L1178.8,597.0 L1175.4,584.5 L1172.0,571.4 L1168.7,557.6 L1165.3,543.3 L1162.0,528.5 L1158.8,513.0 L1155.5,496.8 L1152.2,480.0 L1149.0,462.9 L1146.0,445.5 L1143.2,428.2 L1140.6,410.6 L1138.1,392.7 L1135.7,374.5 L1133.5,356.4 L1131.6,338.5 L1130.1,321.0 L1128.7,303.8 L1127.7,286.7 L1126.8,269.8 L1126.3,253.2 L1126.1,237.2 L1126.4,221.8 L1126.9,206.9 L1127.8,192.3 L1129.1,178.2 L1130.7,164.8 L1132.6,152.1 L1135.0,140.5 L1137.7,129.6 L1140.8,119.5 L1144.3,110.2 L1148.1,101.7 L1152.2,94.2 L1156.5,87.8 L1161.0,82.4 L1165.8,78.1 L1170.9,74.8 L1176.1,72.3 L1181.5,70.4 L1186.9,69.2 L1192.4,68.7 L1198.0,69.1 L1203.8,70.2 L1209.6,71.8 L1215.4,73.7 L1221.2,75.7 L1227.0,77.9 L1232.9,80.5 L1238.7,83.4 L1244.6,86.5 L1250.3,89.8 L1256.0,93.0 L1261.6,96.2 L1267.2,99.5 L1272.7,103.0 L1278.1,106.5 L1283.5,110.0 L1288.9,113.7 L1294.2,117.4 L1299.5,121.2 L1304.8,125.0 L1310.0,128.9 L1315.2,132.9 L1320.5,137.0 L1325.7,141.1 L1330.9,145.3 L1336.1,149.5 L1341.3,153.8 L1346.4,158.1 L1351.6,162.5 L1356.7,167.0 L1361.9,171.5 L1367.0,176.0 L1372.1,180.6 L1377.3,185.2 L1382.4,189.8 L1387.5,194.5 L1392.6,199.2 L1397.7,203.9 L1402.8,208.7 L1408.0,213.5 L1413.1,218.3 L1418.2,223.1 L1423.3,228.0 L1428.5,232.9 L1433.6,237.8 L1438.7,242.7 L1443.9,247.6 L1449.0,252.5 L1454.1,257.5 L1459.2,262.5 L1464.3,267.4 L1469.4,272.4 L1474.5,277.4 L1479.6,282.3 L1484.7,287.3 L1489.8,292.3 L1494.8,297.2 L1499.9,302.2 L1504.9,307.1 L1509.9,312.0 L1514.9,317.0 L1519.9,321.9 L1524.9,326.8 L1529.9,331.7 L1534.8,336.5 L1539.7,341.4 L1544.5,346.2 L1549.4,351.0 L1554.2,355.7 L1559.0,360.5 L1563.8,365.2 L1568.5,369.8 L1573.2,374.5 L1577.8,379.1 L1582.4,383.6 L1587.0,388.2 L1591.5,392.6 L1596.0,397.0 L1600.4,401.4 L1604.8,405.7 L1609.2,410.0 L1613.5,414.2 L1617.7,418.4 L1621.8,422.5 L1625.9,426.5 L1629.9,430.5 L1633.9,434.4 L1637.7,438.3 L1641.5,442.0 L1645.2,445.6 L1648.7,449.1 L1652.2,452.6 L1655.6,455.9 L1658.9,459.2 L1662.2,462.4 L1665.4,465.6 L1668.6,468.7 L1671.7,471.8 L1674.7,474.8 L1677.6,477.6 L1680.5,480.4 L1683.2,483.1 L1685.8,485.7 L1688.4,488.2 L1690.9,490.6 L1693.3,493.0 L1695.6,495.3 L1697.8,497.5 L1700.0,499.6 L1702.1,501.7 L1704.1,503.7 L1706.0,505.6 L1707.9,507.5 L1709.7,509.2 L1711.4,511.0 L1713.1,512.6 L1714.7,514.2 L1716.2,515.7 L1717.7,517.2 L1719.1,518.6 L1720.5,519.9 L1721.8,521.2 L1723.1,522.5 L1724.3,523.7 L1725.5,524.8 L1726.7,526.0 L1727.8,527.1 L1728.8,528.1 L1729.8,529.1 L1730.8,530.1 L1731.8,531.1 L1732.7,532.0 L1733.7,532.9 L1734.5,533.8 L1735.4,534.6 L1736.2,535.5 L1737.0,536.3 L1737.8,537.0 L1738.6,537.8 L1739.3,538.5 L1740.0,539.2 L1740.7,539.9 L1741.3,540.5 L1742.0,541.2 L1742.6,541.7 L1743.2,542.3 L1743.7,542.8 L1744.3,543.4 L1744.8,543.9 L1745.3,544.3 L1745.7,544.8 L1746.2,545.2 L1746.6,545.6 L1747.0,546.0 L1747.4,546.4 L1747.7,546.8 L1748.1,547.1 L1748.4,547.5 L1748.7,547.8 L1749.0,548.1 L1749.3,548.4 L1749.6,548.7 L1749.9,548.9 L1750.1,549.2 L1750.4,549.4 L1750.6,549.6 L1750.8,549.8 L1751.0,550.0 L1751.2,550.2 L1751.3,550.3 L1751.5,550.5 L1751.6,550.6 L1751.7,550.8 L1751.9,550.9 L1752.0,551.0 L1752.2,551.2 L1752.3,551.3 L1752.4,551.4 L1752.5,551.5 L1752.6,551.6 L1752.7,551.7 L1752.8,551.8 L1752.9,551.9 L1753.0,552.0 L1753.1,552.1 L1753.2,552.2 L1753.3,552.3 L1753.4,552.4 L1753.5,552.5 L1753.6,552.6 L1753.7,552.7 L1753.8,552.8 L1753.9,552.9 L1754.0,553.0 L1754.1,553.1 L1754.2,553.2 L1754.2,553.2 L1754.3,553.3 L1754.4,553.4 L1754.4,553.4 L1754.5,553.5 L1754.5,553.5 L1754.6,553.6 L1754.6,553.6 L1754.7,553.6 L1754.7,553.7 L1754.7,553.7 L1754.7,553.7 L1754.8,553.7 L1754.8,553.8 L1754.8,553.8 L1754.8,553.8 L1754.8,553.8 L1754.8,553.8 L1754.8,553.8 Z"/></clipPath><clipPath id="triclip"><path d="M1673.40,498.68 L1381.00,268.50 L1252.00,728.85 Z"/></clipPath></defs>
<g clip-path="url(#locclip)"><rect x="1180.43" y="66.00" width="25.34" height="4.60" fill="url(#s0)"/><rect x="1169.52" y="70.00" width="49.83" height="4.60" fill="url(#s1)"/><rect x="1163.00" y="74.00" width="67.25" height="4.60" fill="url(#s2)"/><rect x="1158.44" y="78.00" width="80.40" height="4.60" fill="url(#s3)"/><rect x="1154.95" y="82.00" width="91.56" height="4.60" fill="url(#s4)"/><rect x="1152.00" y="86.00" width="101.75" height="4.60" fill="url(#s5)"/><rect x="1149.37" y="90.00" width="111.44" height="4.60" fill="url(#s6)"/><rect x="1147.18" y="94.00" width="120.45" height="4.60" fill="url(#s7)"/><rect x="1145.04" y="98.00" width="129.09" height="4.60" fill="url(#s8)"/><rect x="1143.23" y="102.00" width="137.14" height="4.60" fill="url(#s9)"/><rect x="1141.43" y="106.00" width="145.00" height="4.60" fill="url(#s10)"/><rect x="1139.91" y="110.00" width="152.42" height="4.60" fill="url(#s11)"/><rect x="1138.40" y="114.00" width="159.67" height="4.60" fill="url(#s12)"/><rect x="1137.06" y="118.00" width="166.59" height="4.60" fill="url(#s13)"/><rect x="1135.82" y="122.00" width="173.26" height="4.60" fill="url(#s14)"/><rect x="1134.59" y="126.00" width="179.80" height="4.60" fill="url(#s15)"/><rect x="1133.59" y="130.00" width="186.04" height="4.60" fill="url(#s16)"/><rect x="1132.58" y="134.00" width="192.19" height="4.60" fill="url(#s17)"/><rect x="1131.65" y="138.00" width="198.17" height="4.60" fill="url(#s18)"/><rect x="1130.85" y="142.00" width="203.93" height="4.60" fill="url(#s19)"/><rect x="1130.06" y="146.00" width="209.61" height="4.60" fill="url(#s20)"/><rect x="1129.35" y="150.00" width="215.13" height="4.60" fill="url(#s21)"/><rect x="1128.73" y="154.00" width="220.51" height="4.60" fill="url(#s22)"/><rect x="1128.11" y="158.00" width="225.84" height="4.60" fill="url(#s23)"/><rect x="1127.53" y="162.00" width="231.07" height="4.60" fill="url(#s24)"/><rect x="1127.06" y="166.00" width="236.14" height="4.60" fill="url(#s25)"/><rect x="1126.58" y="170.00" width="241.16" height="4.60" fill="url(#s26)"/><rect x="1126.11" y="174.00" width="246.14" height="4.60" fill="url(#s27)"/><rect x="1125.74" y="178.00" width="250.97" height="4.60" fill="url(#s28)"/><rect x="1125.39" y="182.00" width="255.76" height="4.60" fill="url(#s29)"/><rect x="1125.04" y="186.00" width="260.53" height="4.60" fill="url(#s30)"/><rect x="1125.00" y="190.00" width="264.96" height="4.60" fill="url(#s31)"/><rect x="1125.00" y="194.00" width="269.31" height="4.60" fill="url(#s32)"/><rect x="1125.00" y="198.00" width="273.64" height="4.60" fill="url(#s33)"/><rect x="1125.00" y="202.00" width="277.94" height="4.60" fill="url(#s34)"/><rect x="1125.00" y="206.00" width="282.23" height="4.60" fill="url(#s35)"/><rect x="1125.00" y="210.00" width="286.50" height="4.60" fill="url(#s36)"/><rect x="1125.00" y="214.00" width="290.76" height="4.60" fill="url(#s37)"/><rect x="1125.00" y="218.00" width="295.01" height="4.60" fill="url(#s38)"/><rect x="1125.00" y="222.00" width="299.24" height="4.60" fill="url(#s39)"/><rect x="1125.00" y="226.00" width="303.45" height="4.60" fill="url(#s40)"/><rect x="1125.00" y="230.00" width="307.65" height="4.60" fill="url(#s41)"/><rect x="1125.00" y="234.00" width="311.84" height="4.60" fill="url(#s42)"/><rect x="1125.00" y="238.00" width="316.01" height="4.60" fill="url(#s43)"/><rect x="1125.00" y="242.00" width="320.18" height="4.60" fill="url(#s44)"/><rect x="1125.00" y="246.00" width="324.33" height="4.60" fill="url(#s45)"/><rect x="1125.00" y="250.00" width="328.47" height="4.60" fill="url(#s46)"/><rect x="1125.00" y="254.00" width="332.59" height="4.60" fill="url(#s47)"/><rect x="1125.00" y="258.00" width="336.71" height="4.60" fill="url(#s48)"/><rect x="1125.00" y="262.00" width="340.82" height="4.60" fill="url(#s49)"/><rect x="1125.00" y="266.00" width="344.92" height="4.60" fill="url(#s50)"/><rect x="1125.00" y="270.00" width="349.02" height="4.60" fill="url(#s51)"/><rect x="1125.00" y="274.00" width="353.12" height="4.60" fill="url(#s52)"/><rect x="1125.00" y="278.00" width="357.23" height="4.60" fill="url(#s53)"/><rect x="1125.00" y="282.00" width="361.33" height="4.60" fill="url(#s54)"/><rect x="1125.00" y="286.00" width="365.42" height="4.60" fill="url(#s55)"/><rect x="1125.00" y="290.00" width="369.52" height="4.60" fill="url(#s56)"/><rect x="1125.13" y="294.00" width="373.48" height="4.60" fill="url(#s57)"/><rect x="1125.38" y="298.00" width="377.32" height="4.60" fill="url(#s58)"/><rect x="1125.63" y="302.00" width="381.14" height="4.60" fill="url(#s59)"/><rect x="1125.91" y="306.00" width="384.94" height="4.60" fill="url(#s60)"/><rect x="1126.22" y="310.00" width="388.70" height="4.60" fill="url(#s61)"/><rect x="1126.52" y="314.00" width="392.46" height="4.60" fill="url(#s62)"/><rect x="1126.82" y="318.00" width="396.21" height="4.60" fill="url(#s63)"/><rect x="1127.14" y="322.00" width="399.95" height="4.60" fill="url(#s64)"/><rect x="1127.50" y="326.00" width="403.64" height="4.60" fill="url(#s65)"/><rect x="1127.87" y="330.00" width="407.33" height="4.60" fill="url(#s66)"/><rect x="1128.23" y="334.00" width="411.02" height="4.60" fill="url(#s67)"/><rect x="1128.59" y="338.00" width="414.71" height="4.60" fill="url(#s68)"/><rect x="1129.00" y="342.00" width="418.34" height="4.60" fill="url(#s69)"/><rect x="1129.43" y="346.00" width="421.97" height="4.60" fill="url(#s70)"/><rect x="1129.85" y="350.00" width="425.59" height="4.60" fill="url(#s71)"/><rect x="1130.27" y="354.00" width="429.21" height="4.60" fill="url(#s72)"/><rect x="1130.72" y="358.00" width="432.81" height="4.60" fill="url(#s73)"/><rect x="1131.20" y="362.00" width="436.38" height="4.60" fill="url(#s74)"/><rect x="1131.67" y="366.00" width="439.95" height="4.60" fill="url(#s75)"/><rect x="1132.15" y="370.00" width="443.52" height="4.60" fill="url(#s76)"/><rect x="1132.62" y="374.00" width="447.09" height="4.60" fill="url(#s77)"/><rect x="1133.14" y="378.00" width="450.62" height="4.60" fill="url(#s78)"/><rect x="1133.66" y="382.00" width="454.15" height="4.60" fill="url(#s79)"/><rect x="1134.18" y="386.00" width="457.68" height="4.60" fill="url(#s80)"/><rect x="1134.71" y="390.00" width="461.21" height="4.60" fill="url(#s81)"/><rect x="1135.24" y="394.00" width="464.73" height="4.60" fill="url(#s82)"/><rect x="1135.81" y="398.00" width="468.23" height="4.60" fill="url(#s83)"/><rect x="1136.37" y="402.00" width="471.74" height="4.60" fill="url(#s84)"/><rect x="1136.93" y="406.00" width="475.24" height="4.60" fill="url(#s85)"/><rect x="1137.49" y="410.00" width="478.74" height="4.60" fill="url(#s86)"/><rect x="1138.09" y="414.00" width="482.20" height="4.60" fill="url(#s87)"/><rect x="1138.69" y="418.00" width="485.65" height="4.60" fill="url(#s88)"/><rect x="1139.29" y="422.00" width="489.08" height="4.60" fill="url(#s89)"/><rect x="1139.89" y="426.00" width="492.51" height="4.60" fill="url(#s90)"/><rect x="1140.51" y="430.00" width="495.92" height="4.60" fill="url(#s91)"/><rect x="1141.15" y="434.00" width="499.31" height="4.60" fill="url(#s92)"/><rect x="1141.80" y="438.00" width="502.70" height="4.60" fill="url(#s93)"/><rect x="1142.44" y="442.00" width="506.11" height="4.60" fill="url(#s94)"/><rect x="1143.09" y="446.00" width="509.51" height="4.60" fill="url(#s95)"/><rect x="1143.79" y="450.00" width="512.86" height="4.60" fill="url(#s96)"/><rect x="1144.48" y="454.00" width="516.22" height="4.60" fill="url(#s97)"/><rect x="1145.18" y="458.00" width="519.58" height="4.60" fill="url(#s98)"/><rect x="1145.87" y="462.00" width="522.94" height="4.60" fill="url(#s99)"/><rect x="1146.61" y="466.00" width="526.26" height="4.60" fill="url(#s100)"/><rect x="1147.35" y="470.00" width="529.57" height="4.60" fill="url(#s101)"/><rect x="1148.09" y="474.00" width="532.89" height="4.60" fill="url(#s102)"/><rect x="1148.83" y="478.00" width="536.21" height="4.60" fill="url(#s103)"/><rect x="1149.59" y="482.00" width="539.54" height="4.60" fill="url(#s104)"/><rect x="1150.36" y="486.00" width="542.85" height="4.60" fill="url(#s105)"/><rect x="1151.14" y="490.00" width="546.15" height="4.60" fill="url(#s106)"/><rect x="1151.92" y="494.00" width="549.42" height="4.60" fill="url(#s107)"/><rect x="1152.71" y="498.00" width="552.67" height="4.60" fill="url(#s108)"/><rect x="1153.53" y="502.00" width="555.88" height="4.60" fill="url(#s109)"/><rect x="1154.34" y="506.00" width="559.10" height="4.60" fill="url(#s110)"/><rect x="1155.16" y="510.00" width="562.32" height="4.60" fill="url(#s111)"/><rect x="1155.98" y="514.00" width="565.54" height="4.60" fill="url(#s112)"/><rect x="1156.82" y="518.00" width="568.78" height="4.60" fill="url(#s113)"/><rect x="1157.67" y="522.00" width="572.00" height="4.60" fill="url(#s114)"/><rect x="1158.52" y="526.00" width="575.19" height="4.60" fill="url(#s115)"/><rect x="1159.38" y="530.00" width="578.36" height="4.60" fill="url(#s116)"/><rect x="1160.26" y="534.00" width="581.51" height="4.60" fill="url(#s117)"/><rect x="1161.15" y="538.00" width="584.70" height="4.60" fill="url(#s118)"/><rect x="1162.03" y="542.00" width="587.90" height="4.60" fill="url(#s119)"/><rect x="1162.95" y="546.00" width="591.02" height="4.60" fill="url(#s120)"/><rect x="1163.88" y="550.00" width="593.62" height="4.60" fill="url(#s121)"/><rect x="1164.81" y="554.00" width="592.64" height="4.60" fill="url(#s122)"/><rect x="1165.75" y="558.00" width="583.01" height="4.60" fill="url(#s123)"/><rect x="1166.73" y="562.00" width="573.34" height="4.60" fill="url(#s124)"/><rect x="1167.71" y="566.00" width="563.67" height="4.60" fill="url(#s125)"/><rect x="1168.70" y="570.00" width="554.00" height="4.60" fill="url(#s126)"/><rect x="1169.71" y="574.00" width="544.30" height="4.60" fill="url(#s127)"/><rect x="1170.73" y="578.00" width="534.58" height="4.60" fill="url(#s128)"/><rect x="1171.76" y="582.00" width="524.86" height="4.60" fill="url(#s129)"/><rect x="1172.81" y="586.00" width="515.12" height="4.60" fill="url(#s130)"/><rect x="1173.88" y="590.00" width="505.36" height="4.60" fill="url(#s131)"/><rect x="1174.95" y="594.00" width="495.60" height="4.60" fill="url(#s132)"/><rect x="1176.04" y="598.00" width="485.82" height="4.60" fill="url(#s133)"/><rect x="1177.15" y="602.00" width="476.01" height="4.60" fill="url(#s134)"/><rect x="1178.27" y="606.00" width="466.21" height="4.60" fill="url(#s135)"/><rect x="1179.41" y="610.00" width="456.38" height="4.60" fill="url(#s136)"/><rect x="1180.60" y="614.00" width="446.50" height="4.60" fill="url(#s137)"/><rect x="1181.78" y="618.00" width="436.62" height="4.60" fill="url(#s138)"/><rect x="1183.01" y="622.00" width="426.70" height="4.60" fill="url(#s139)"/><rect x="1184.29" y="626.00" width="416.74" height="4.60" fill="url(#s140)"/><rect x="1185.56" y="630.00" width="406.78" height="4.60" fill="url(#s141)"/><rect x="1186.90" y="634.00" width="396.75" height="4.60" fill="url(#s142)"/><rect x="1188.24" y="638.00" width="386.71" height="4.60" fill="url(#s143)"/><rect x="1189.61" y="642.00" width="376.65" height="4.60" fill="url(#s144)"/><rect x="1191.01" y="646.00" width="366.56" height="4.60" fill="url(#s145)"/><rect x="1192.42" y="650.00" width="356.46" height="4.60" fill="url(#s146)"/><rect x="1193.86" y="654.00" width="346.33" height="4.60" fill="url(#s147)"/><rect x="1195.30" y="658.00" width="336.20" height="4.60" fill="url(#s148)"/><rect x="1196.75" y="662.00" width="326.06" height="4.60" fill="url(#s149)"/><rect x="1198.20" y="666.00" width="315.92" height="4.60" fill="url(#s150)"/><rect x="1199.68" y="670.00" width="305.75" height="4.60" fill="url(#s151)"/><rect x="1201.16" y="674.00" width="295.59" height="4.60" fill="url(#s152)"/><rect x="1202.68" y="678.00" width="285.37" height="4.60" fill="url(#s153)"/><rect x="1204.22" y="682.00" width="275.14" height="4.60" fill="url(#s154)"/><rect x="1205.82" y="686.00" width="264.85" height="4.60" fill="url(#s155)"/><rect x="1207.44" y="690.00" width="254.54" height="4.60" fill="url(#s156)"/><rect x="1209.09" y="694.00" width="244.19" height="4.60" fill="url(#s157)"/><rect x="1210.79" y="698.00" width="233.81" height="4.60" fill="url(#s158)"/><rect x="1212.51" y="702.00" width="223.40" height="4.60" fill="url(#s159)"/><rect x="1214.26" y="706.00" width="212.96" height="4.60" fill="url(#s160)"/><rect x="1216.07" y="710.00" width="202.45" height="4.60" fill="url(#s161)"/><rect x="1217.96" y="714.00" width="191.87" height="4.60" fill="url(#s162)"/><rect x="1219.93" y="718.00" width="181.21" height="4.60" fill="url(#s163)"/><rect x="1221.99" y="722.00" width="170.46" height="4.60" fill="url(#s164)"/><rect x="1224.13" y="726.00" width="159.63" height="4.60" fill="url(#s165)"/><rect x="1226.33" y="730.00" width="148.74" height="4.60" fill="url(#s166)"/><rect x="1228.61" y="734.00" width="137.77" height="4.60" fill="url(#s167)"/><rect x="1231.09" y="738.00" width="126.61" height="4.60" fill="url(#s168)"/><rect x="1233.74" y="742.00" width="115.27" height="4.60" fill="url(#s169)"/><rect x="1236.55" y="746.00" width="103.76" height="4.60" fill="url(#s170)"/><rect x="1239.66" y="750.00" width="91.97" height="4.60" fill="url(#s171)"/><rect x="1243.22" y="754.00" width="79.71" height="4.60" fill="url(#s172)"/><rect x="1247.08" y="758.00" width="67.16" height="4.60" fill="url(#s173)"/><rect x="1251.35" y="762.00" width="54.21" height="4.60" fill="url(#s174)"/><rect x="1255.95" y="766.00" width="40.91" height="4.60" fill="url(#s175)"/><rect x="1260.59" y="770.00" width="27.58" height="4.60" fill="url(#s176)"/><rect x="1265.12" y="774.00" width="14.36" height="4.60" fill="url(#s177)"/></g>
<g clip-path="url(#triclip)"><rect x="1376.88" y="268.50" width="12.19" height="4.60" fill="url(#t0)"/><rect x="1375.76" y="272.50" width="18.39" height="4.60" fill="url(#t1)"/><rect x="1374.64" y="276.50" width="24.59" height="4.60" fill="url(#t2)"/><rect x="1373.52" y="280.50" width="30.79" height="4.60" fill="url(#t3)"/><rect x="1372.40" y="284.50" width="37.00" height="4.60" fill="url(#t4)"/><rect x="1371.28" y="288.50" width="43.20" height="4.60" fill="url(#t5)"/><rect x="1370.16" y="292.50" width="49.40" height="4.60" fill="url(#t6)"/><rect x="1369.04" y="296.50" width="55.60" height="4.60" fill="url(#t7)"/><rect x="1367.91" y="300.50" width="61.80" height="4.60" fill="url(#t8)"/><rect x="1366.79" y="304.50" width="68.01" height="4.60" fill="url(#t9)"/><rect x="1365.67" y="308.50" width="74.21" height="4.60" fill="url(#t10)"/><rect x="1364.55" y="312.50" width="80.41" height="4.60" fill="url(#t11)"/><rect x="1363.43" y="316.50" width="86.61" height="4.60" fill="url(#t12)"/><rect x="1362.31" y="320.50" width="92.82" height="4.60" fill="url(#t13)"/><rect x="1361.19" y="324.50" width="99.02" height="4.60" fill="url(#t14)"/><rect x="1360.07" y="328.50" width="105.22" height="4.60" fill="url(#t15)"/><rect x="1358.95" y="332.50" width="111.42" height="4.60" fill="url(#t16)"/><rect x="1357.83" y="336.50" width="117.62" height="4.60" fill="url(#t17)"/><rect x="1356.71" y="340.50" width="123.83" height="4.60" fill="url(#t18)"/><rect x="1355.59" y="344.50" width="130.03" height="4.60" fill="url(#t19)"/><rect x="1354.46" y="348.50" width="136.23" height="4.60" fill="url(#t20)"/><rect x="1353.34" y="352.50" width="142.43" height="4.60" fill="url(#t21)"/><rect x="1352.22" y="356.50" width="148.64" height="4.60" fill="url(#t22)"/><rect x="1351.10" y="360.50" width="154.84" height="4.60" fill="url(#t23)"/><rect x="1349.98" y="364.50" width="161.04" height="4.60" fill="url(#t24)"/><rect x="1348.86" y="368.50" width="167.24" height="4.60" fill="url(#t25)"/><rect x="1347.74" y="372.50" width="173.44" height="4.60" fill="url(#t26)"/><rect x="1346.62" y="376.50" width="179.65" height="4.60" fill="url(#t27)"/><rect x="1345.50" y="380.50" width="185.85" height="4.60" fill="url(#t28)"/><rect x="1344.38" y="384.50" width="192.05" height="4.60" fill="url(#t29)"/><rect x="1343.26" y="388.50" width="198.25" height="4.60" fill="url(#t30)"/><rect x="1342.13" y="392.50" width="204.46" height="4.60" fill="url(#t31)"/><rect x="1341.01" y="396.50" width="210.66" height="4.60" fill="url(#t32)"/><rect x="1339.89" y="400.50" width="216.86" height="4.60" fill="url(#t33)"/><rect x="1338.77" y="404.50" width="223.06" height="4.60" fill="url(#t34)"/><rect x="1337.65" y="408.50" width="229.27" height="4.60" fill="url(#t35)"/><rect x="1336.53" y="412.50" width="235.47" height="4.60" fill="url(#t36)"/><rect x="1335.41" y="416.50" width="241.67" height="4.60" fill="url(#t37)"/><rect x="1334.29" y="420.50" width="247.87" height="4.60" fill="url(#t38)"/><rect x="1333.17" y="424.50" width="254.07" height="4.60" fill="url(#t39)"/><rect x="1332.05" y="428.50" width="260.28" height="4.60" fill="url(#t40)"/><rect x="1330.93" y="432.50" width="266.48" height="4.60" fill="url(#t41)"/><rect x="1329.80" y="436.50" width="272.68" height="4.60" fill="url(#t42)"/><rect x="1328.68" y="440.50" width="278.88" height="4.60" fill="url(#t43)"/><rect x="1327.56" y="444.50" width="285.09" height="4.60" fill="url(#t44)"/><rect x="1326.44" y="448.50" width="291.29" height="4.60" fill="url(#t45)"/><rect x="1325.32" y="452.50" width="297.49" height="4.60" fill="url(#t46)"/><rect x="1324.20" y="456.50" width="303.69" height="4.60" fill="url(#t47)"/><rect x="1323.08" y="460.50" width="309.89" height="4.60" fill="url(#t48)"/><rect x="1321.96" y="464.50" width="316.10" height="4.60" fill="url(#t49)"/><rect x="1320.84" y="468.50" width="322.30" height="4.60" fill="url(#t50)"/><rect x="1319.72" y="472.50" width="328.50" height="4.60" fill="url(#t51)"/><rect x="1318.60" y="476.50" width="334.70" height="4.60" fill="url(#t52)"/><rect x="1317.47" y="480.50" width="340.91" height="4.60" fill="url(#t53)"/><rect x="1316.35" y="484.50" width="347.11" height="4.60" fill="url(#t54)"/><rect x="1315.23" y="488.50" width="353.31" height="4.60" fill="url(#t55)"/><rect x="1314.11" y="492.50" width="359.51" height="4.60" fill="url(#t56)"/><rect x="1312.99" y="496.50" width="363.19" height="4.60" fill="url(#t57)"/><rect x="1311.87" y="500.50" width="361.17" height="4.60" fill="url(#t58)"/><rect x="1310.75" y="504.50" width="354.97" height="4.60" fill="url(#t59)"/><rect x="1309.63" y="508.50" width="348.77" height="4.60" fill="url(#t60)"/><rect x="1308.51" y="512.50" width="342.56" height="4.60" fill="url(#t61)"/><rect x="1307.39" y="516.50" width="336.36" height="4.60" fill="url(#t62)"/><rect x="1306.27" y="520.50" width="330.16" height="4.60" fill="url(#t63)"/><rect x="1305.15" y="524.50" width="323.96" height="4.60" fill="url(#t64)"/><rect x="1304.02" y="528.50" width="317.75" height="4.60" fill="url(#t65)"/><rect x="1302.90" y="532.50" width="311.55" height="4.60" fill="url(#t66)"/><rect x="1301.78" y="536.50" width="305.35" height="4.60" fill="url(#t67)"/><rect x="1300.66" y="540.50" width="299.15" height="4.60" fill="url(#t68)"/><rect x="1299.54" y="544.50" width="292.95" height="4.60" fill="url(#t69)"/><rect x="1298.42" y="548.50" width="286.74" height="4.60" fill="url(#t70)"/><rect x="1297.30" y="552.50" width="280.54" height="4.60" fill="url(#t71)"/><rect x="1296.18" y="556.50" width="274.34" height="4.60" fill="url(#t72)"/><rect x="1295.06" y="560.50" width="268.14" height="4.60" fill="url(#t73)"/><rect x="1293.94" y="564.50" width="261.93" height="4.60" fill="url(#t74)"/><rect x="1292.82" y="568.50" width="255.73" height="4.60" fill="url(#t75)"/><rect x="1291.69" y="572.50" width="249.53" height="4.60" fill="url(#t76)"/><rect x="1290.57" y="576.50" width="243.33" height="4.60" fill="url(#t77)"/><rect x="1289.45" y="580.50" width="237.13" height="4.60" fill="url(#t78)"/><rect x="1288.33" y="584.50" width="230.92" height="4.60" fill="url(#t79)"/><rect x="1287.21" y="588.50" width="224.72" height="4.60" fill="url(#t80)"/><rect x="1286.09" y="592.50" width="218.52" height="4.60" fill="url(#t81)"/><rect x="1284.97" y="596.50" width="212.32" height="4.60" fill="url(#t82)"/><rect x="1283.85" y="600.50" width="206.11" height="4.60" fill="url(#t83)"/><rect x="1282.73" y="604.50" width="199.91" height="4.60" fill="url(#t84)"/><rect x="1281.61" y="608.50" width="193.71" height="4.60" fill="url(#t85)"/><rect x="1280.49" y="612.50" width="187.51" height="4.60" fill="url(#t86)"/><rect x="1279.36" y="616.50" width="181.31" height="4.60" fill="url(#t87)"/><rect x="1278.24" y="620.50" width="175.10" height="4.60" fill="url(#t88)"/><rect x="1277.12" y="624.50" width="168.90" height="4.60" fill="url(#t89)"/><rect x="1276.00" y="628.50" width="162.70" height="4.60" fill="url(#t90)"/><rect x="1274.88" y="632.50" width="156.50" height="4.60" fill="url(#t91)"/><rect x="1273.76" y="636.50" width="150.29" height="4.60" fill="url(#t92)"/><rect x="1272.64" y="640.50" width="144.09" height="4.60" fill="url(#t93)"/><rect x="1271.52" y="644.50" width="137.89" height="4.60" fill="url(#t94)"/><rect x="1270.40" y="648.50" width="131.69" height="4.60" fill="url(#t95)"/><rect x="1269.28" y="652.50" width="125.48" height="4.60" fill="url(#t96)"/><rect x="1268.16" y="656.50" width="119.28" height="4.60" fill="url(#t97)"/><rect x="1267.04" y="660.50" width="113.08" height="4.60" fill="url(#t98)"/><rect x="1265.91" y="664.50" width="106.88" height="4.60" fill="url(#t99)"/><rect x="1264.79" y="668.50" width="100.68" height="4.60" fill="url(#t100)"/><rect x="1263.67" y="672.50" width="94.47" height="4.60" fill="url(#t101)"/><rect x="1262.55" y="676.50" width="88.27" height="4.60" fill="url(#t102)"/><rect x="1261.43" y="680.50" width="82.07" height="4.60" fill="url(#t103)"/><rect x="1260.31" y="684.50" width="75.87" height="4.60" fill="url(#t104)"/><rect x="1259.19" y="688.50" width="69.66" height="4.60" fill="url(#t105)"/><rect x="1258.07" y="692.50" width="63.46" height="4.60" fill="url(#t106)"/><rect x="1256.95" y="696.50" width="57.26" height="4.60" fill="url(#t107)"/><rect x="1255.83" y="700.50" width="51.06" height="4.60" fill="url(#t108)"/><rect x="1254.71" y="704.50" width="44.86" height="4.60" fill="url(#t109)"/><rect x="1253.58" y="708.50" width="38.65" height="4.60" fill="url(#t110)"/><rect x="1252.46" y="712.50" width="32.45" height="4.60" fill="url(#t111)"/><rect x="1251.34" y="716.50" width="26.25" height="4.60" fill="url(#t112)"/><rect x="1250.22" y="720.50" width="20.05" height="4.60" fill="url(#t113)"/><rect x="1249.10" y="724.50" width="13.84" height="4.60" fill="url(#t114)"/><rect x="1249.10" y="728.50" width="6.53" height="4.60" fill="url(#t115)"/></g>
<rect x="1124.2" y="64" width="1.6" height="717" fill="#a8a8a8"/>
<rect x="1845.2" y="64" width="1.6" height="717" fill="#a8a8a8"/>
<rect x="1124.2" y="64" width="722.6" height="2" fill="#a8a8a8"/>
<rect x="1124.2" y="779" width="722.6" height="2.2" fill="#a8a8a8"/>
<rect x="1118" y="780.4" width="7" height="1.6" fill="#d8d8d8"/>
<text x="1108.6" y="789.7" font-size="20" fill="#e2e2e2" stroke="#e2e2e2" stroke-width="0.35" textLength="9" lengthAdjust="spacingAndGlyphs">0</text>
<rect x="1122.2" y="781" width="1.6" height="7" fill="#d8d8d8"/>
<text x="1118.5" y="808.5" font-size="20" fill="#e2e2e2" stroke="#e2e2e2" stroke-width="0.35" textLength="9" lengthAdjust="spacingAndGlyphs">0</text>
<rect x="1118" y="695.24" width="7" height="1.6" fill="#d8d8d8"/>
<text x="1095" y="704.54" font-size="20" fill="#e2e2e2" stroke="#e2e2e2" stroke-width="0.35" textLength="22.6" lengthAdjust="spacingAndGlyphs">0,1</text>
<rect x="1208.2" y="781" width="1.6" height="7" fill="#d8d8d8"/>
<text x="1197.7" y="808.5" font-size="20" fill="#e2e2e2" stroke="#e2e2e2" stroke-width="0.35" textLength="22.6" lengthAdjust="spacingAndGlyphs">0,1</text>
<rect x="1118" y="610.08" width="7" height="1.6" fill="#d8d8d8"/>
<text x="1095" y="619.38" font-size="20" fill="#e2e2e2" stroke="#e2e2e2" stroke-width="0.35" textLength="22.6" lengthAdjust="spacingAndGlyphs">0,2</text>
<rect x="1294.2" y="781" width="1.6" height="7" fill="#d8d8d8"/>
<text x="1283.7" y="808.5" font-size="20" fill="#e2e2e2" stroke="#e2e2e2" stroke-width="0.35" textLength="22.6" lengthAdjust="spacingAndGlyphs">0,2</text>
<rect x="1118" y="524.92" width="7" height="1.6" fill="#d8d8d8"/>
<text x="1095" y="534.22" font-size="20" fill="#e2e2e2" stroke="#e2e2e2" stroke-width="0.35" textLength="22.6" lengthAdjust="spacingAndGlyphs">0,3</text>
<rect x="1380.2" y="781" width="1.6" height="7" fill="#d8d8d8"/>
<text x="1369.7" y="808.5" font-size="20" fill="#e2e2e2" stroke="#e2e2e2" stroke-width="0.35" textLength="22.6" lengthAdjust="spacingAndGlyphs">0,3</text>
<rect x="1118" y="439.76" width="7" height="1.6" fill="#d8d8d8"/>
<text x="1095" y="449.06" font-size="20" fill="#e2e2e2" stroke="#e2e2e2" stroke-width="0.35" textLength="22.6" lengthAdjust="spacingAndGlyphs">0,4</text>
<rect x="1466.2" y="781" width="1.6" height="7" fill="#d8d8d8"/>
<text x="1455.7" y="808.5" font-size="20" fill="#e2e2e2" stroke="#e2e2e2" stroke-width="0.35" textLength="22.6" lengthAdjust="spacingAndGlyphs">0,4</text>
<rect x="1118" y="354.6" width="7" height="1.6" fill="#d8d8d8"/>
<text x="1095" y="363.9" font-size="20" fill="#e2e2e2" stroke="#e2e2e2" stroke-width="0.35" textLength="22.6" lengthAdjust="spacingAndGlyphs">0,5</text>
<rect x="1552.2" y="781" width="1.6" height="7" fill="#d8d8d8"/>
<text x="1541.7" y="808.5" font-size="20" fill="#e2e2e2" stroke="#e2e2e2" stroke-width="0.35" textLength="22.6" lengthAdjust="spacingAndGlyphs">0,5</text>
<rect x="1118" y="269.44" width="7" height="1.6" fill="#d8d8d8"/>
<text x="1095" y="278.74" font-size="20" fill="#e2e2e2" stroke="#e2e2e2" stroke-width="0.35" textLength="22.6" lengthAdjust="spacingAndGlyphs">0,6</text>
<rect x="1638.2" y="781" width="1.6" height="7" fill="#d8d8d8"/>
<text x="1627.7" y="808.5" font-size="20" fill="#e2e2e2" stroke="#e2e2e2" stroke-width="0.35" textLength="22.6" lengthAdjust="spacingAndGlyphs">0,6</text>
<rect x="1118" y="184.28" width="7" height="1.6" fill="#d8d8d8"/>
<text x="1095" y="193.58" font-size="20" fill="#e2e2e2" stroke="#e2e2e2" stroke-width="0.35" textLength="22.6" lengthAdjust="spacingAndGlyphs">0,7</text>
<rect x="1724.2" y="781" width="1.6" height="7" fill="#d8d8d8"/>
<text x="1713.7" y="808.5" font-size="20" fill="#e2e2e2" stroke="#e2e2e2" stroke-width="0.35" textLength="22.6" lengthAdjust="spacingAndGlyphs">0,7</text>
<rect x="1118" y="99.12" width="7" height="1.6" fill="#d8d8d8"/>
<text x="1095" y="108.42" font-size="20" fill="#e2e2e2" stroke="#e2e2e2" stroke-width="0.35" textLength="22.6" lengthAdjust="spacingAndGlyphs">0,8</text>
<rect x="1810.2" y="781" width="1.6" height="7" fill="#d8d8d8"/>
<text x="1799.7" y="808.5" font-size="20" fill="#e2e2e2" stroke="#e2e2e2" stroke-width="0.35" textLength="22.6" lengthAdjust="spacingAndGlyphs">0,8</text>
<rect x="1385.80" y="490.20" width="14.40" height="18.80" fill="none" stroke="#111111" stroke-width="2.1"/>
<rect x="1309.80" y="490.20" width="14.40" height="18.80" fill="none" stroke="#ffffff" stroke-width="2.1"/>
<rect x="1324.80" y="490.20" width="14.40" height="18.80" fill="none" stroke="#ffffff" stroke-width="2.1"/>
<rect x="1339.80" y="490.20" width="14.40" height="18.80" fill="none" stroke="#ffffff" stroke-width="2.1"/>
<rect x="1355.30" y="490.20" width="14.40" height="18.80" fill="none" stroke="#ffffff" stroke-width="2.1"/>
<rect x="1370.40" y="490.20" width="14.40" height="18.80" fill="none" stroke="#ffffff" stroke-width="2.1"/>
<rect x="1373.80" y="259.10" width="14.40" height="18.80" fill="none" stroke="#ffffff" stroke-width="2.1"/>
<rect x="1376.80" y="309.20" width="14.40" height="18.80" fill="none" stroke="#ffffff" stroke-width="2.1"/>
<rect x="1378.10" y="353.60" width="14.40" height="18.80" fill="none" stroke="#ffffff" stroke-width="2.1"/>
<rect x="1381.20" y="398.10" width="14.40" height="18.80" fill="none" stroke="#ffffff" stroke-width="2.1"/>
<rect x="1382.80" y="444.10" width="14.40" height="18.80" fill="none" stroke="#ffffff" stroke-width="2.1"/>
<rect x="1476.80" y="340.00" width="14.40" height="18.80" fill="none" stroke="#ffffff" stroke-width="2.1"/>
<rect x="1457.30" y="371.00" width="14.40" height="18.80" fill="none" stroke="#ffffff" stroke-width="2.1"/>
<rect x="1440.30" y="398.10" width="14.40" height="18.80" fill="none" stroke="#ffffff" stroke-width="2.1"/>
<rect x="1422.30" y="428.40" width="14.40" height="18.80" fill="none" stroke="#ffffff" stroke-width="2.1"/>
<rect x="1404.40" y="459.10" width="14.40" height="18.80" fill="none" stroke="#ffffff" stroke-width="2.1"/>
<rect x="1666.20" y="488.10" width="14.40" height="18.80" fill="none" stroke="#ffffff" stroke-width="2.1"/>
<rect x="1604.30" y="488.10" width="14.40" height="18.80" fill="none" stroke="#ffffff" stroke-width="2.1"/>
<rect x="1549.30" y="488.10" width="14.40" height="18.80" fill="none" stroke="#ffffff" stroke-width="2.1"/>
<rect x="1498.30" y="488.10" width="14.40" height="18.80" fill="none" stroke="#ffffff" stroke-width="2.1"/>
<rect x="1440.30" y="490.00" width="14.40" height="18.80" fill="none" stroke="#ffffff" stroke-width="2.1"/>
<rect x="1392.20" y="638.10" width="14.40" height="18.80" fill="none" stroke="#ffffff" stroke-width="2.1"/>
<rect x="1390.00" y="607.30" width="14.40" height="18.80" fill="none" stroke="#ffffff" stroke-width="2.1"/>
<rect x="1388.80" y="576.60" width="14.40" height="18.80" fill="none" stroke="#ffffff" stroke-width="2.1"/>
<rect x="1388.80" y="550.10" width="14.40" height="18.80" fill="none" stroke="#ffffff" stroke-width="2.1"/>
<rect x="1387.30" y="519.30" width="14.40" height="18.80" fill="none" stroke="#ffffff" stroke-width="2.1"/>
<rect x="1244.80" y="718.90" width="14.40" height="18.80" fill="none" stroke="#ffffff" stroke-width="2.1"/>
<rect x="1275.30" y="669.10" width="14.40" height="18.80" fill="none" stroke="#ffffff" stroke-width="2.1"/>
<rect x="1302.20" y="625.00" width="14.40" height="18.80" fill="none" stroke="#ffffff" stroke-width="2.1"/>
<rect x="1329.80" y="580.20" width="14.40" height="18.80" fill="none" stroke="#ffffff" stroke-width="2.1"/>
<rect x="1357.20" y="535.80" width="14.40" height="18.80" fill="none" stroke="#ffffff" stroke-width="2.1"/>
<ellipse cx="1317.60" cy="508.80" rx="4.10" ry="6.00" fill="#10b0b0" stroke="#000" stroke-width="1.5"/>
<ellipse cx="1329.50" cy="509.00" rx="4.10" ry="6.00" fill="#40a8a8" stroke="#000" stroke-width="1.5"/>
<ellipse cx="1342.90" cy="506.90" rx="4.10" ry="6.00" fill="#60a0a0" stroke="#000" stroke-width="1.5"/>
<ellipse cx="1356.60" cy="506.90" rx="4.10" ry="6.00" fill="#80a0a0" stroke="#000" stroke-width="1.5"/>
<ellipse cx="1370.40" cy="505.60" rx="4.10" ry="6.00" fill="#a0a8a8" stroke="#000" stroke-width="1.5"/>
<ellipse cx="1382.60" cy="508.80" rx="4.10" ry="6.00" fill="#ffffff" stroke="#000" stroke-width="1.5"/>
<ellipse cx="1396.00" cy="240.00" rx="4.10" ry="6.00" fill="#00c000" stroke="#000" stroke-width="1.5"/>
<ellipse cx="1393.00" cy="295.70" rx="4.10" ry="6.00" fill="#50bc50" stroke="#000" stroke-width="1.5"/>
<ellipse cx="1391.50" cy="347.40" rx="4.10" ry="6.00" fill="#60b460" stroke="#000" stroke-width="1.5"/>
<ellipse cx="1390.00" cy="403.50" rx="4.10" ry="6.00" fill="#70a870" stroke="#000" stroke-width="1.5"/>
<ellipse cx="1387.00" cy="453.30" rx="4.10" ry="6.00" fill="#90b090" stroke="#000" stroke-width="1.5"/>
<ellipse cx="1493.00" cy="322.70" rx="4.10" ry="6.00" fill="#c8c000" stroke="#000" stroke-width="1.5"/>
<ellipse cx="1468.90" cy="360.70" rx="4.10" ry="6.00" fill="#c0c050" stroke="#000" stroke-width="1.5"/>
<ellipse cx="1449.30" cy="393.40" rx="4.10" ry="6.00" fill="#b8b870" stroke="#000" stroke-width="1.5"/>
<ellipse cx="1426.30" cy="431.80" rx="4.10" ry="6.00" fill="#b8b888" stroke="#000" stroke-width="1.5"/>
<ellipse cx="1405.40" cy="468.50" rx="4.10" ry="6.00" fill="#b0b098" stroke="#000" stroke-width="1.5"/>
<ellipse cx="1665.90" cy="472.40" rx="4.10" ry="6.00" fill="#c00000" stroke="#000" stroke-width="1.5"/>
<ellipse cx="1608.30" cy="480.20" rx="4.10" ry="6.00" fill="#c04848" stroke="#000" stroke-width="1.5"/>
<ellipse cx="1549.40" cy="485.70" rx="4.10" ry="6.00" fill="#b85656" stroke="#000" stroke-width="1.5"/>
<ellipse cx="1499.40" cy="489.70" rx="4.10" ry="6.00" fill="#bc7070" stroke="#000" stroke-width="1.5"/>
<ellipse cx="1437.00" cy="497.40" rx="4.10" ry="6.00" fill="#b87c7c" stroke="#000" stroke-width="1.5"/>
<ellipse cx="1376.60" cy="649.40" rx="4.10" ry="6.00" fill="#c010b8" stroke="#000" stroke-width="1.5"/>
<ellipse cx="1379.50" cy="620.50" rx="4.10" ry="6.00" fill="#c050b0" stroke="#000" stroke-width="1.5"/>
<ellipse cx="1380.90" cy="591.60" rx="4.10" ry="6.00" fill="#c078c0" stroke="#000" stroke-width="1.5"/>
<ellipse cx="1382.10" cy="565.20" rx="4.10" ry="6.00" fill="#c090b8" stroke="#000" stroke-width="1.5"/>
<ellipse cx="1382.60" cy="536.00" rx="4.10" ry="6.00" fill="#c0a0b8" stroke="#000" stroke-width="1.5"/>
<ellipse cx="1256.40" cy="720.40" rx="4.10" ry="6.00" fill="#0c0cd0" stroke="#000" stroke-width="1.5"/>
<ellipse cx="1279.60" cy="681.90" rx="4.10" ry="6.00" fill="#5050b8" stroke="#000" stroke-width="1.5"/>
<ellipse cx="1301.70" cy="643.50" rx="4.10" ry="6.00" fill="#6870b0" stroke="#000" stroke-width="1.5"/>
<ellipse cx="1329.40" cy="597.50" rx="4.10" ry="6.00" fill="#8088b0" stroke="#000" stroke-width="1.5"/>
<ellipse cx="1355.60" cy="553.50" rx="4.10" ry="6.00" fill="#9090b0" stroke="#000" stroke-width="1.5"/>
<rect x="1637.5" y="63" width="212.5" height="267" fill="#333333"/>
<defs><linearGradient id="i0" gradientUnits="userSpaceOnUse" x1="1641.50" y1="0" x2="1846.30" y2="0"><stop offset="0.0000" stop-color="#5a9900"/><stop offset="0.8116" stop-color="#999600"/><stop offset="1.0000" stop-color="#998700"/></linearGradient><linearGradient id="i1" gradientUnits="userSpaceOnUse" x1="1641.50" y1="0" x2="1846.30" y2="0"><stop offset="0.0000" stop-color="#5a9900"/><stop offset="0.8116" stop-color="#999500"/><stop offset="1.0000" stop-color="#998600"/></linearGradient><linearGradient id="i2" gradientUnits="userSpaceOnUse" x1="1641.50" y1="0" x2="1846.30" y2="0"><stop offset="0.0000" stop-color="#5b9900"/><stop offset="0.7971" stop-color="#999600"/><stop offset="1.0000" stop-color="#998600"/></linearGradient><linearGradient id="i3" gradientUnits="userSpaceOnUse" x1="1641.50" y1="0" x2="1846.30" y2="0"><stop offset="0.0000" stop-color="#5b9900"/><stop offset="0.7826" stop-color="#999600"/><stop offset="1.0000" stop-color="#998500"/></linearGradient><linearGradient id="i4" gradientUnits="userSpaceOnUse" x1="1641.50" y1="0" x2="1846.30" y2="0"><stop offset="0.0000" stop-color="#5c9900"/><stop offset="0.7826" stop-color="#999500"/><stop offset="1.0000" stop-color="#998400"/></linearGradient><linearGradient id="i5" gradientUnits="userSpaceOnUse" x1="1641.50" y1="0" x2="1846.30" y2="0"><stop offset="0.0000" stop-color="#5c9900"/><stop offset="0.7681" stop-color="#999600"/><stop offset="1.0000" stop-color="#998300"/></linearGradient><linearGradient id="i6" gradientUnits="userSpaceOnUse" x1="1641.50" y1="0" x2="1846.30" y2="0"><stop offset="0.0000" stop-color="#5d9900"/><stop offset="0.7536" stop-color="#999600"/><stop offset="1.0000" stop-color="#998300"/></linearGradient><linearGradient id="i7" gradientUnits="userSpaceOnUse" x1="1641.50" y1="0" x2="1846.30" y2="0"><stop offset="0.0000" stop-color="#5e9900"/><stop offset="0.7536" stop-color="#999500"/><stop offset="1.0000" stop-color="#998200"/></linearGradient><linearGradient id="i8" gradientUnits="userSpaceOnUse" x1="1641.50" y1="0" x2="1846.30" y2="0"><stop offset="0.0000" stop-color="#5e9901"/><stop offset="0.7391" stop-color="#999600"/><stop offset="1.0000" stop-color="#998100"/></linearGradient><linearGradient id="i9" gradientUnits="userSpaceOnUse" x1="1641.50" y1="0" x2="1846.30" y2="0"><stop offset="0.0000" stop-color="#5f9901"/><stop offset="0.7246" stop-color="#999600"/><stop offset="1.0000" stop-color="#998100"/></linearGradient><linearGradient id="i10" gradientUnits="userSpaceOnUse" x1="1641.50" y1="0" x2="1846.30" y2="0"><stop offset="0.0000" stop-color="#5f9901"/><stop offset="0.7246" stop-color="#999500"/><stop offset="1.0000" stop-color="#998000"/></linearGradient><linearGradient id="i11" gradientUnits="userSpaceOnUse" x1="1641.50" y1="0" x2="1846.30" y2="0"><stop offset="0.0000" stop-color="#609902"/><stop offset="0.7101" stop-color="#999600"/><stop offset="1.0000" stop-color="#997f00"/></linearGradient><linearGradient id="i12" gradientUnits="userSpaceOnUse" x1="1641.50" y1="0" x2="1846.30" y2="0"><stop offset="0.0000" stop-color="#619902"/><stop offset="0.6957" stop-color="#999600"/><stop offset="1.0000" stop-color="#997f00"/></linearGradient><linearGradient id="i13" gradientUnits="userSpaceOnUse" x1="1641.50" y1="0" x2="1846.30" y2="0"><stop offset="0.0000" stop-color="#619902"/><stop offset="0.6957" stop-color="#999600"/><stop offset="1.0000" stop-color="#997e00"/></linearGradient><linearGradient id="i14" gradientUnits="userSpaceOnUse" x1="1641.50" y1="0" x2="1846.30" y2="0"><stop offset="0.0000" stop-color="#629903"/><stop offset="0.6812" stop-color="#999600"/><stop offset="1.0000" stop-color="#997d00"/></linearGradient><linearGradient id="i15" gradientUnits="userSpaceOnUse" x1="1641.50" y1="0" x2="1846.30" y2="0"><stop offset="0.0000" stop-color="#629903"/><stop offset="0.6667" stop-color="#999600"/><stop offset="1.0000" stop-color="#997c00"/></linearGradient><linearGradient id="i16" gradientUnits="userSpaceOnUse" x1="1641.50" y1="0" x2="1846.30" y2="0"><stop offset="0.0000" stop-color="#639904"/><stop offset="0.6667" stop-color="#999600"/><stop offset="1.0000" stop-color="#997c00"/></linearGradient><linearGradient id="i17" gradientUnits="userSpaceOnUse" x1="1641.50" y1="0" x2="1846.30" y2="0"><stop offset="0.0000" stop-color="#649904"/><stop offset="0.6522" stop-color="#999600"/><stop offset="1.0000" stop-color="#997b00"/></linearGradient><linearGradient id="i18" gradientUnits="userSpaceOnUse" x1="1641.50" y1="0" x2="1846.30" y2="0"><stop offset="0.0000" stop-color="#649904"/><stop offset="0.6377" stop-color="#999600"/><stop offset="1.0000" stop-color="#997a00"/></linearGradient><linearGradient id="i19" gradientUnits="userSpaceOnUse" x1="1641.50" y1="0" x2="1846.30" y2="0"><stop offset="0.0000" stop-color="#659905"/><stop offset="0.6377" stop-color="#999600"/><stop offset="1.0000" stop-color="#997a00"/></linearGradient><linearGradient id="i20" gradientUnits="userSpaceOnUse" x1="1641.50" y1="0" x2="1846.30" y2="0"><stop offset="0.0000" stop-color="#669905"/><stop offset="0.6232" stop-color="#999600"/><stop offset="1.0000" stop-color="#997900"/></linearGradient><linearGradient id="i21" gradientUnits="userSpaceOnUse" x1="1641.50" y1="0" x2="1846.30" y2="0"><stop offset="0.0000" stop-color="#669905"/><stop offset="0.6087" stop-color="#999700"/><stop offset="1.0000" stop-color="#997800"/></linearGradient><linearGradient id="i22" gradientUnits="userSpaceOnUse" x1="1641.50" y1="0" x2="1846.30" y2="0"><stop offset="0.0000" stop-color="#679906"/><stop offset="0.6087" stop-color="#999600"/><stop offset="1.0000" stop-color="#997800"/></linearGradient><linearGradient id="i23" gradientUnits="userSpaceOnUse" x1="1641.50" y1="0" x2="1846.30" y2="0"><stop offset="0.0000" stop-color="#679906"/><stop offset="0.5942" stop-color="#999600"/><stop offset="1.0000" stop-color="#997700"/></linearGradient><linearGradient id="i24" gradientUnits="userSpaceOnUse" x1="1641.50" y1="0" x2="1846.30" y2="0"><stop offset="0.0000" stop-color="#689907"/><stop offset="0.5942" stop-color="#999500"/><stop offset="1.0000" stop-color="#997600"/></linearGradient><linearGradient id="i25" gradientUnits="userSpaceOnUse" x1="1641.50" y1="0" x2="1846.30" y2="0"><stop offset="0.0000" stop-color="#699907"/><stop offset="0.5797" stop-color="#999600"/><stop offset="1.0000" stop-color="#997600"/></linearGradient><linearGradient id="i26" gradientUnits="userSpaceOnUse" x1="1641.50" y1="0" x2="1846.30" y2="0"><stop offset="0.0000" stop-color="#699907"/><stop offset="0.5652" stop-color="#999600"/><stop offset="1.0000" stop-color="#997500"/></linearGradient><linearGradient id="i27" gradientUnits="userSpaceOnUse" x1="1641.50" y1="0" x2="1846.30" y2="0"><stop offset="0.0000" stop-color="#6a9908"/><stop offset="0.5652" stop-color="#999500"/><stop offset="1.0000" stop-color="#997400"/></linearGradient><linearGradient id="i28" gradientUnits="userSpaceOnUse" x1="1641.50" y1="0" x2="1846.30" y2="0"><stop offset="0.0000" stop-color="#6b9908"/><stop offset="0.5507" stop-color="#999600"/><stop offset="1.0000" stop-color="#997400"/></linearGradient><linearGradient id="i29" gradientUnits="userSpaceOnUse" x1="1641.50" y1="0" x2="1846.30" y2="0"><stop offset="0.0000" stop-color="#6b9908"/><stop offset="0.5362" stop-color="#999600"/><stop offset="1.0000" stop-color="#997300"/></linearGradient><linearGradient id="i30" gradientUnits="userSpaceOnUse" x1="1641.50" y1="0" x2="1846.30" y2="0"><stop offset="0.0000" stop-color="#6c9909"/><stop offset="0.5362" stop-color="#999500"/><stop offset="1.0000" stop-color="#997200"/></linearGradient><linearGradient id="i31" gradientUnits="userSpaceOnUse" x1="1641.50" y1="0" x2="1846.30" y2="0"><stop offset="0.0000" stop-color="#6d9909"/><stop offset="0.5217" stop-color="#999600"/><stop offset="1.0000" stop-color="#997200"/></linearGradient><linearGradient id="i32" gradientUnits="userSpaceOnUse" x1="1641.50" y1="0" x2="1846.30" y2="0"><stop offset="0.0000" stop-color="#6e990a"/><stop offset="0.5072" stop-color="#999600"/><stop offset="1.0000" stop-color="#997100"/></linearGradient><linearGradient id="i33" gradientUnits="userSpaceOnUse" x1="1641.50" y1="0" x2="1846.30" y2="0"><stop offset="0.0000" stop-color="#6e990a"/><stop offset="0.5072" stop-color="#999500"/><stop offset="1.0000" stop-color="#997000"/></linearGradient><linearGradient id="i34" gradientUnits="userSpaceOnUse" x1="1641.50" y1="0" x2="1846.30" y2="0"><stop offset="0.0000" stop-color="#6f990a"/><stop offset="0.4928" stop-color="#999601"/><stop offset="1.0000" stop-color="#997000"/></linearGradient><linearGradient id="i35" gradientUnits="userSpaceOnUse" x1="1641.50" y1="0" x2="1846.30" y2="0"><stop offset="0.0000" stop-color="#70990b"/><stop offset="0.4783" stop-color="#999602"/><stop offset="1.0000" stop-color="#996f00"/></linearGradient><linearGradient id="i36" gradientUnits="userSpaceOnUse" x1="1641.50" y1="0" x2="1846.30" y2="0"><stop offset="0.0000" stop-color="#70990b"/><stop offset="0.4783" stop-color="#999602"/><stop offset="1.0000" stop-color="#996e00"/></linearGradient><linearGradient id="i37" gradientUnits="userSpaceOnUse" x1="1641.50" y1="0" x2="1846.30" y2="0"><stop offset="0.0000" stop-color="#71990c"/><stop offset="0.4638" stop-color="#999603"/><stop offset="1.0000" stop-color="#996e00"/></linearGradient><linearGradient id="i38" gradientUnits="userSpaceOnUse" x1="1641.50" y1="0" x2="1846.30" y2="0"><stop offset="0.0000" stop-color="#72990c"/><stop offset="0.4493" stop-color="#999604"/><stop offset="1.0000" stop-color="#996d00"/></linearGradient><linearGradient id="i39" gradientUnits="userSpaceOnUse" x1="1641.50" y1="0" x2="1846.30" y2="0"><stop offset="0.0000" stop-color="#73990d"/><stop offset="0.4493" stop-color="#999604"/><stop offset="1.0000" stop-color="#996d00"/></linearGradient><linearGradient id="i40" gradientUnits="userSpaceOnUse" x1="1641.50" y1="0" x2="1846.30" y2="0"><stop offset="0.0000" stop-color="#73990d"/><stop offset="0.4348" stop-color="#999605"/><stop offset="1.0000" stop-color="#996c00"/></linearGradient><linearGradient id="i41" gradientUnits="userSpaceOnUse" x1="1641.50" y1="0" x2="1846.30" y2="0"><stop offset="0.0000" stop-color="#74990d"/><stop offset="0.4348" stop-color="#999505"/><stop offset="1.0000" stop-color="#996b00"/></linearGradient><linearGradient id="i42" gradientUnits="userSpaceOnUse" x1="1641.50" y1="0" x2="1846.30" y2="0"><stop offset="0.0000" stop-color="#75990e"/><stop offset="0.4203" stop-color="#999606"/><stop offset="1.0000" stop-color="#996b00"/></linearGradient><linearGradient id="i43" gradientUnits="userSpaceOnUse" x1="1641.50" y1="0" x2="1846.30" y2="0"><stop offset="0.0000" stop-color="#76990e"/><stop offset="0.4058" stop-color="#999606"/><stop offset="1.0000" stop-color="#996a00"/></linearGradient><linearGradient id="i44" gradientUnits="userSpaceOnUse" x1="1641.50" y1="0" x2="1846.30" y2="0"><stop offset="0.0000" stop-color="#76990f"/><stop offset="0.4058" stop-color="#999507"/><stop offset="1.0000" stop-color="#996900"/></linearGradient><linearGradient id="i45" gradientUnits="userSpaceOnUse" x1="1641.50" y1="0" x2="1846.30" y2="0"><stop offset="0.0000" stop-color="#77990f"/><stop offset="0.3913" stop-color="#999608"/><stop offset="1.0000" stop-color="#996900"/></linearGradient><linearGradient id="i46" gradientUnits="userSpaceOnUse" x1="1641.50" y1="0" x2="1846.30" y2="0"><stop offset="0.0000" stop-color="#789910"/><stop offset="0.3768" stop-color="#999608"/><stop offset="1.0000" stop-color="#996800"/></linearGradient><linearGradient id="i47" gradientUnits="userSpaceOnUse" x1="1641.50" y1="0" x2="1846.30" y2="0"><stop offset="0.0000" stop-color="#799910"/><stop offset="0.3768" stop-color="#999509"/><stop offset="1.0000" stop-color="#996800"/></linearGradient><linearGradient id="i48" gradientUnits="userSpaceOnUse" x1="1641.50" y1="0" x2="1846.30" y2="0"><stop offset="0.0000" stop-color="#799911"/><stop offset="0.3623" stop-color="#99960a"/><stop offset="1.0000" stop-color="#996700"/></linearGradient><linearGradient id="i49" gradientUnits="userSpaceOnUse" x1="1641.50" y1="0" x2="1846.30" y2="0"><stop offset="0.0000" stop-color="#7a9911"/><stop offset="0.3478" stop-color="#99960a"/><stop offset="1.0000" stop-color="#996600"/></linearGradient><linearGradient id="i50" gradientUnits="userSpaceOnUse" x1="1641.50" y1="0" x2="1846.30" y2="0"><stop offset="0.0000" stop-color="#7b9912"/><stop offset="0.3478" stop-color="#99950b"/><stop offset="1.0000" stop-color="#996600"/></linearGradient><linearGradient id="i51" gradientUnits="userSpaceOnUse" x1="1641.50" y1="0" x2="1846.30" y2="0"><stop offset="0.0000" stop-color="#7c9912"/><stop offset="0.3333" stop-color="#99960b"/><stop offset="0.9855" stop-color="#996600"/><stop offset="1.0000" stop-color="#996500"/></linearGradient><linearGradient id="i52" gradientUnits="userSpaceOnUse" x1="1641.50" y1="0" x2="1846.30" y2="0"><stop offset="0.0000" stop-color="#7d9912"/><stop offset="0.3188" stop-color="#99960c"/><stop offset="0.9710" stop-color="#996600"/><stop offset="1.0000" stop-color="#996400"/></linearGradient><linearGradient id="i53" gradientUnits="userSpaceOnUse" x1="1641.50" y1="0" x2="1846.30" y2="0"><stop offset="0.0000" stop-color="#7d9913"/><stop offset="0.3188" stop-color="#99950d"/><stop offset="0.9710" stop-color="#996500"/><stop offset="1.0000" stop-color="#996400"/></linearGradient><linearGradient id="i54" gradientUnits="userSpaceOnUse" x1="1641.50" y1="0" x2="1846.30" y2="0"><stop offset="0.0000" stop-color="#7e9913"/><stop offset="0.3043" stop-color="#99960d"/><stop offset="0.9565" stop-color="#996600"/><stop offset="1.0000" stop-color="#996300"/></linearGradient><linearGradient id="i55" gradientUnits="userSpaceOnUse" x1="1641.50" y1="0" x2="1846.30" y2="0"><stop offset="0.0000" stop-color="#7f9914"/><stop offset="0.3043" stop-color="#99950e"/><stop offset="0.9565" stop-color="#996500"/><stop offset="1.0000" stop-color="#996300"/></linearGradient><linearGradient id="i56" gradientUnits="userSpaceOnUse" x1="1641.50" y1="0" x2="1846.30" y2="0"><stop offset="0.0000" stop-color="#809914"/><stop offset="0.2899" stop-color="#99950f"/><stop offset="0.9275" stop-color="#996601"/><stop offset="1.0000" stop-color="#996200"/></linearGradient><linearGradient id="i57" gradientUnits="userSpaceOnUse" x1="1641.50" y1="0" x2="1846.30" y2="0"><stop offset="0.0000" stop-color="#819915"/><stop offset="0.2754" stop-color="#99960f"/><stop offset="0.9130" stop-color="#996601"/><stop offset="1.0000" stop-color="#996100"/></linearGradient><linearGradient id="i58" gradientUnits="userSpaceOnUse" x1="1641.50" y1="0" x2="1846.30" y2="0"><stop offset="0.0000" stop-color="#819915"/><stop offset="0.2754" stop-color="#999510"/><stop offset="0.9130" stop-color="#996602"/><stop offset="1.0000" stop-color="#996100"/></linearGradient><linearGradient id="i59" gradientUnits="userSpaceOnUse" x1="1641.50" y1="0" x2="1846.30" y2="0"><stop offset="0.0000" stop-color="#829916"/><stop offset="0.2609" stop-color="#999511"/><stop offset="0.8986" stop-color="#996602"/><stop offset="1.0000" stop-color="#996001"/></linearGradient><linearGradient id="i60" gradientUnits="userSpaceOnUse" x1="1641.50" y1="0" x2="1846.30" y2="0"><stop offset="0.0000" stop-color="#839916"/><stop offset="0.2464" stop-color="#999611"/><stop offset="0.8841" stop-color="#996603"/><stop offset="1.0000" stop-color="#996001"/></linearGradient><linearGradient id="i61" gradientUnits="userSpaceOnUse" x1="1641.50" y1="0" x2="1846.30" y2="0"><stop offset="0.0000" stop-color="#849917"/><stop offset="0.2464" stop-color="#999512"/><stop offset="0.8841" stop-color="#996503"/><stop offset="1.0000" stop-color="#995f01"/></linearGradient><linearGradient id="i62" gradientUnits="userSpaceOnUse" x1="1641.50" y1="0" x2="1846.30" y2="0"><stop offset="0.0000" stop-color="#859917"/><stop offset="0.2319" stop-color="#999613"/><stop offset="0.8696" stop-color="#996504"/><stop offset="1.0000" stop-color="#995f01"/></linearGradient><linearGradient id="i63" gradientUnits="userSpaceOnUse" x1="1641.50" y1="0" x2="1846.30" y2="0"><stop offset="0.0000" stop-color="#869918"/><stop offset="0.2174" stop-color="#999613"/><stop offset="0.8406" stop-color="#996704"/><stop offset="1.0000" stop-color="#995e02"/></linearGradient><linearGradient id="i64" gradientUnits="userSpaceOnUse" x1="1641.50" y1="0" x2="1846.30" y2="0"><stop offset="0.0000" stop-color="#879918"/><stop offset="0.2174" stop-color="#999514"/><stop offset="0.8551" stop-color="#996504"/><stop offset="1.0000" stop-color="#995d02"/></linearGradient><linearGradient id="j0" gradientUnits="userSpaceOnUse" x1="1641.50" y1="0" x2="1846.30" y2="0"><stop offset="0.0000" stop-color="#95ff00"/><stop offset="0.7971" stop-color="#fffc00"/><stop offset="1.0000" stop-color="#ffe100"/></linearGradient><linearGradient id="j1" gradientUnits="userSpaceOnUse" x1="1641.50" y1="0" x2="1846.30" y2="0"><stop offset="0.0000" stop-color="#96ff00"/><stop offset="0.7826" stop-color="#fffd00"/><stop offset="1.0000" stop-color="#ffe000"/></linearGradient><linearGradient id="j2" gradientUnits="userSpaceOnUse" x1="1641.50" y1="0" x2="1846.30" y2="0"><stop offset="0.0000" stop-color="#97ff00"/><stop offset="0.7826" stop-color="#fffc00"/><stop offset="1.0000" stop-color="#ffdf00"/></linearGradient><linearGradient id="j3" gradientUnits="userSpaceOnUse" x1="1641.50" y1="0" x2="1846.30" y2="0"><stop offset="0.0000" stop-color="#98ff00"/><stop offset="0.7681" stop-color="#fffc00"/><stop offset="1.0000" stop-color="#ffde00"/></linearGradient><linearGradient id="j4" gradientUnits="userSpaceOnUse" x1="1641.50" y1="0" x2="1846.30" y2="0"><stop offset="0.0000" stop-color="#99ff00"/><stop offset="0.7536" stop-color="#fffd00"/><stop offset="1.0000" stop-color="#ffdc00"/></linearGradient><linearGradient id="j5" gradientUnits="userSpaceOnUse" x1="1641.50" y1="0" x2="1846.30" y2="0"><stop offset="0.0000" stop-color="#9aff00"/><stop offset="0.7536" stop-color="#fffc00"/><stop offset="1.0000" stop-color="#ffdb00"/></linearGradient><linearGradient id="j6" gradientUnits="userSpaceOnUse" x1="1641.50" y1="0" x2="1846.30" y2="0"><stop offset="0.0000" stop-color="#9bff00"/><stop offset="0.7391" stop-color="#fffd00"/><stop offset="1.0000" stop-color="#ffda00"/></linearGradient><linearGradient id="j7" gradientUnits="userSpaceOnUse" x1="1641.50" y1="0" x2="1846.30" y2="0"><stop offset="0.0000" stop-color="#9cff01"/><stop offset="0.7246" stop-color="#fffd00"/><stop offset="1.0000" stop-color="#ffd900"/></linearGradient><linearGradient id="j8" gradientUnits="userSpaceOnUse" x1="1641.50" y1="0" x2="1846.30" y2="0"><stop offset="0.0000" stop-color="#9dff01"/><stop offset="0.7246" stop-color="#fffc00"/><stop offset="1.0000" stop-color="#ffd800"/></linearGradient><linearGradient id="j9" gradientUnits="userSpaceOnUse" x1="1641.50" y1="0" x2="1846.30" y2="0"><stop offset="0.0000" stop-color="#9eff02"/><stop offset="0.7101" stop-color="#fffd00"/><stop offset="1.0000" stop-color="#ffd600"/></linearGradient><linearGradient id="j10" gradientUnits="userSpaceOnUse" x1="1641.50" y1="0" x2="1846.30" y2="0"><stop offset="0.0000" stop-color="#9fff02"/><stop offset="0.6957" stop-color="#fffd00"/><stop offset="1.0000" stop-color="#ffd500"/></linearGradient><linearGradient id="j11" gradientUnits="userSpaceOnUse" x1="1641.50" y1="0" x2="1846.30" y2="0"><stop offset="0.0000" stop-color="#a0ff03"/><stop offset="0.6957" stop-color="#fffc00"/><stop offset="1.0000" stop-color="#ffd400"/></linearGradient><linearGradient id="j12" gradientUnits="userSpaceOnUse" x1="1641.50" y1="0" x2="1846.30" y2="0"><stop offset="0.0000" stop-color="#a1ff03"/><stop offset="0.6812" stop-color="#fffd00"/><stop offset="1.0000" stop-color="#ffd300"/></linearGradient><linearGradient id="j13" gradientUnits="userSpaceOnUse" x1="1641.50" y1="0" x2="1846.30" y2="0"><stop offset="0.0000" stop-color="#a2ff04"/><stop offset="0.6812" stop-color="#fffb00"/><stop offset="1.0000" stop-color="#ffd200"/></linearGradient><linearGradient id="j14" gradientUnits="userSpaceOnUse" x1="1641.50" y1="0" x2="1846.30" y2="0"><stop offset="0.0000" stop-color="#a3ff05"/><stop offset="0.6377" stop-color="#fdff00"/><stop offset="1.0000" stop-color="#ffd100"/></linearGradient><linearGradient id="j15" gradientUnits="userSpaceOnUse" x1="1641.50" y1="0" x2="1846.30" y2="0"><stop offset="0.0000" stop-color="#a4ff05"/><stop offset="0.5217" stop-color="#edff00"/><stop offset="0.6667" stop-color="#fffb00"/><stop offset="1.0000" stop-color="#ffcf00"/></linearGradient><linearGradient id="j16" gradientUnits="userSpaceOnUse" x1="1641.50" y1="0" x2="1846.30" y2="0"><stop offset="0.0000" stop-color="#a5ff06"/><stop offset="0.4928" stop-color="#eaff00"/><stop offset="0.6522" stop-color="#fffb00"/><stop offset="1.0000" stop-color="#ffce00"/></linearGradient><linearGradient id="j17" gradientUnits="userSpaceOnUse" x1="1641.50" y1="0" x2="1846.30" y2="0"><stop offset="0.0000" stop-color="#a6ff06"/><stop offset="0.4638" stop-color="#e7ff00"/><stop offset="0.6377" stop-color="#fffc00"/><stop offset="1.0000" stop-color="#ffcd00"/></linearGradient><linearGradient id="j18" gradientUnits="userSpaceOnUse" x1="1641.50" y1="0" x2="1846.30" y2="0"><stop offset="0.0000" stop-color="#a7ff07"/><stop offset="0.4638" stop-color="#e9ff00"/><stop offset="0.6377" stop-color="#fffb00"/><stop offset="1.0000" stop-color="#ffcc00"/></linearGradient><linearGradient id="j19" gradientUnits="userSpaceOnUse" x1="1641.50" y1="0" x2="1846.30" y2="0"><stop offset="0.0000" stop-color="#a8ff08"/><stop offset="0.4638" stop-color="#eaff00"/><stop offset="0.6232" stop-color="#fffc00"/><stop offset="1.0000" stop-color="#ffcb00"/></linearGradient><linearGradient id="j20" gradientUnits="userSpaceOnUse" x1="1641.50" y1="0" x2="1846.30" y2="0"><stop offset="0.0000" stop-color="#a9ff08"/><stop offset="0.4638" stop-color="#ebff00"/><stop offset="0.6087" stop-color="#fffc00"/><stop offset="1.0000" stop-color="#ffca00"/></linearGradient><linearGradient id="j21" gradientUnits="userSpaceOnUse" x1="1641.50" y1="0" x2="1846.30" y2="0"><stop offset="0.0000" stop-color="#aaff09"/><stop offset="0.4783" stop-color="#efff00"/><stop offset="0.6087" stop-color="#fffb00"/><stop offset="1.0000" stop-color="#ffc900"/></linearGradient><linearGradient id="j22" gradientUnits="userSpaceOnUse" x1="1641.50" y1="0" x2="1846.30" y2="0"><stop offset="0.0000" stop-color="#abff0a"/><stop offset="0.4928" stop-color="#f3ff00"/><stop offset="0.6087" stop-color="#fff900"/><stop offset="1.0000" stop-color="#ffc700"/></linearGradient><linearGradient id="j23" gradientUnits="userSpaceOnUse" x1="1641.50" y1="0" x2="1846.30" y2="0"><stop offset="0.0000" stop-color="#acff0a"/><stop offset="0.4928" stop-color="#f4ff00"/><stop offset="0.5942" stop-color="#fffa00"/><stop offset="1.0000" stop-color="#ffc600"/></linearGradient><linearGradient id="j24" gradientUnits="userSpaceOnUse" x1="1641.50" y1="0" x2="1846.30" y2="0"><stop offset="0.0000" stop-color="#aeff0b"/><stop offset="0.5072" stop-color="#f8ff00"/><stop offset="0.5942" stop-color="#fff900"/><stop offset="1.0000" stop-color="#ffc500"/></linearGradient><linearGradient id="j25" gradientUnits="userSpaceOnUse" x1="1641.50" y1="0" x2="1846.30" y2="0"><stop offset="0.0000" stop-color="#afff0b"/><stop offset="0.5362" stop-color="#feff00"/><stop offset="1.0000" stop-color="#ffc400"/></linearGradient><linearGradient id="j26" gradientUnits="userSpaceOnUse" x1="1641.50" y1="0" x2="1846.30" y2="0"><stop offset="0.0000" stop-color="#b0ff0c"/><stop offset="0.5362" stop-color="#ffff00"/><stop offset="1.0000" stop-color="#ffc300"/></linearGradient><linearGradient id="j27" gradientUnits="userSpaceOnUse" x1="1641.50" y1="0" x2="1846.30" y2="0"><stop offset="0.0000" stop-color="#b1ff0d"/><stop offset="0.5362" stop-color="#fffd00"/><stop offset="1.0000" stop-color="#ffc200"/></linearGradient><linearGradient id="j28" gradientUnits="userSpaceOnUse" x1="1641.50" y1="0" x2="1846.30" y2="0"><stop offset="0.0000" stop-color="#b2ff0d"/><stop offset="0.5362" stop-color="#fffc00"/><stop offset="1.0000" stop-color="#ffc100"/></linearGradient><linearGradient id="j29" gradientUnits="userSpaceOnUse" x1="1641.50" y1="0" x2="1846.30" y2="0"><stop offset="0.0000" stop-color="#b3ff0e"/><stop offset="0.5217" stop-color="#fffd00"/><stop offset="1.0000" stop-color="#ffc000"/></linearGradient><linearGradient id="j30" gradientUnits="userSpaceOnUse" x1="1641.50" y1="0" x2="1846.30" y2="0"><stop offset="0.0000" stop-color="#b4ff0f"/><stop offset="0.5072" stop-color="#fffe00"/><stop offset="1.0000" stop-color="#ffbf00"/></linearGradient><linearGradient id="j31" gradientUnits="userSpaceOnUse" x1="1641.50" y1="0" x2="1846.30" y2="0"><stop offset="0.0000" stop-color="#b5ff0f"/><stop offset="0.5072" stop-color="#fffc00"/><stop offset="1.0000" stop-color="#ffbe00"/></linearGradient><linearGradient id="j32" gradientUnits="userSpaceOnUse" x1="1641.50" y1="0" x2="1846.30" y2="0"><stop offset="0.0000" stop-color="#b7ff10"/><stop offset="0.4928" stop-color="#fffd00"/><stop offset="0.9855" stop-color="#ffbe00"/><stop offset="1.0000" stop-color="#ffbc00"/></linearGradient><linearGradient id="j33" gradientUnits="userSpaceOnUse" x1="1641.50" y1="0" x2="1846.30" y2="0"><stop offset="0.0000" stop-color="#b8ff11"/><stop offset="0.4928" stop-color="#fffb01"/><stop offset="0.9855" stop-color="#ffbd00"/><stop offset="1.0000" stop-color="#ffbb00"/></linearGradient><linearGradient id="j34" gradientUnits="userSpaceOnUse" x1="1641.50" y1="0" x2="1846.30" y2="0"><stop offset="0.0000" stop-color="#b9ff11"/><stop offset="0.4783" stop-color="#fffc02"/><stop offset="0.9710" stop-color="#ffbd00"/><stop offset="1.0000" stop-color="#ffba00"/></linearGradient><linearGradient id="j35" gradientUnits="userSpaceOnUse" x1="1641.50" y1="0" x2="1846.30" y2="0"><stop offset="0.0000" stop-color="#baff12"/><stop offset="0.4638" stop-color="#fffd03"/><stop offset="0.9565" stop-color="#ffbe00"/><stop offset="1.0000" stop-color="#ffb900"/></linearGradient><linearGradient id="j36" gradientUnits="userSpaceOnUse" x1="1641.50" y1="0" x2="1846.30" y2="0"><stop offset="0.0000" stop-color="#bbff13"/><stop offset="0.4638" stop-color="#fffb04"/><stop offset="0.9565" stop-color="#ffbd00"/><stop offset="1.0000" stop-color="#ffb800"/></linearGradient><linearGradient id="j37" gradientUnits="userSpaceOnUse" x1="1641.50" y1="0" x2="1846.30" y2="0"><stop offset="0.0000" stop-color="#bcff14"/><stop offset="0.4493" stop-color="#fffc05"/><stop offset="0.9130" stop-color="#ffc000"/><stop offset="1.0000" stop-color="#ffb700"/></linearGradient><linearGradient id="j38" gradientUnits="userSpaceOnUse" x1="1641.50" y1="0" x2="1846.30" y2="0"><stop offset="0.0000" stop-color="#beff14"/><stop offset="0.4348" stop-color="#fffd06"/><stop offset="0.8406" stop-color="#ffc700"/><stop offset="1.0000" stop-color="#ffb600"/></linearGradient><linearGradient id="j39" gradientUnits="userSpaceOnUse" x1="1641.50" y1="0" x2="1846.30" y2="0"><stop offset="0.0000" stop-color="#bfff15"/><stop offset="0.4348" stop-color="#fffc07"/><stop offset="0.8406" stop-color="#ffc600"/><stop offset="1.0000" stop-color="#ffb500"/></linearGradient><linearGradient id="j40" gradientUnits="userSpaceOnUse" x1="1641.50" y1="0" x2="1846.30" y2="0"><stop offset="0.0000" stop-color="#c0ff16"/><stop offset="0.4203" stop-color="#fffc08"/><stop offset="0.8406" stop-color="#ffc400"/><stop offset="1.0000" stop-color="#ffb400"/></linearGradient><linearGradient id="j41" gradientUnits="userSpaceOnUse" x1="1641.50" y1="0" x2="1846.30" y2="0"><stop offset="0.0000" stop-color="#c1ff16"/><stop offset="0.4058" stop-color="#fffd0a"/><stop offset="0.8406" stop-color="#ffc300"/><stop offset="1.0000" stop-color="#ffb300"/></linearGradient><linearGradient id="j42" gradientUnits="userSpaceOnUse" x1="1641.50" y1="0" x2="1846.30" y2="0"><stop offset="0.0000" stop-color="#c3ff17"/><stop offset="0.4058" stop-color="#fffc0a"/><stop offset="0.8551" stop-color="#ffc000"/><stop offset="1.0000" stop-color="#ffb200"/></linearGradient><linearGradient id="j43" gradientUnits="userSpaceOnUse" x1="1641.50" y1="0" x2="1846.30" y2="0"><stop offset="0.0000" stop-color="#c4ff18"/><stop offset="0.3913" stop-color="#fffd0b"/><stop offset="0.8696" stop-color="#ffbe00"/><stop offset="1.0000" stop-color="#ffb100"/></linearGradient><linearGradient id="j44" gradientUnits="userSpaceOnUse" x1="1641.50" y1="0" x2="1846.30" y2="0"><stop offset="0.0000" stop-color="#c5ff19"/><stop offset="0.3768" stop-color="#fffd0d"/><stop offset="0.8551" stop-color="#ffbe00"/><stop offset="1.0000" stop-color="#ffb000"/></linearGradient><linearGradient id="j45" gradientUnits="userSpaceOnUse" x1="1641.50" y1="0" x2="1846.30" y2="0"><stop offset="0.0000" stop-color="#c6ff19"/><stop offset="0.3768" stop-color="#fffc0d"/><stop offset="0.8551" stop-color="#ffbd00"/><stop offset="1.0000" stop-color="#ffaf00"/></linearGradient><linearGradient id="j46" gradientUnits="userSpaceOnUse" x1="1641.50" y1="0" x2="1846.30" y2="0"><stop offset="0.0000" stop-color="#c8ff1a"/><stop offset="0.3623" stop-color="#fffd0f"/><stop offset="0.8406" stop-color="#ffbd00"/><stop offset="1.0000" stop-color="#ffae00"/></linearGradient><linearGradient id="j47" gradientUnits="userSpaceOnUse" x1="1641.50" y1="0" x2="1846.30" y2="0"><stop offset="0.0000" stop-color="#c9ff1b"/><stop offset="0.3478" stop-color="#fffd10"/><stop offset="0.8261" stop-color="#ffbe00"/><stop offset="1.0000" stop-color="#ffad00"/></linearGradient><linearGradient id="j48" gradientUnits="userSpaceOnUse" x1="1641.50" y1="0" x2="1846.30" y2="0"><stop offset="0.0000" stop-color="#caff1c"/><stop offset="0.3478" stop-color="#fffc10"/><stop offset="0.8261" stop-color="#ffbd00"/><stop offset="1.0000" stop-color="#ffac00"/></linearGradient><linearGradient id="j49" gradientUnits="userSpaceOnUse" x1="1641.50" y1="0" x2="1846.30" y2="0"><stop offset="0.0000" stop-color="#ccff1c"/><stop offset="0.3333" stop-color="#fffd12"/><stop offset="0.8116" stop-color="#ffbd01"/><stop offset="1.0000" stop-color="#ffab00"/></linearGradient><linearGradient id="j50" gradientUnits="userSpaceOnUse" x1="1641.50" y1="0" x2="1846.30" y2="0"><stop offset="0.0000" stop-color="#cdff1d"/><stop offset="0.3333" stop-color="#fffb12"/><stop offset="0.8116" stop-color="#ffbc01"/><stop offset="1.0000" stop-color="#ffaa00"/></linearGradient><linearGradient id="j51" gradientUnits="userSpaceOnUse" x1="1641.50" y1="0" x2="1846.30" y2="0"><stop offset="0.0000" stop-color="#ceff1e"/><stop offset="0.3188" stop-color="#fffc14"/><stop offset="0.7826" stop-color="#ffbe03"/><stop offset="1.0000" stop-color="#ffa900"/></linearGradient><linearGradient id="j52" gradientUnits="userSpaceOnUse" x1="1641.50" y1="0" x2="1846.30" y2="0"><stop offset="0.0000" stop-color="#d0ff1f"/><stop offset="0.3043" stop-color="#fffd15"/><stop offset="0.7681" stop-color="#ffbe04"/><stop offset="1.0000" stop-color="#ffa700"/></linearGradient><linearGradient id="j53" gradientUnits="userSpaceOnUse" x1="1641.50" y1="0" x2="1846.30" y2="0"><stop offset="0.0000" stop-color="#d1ff20"/><stop offset="0.3043" stop-color="#fffb16"/><stop offset="0.7681" stop-color="#ffbd04"/><stop offset="1.0000" stop-color="#ffa600"/></linearGradient><linearGradient id="j54" gradientUnits="userSpaceOnUse" x1="1641.50" y1="0" x2="1846.30" y2="0"><stop offset="0.0000" stop-color="#d2ff20"/><stop offset="0.2899" stop-color="#fffc17"/><stop offset="0.7536" stop-color="#ffbe05"/><stop offset="1.0000" stop-color="#ffa500"/></linearGradient><linearGradient id="j55" gradientUnits="userSpaceOnUse" x1="1641.50" y1="0" x2="1846.30" y2="0"><stop offset="0.0000" stop-color="#d4ff21"/><stop offset="0.2754" stop-color="#fffd18"/><stop offset="0.7391" stop-color="#ffbe06"/><stop offset="1.0000" stop-color="#ffa400"/></linearGradient><linearGradient id="j56" gradientUnits="userSpaceOnUse" x1="1641.50" y1="0" x2="1846.30" y2="0"><stop offset="0.0000" stop-color="#d5ff22"/><stop offset="0.2754" stop-color="#fffb19"/><stop offset="0.7391" stop-color="#ffbd07"/><stop offset="1.0000" stop-color="#ffa300"/></linearGradient><linearGradient id="j57" gradientUnits="userSpaceOnUse" x1="1641.50" y1="0" x2="1846.30" y2="0"><stop offset="0.0000" stop-color="#d6ff23"/><stop offset="0.2609" stop-color="#fffc1a"/><stop offset="0.7246" stop-color="#ffbd08"/><stop offset="1.0000" stop-color="#ffa200"/></linearGradient><linearGradient id="j58" gradientUnits="userSpaceOnUse" x1="1641.50" y1="0" x2="1846.30" y2="0"><stop offset="0.0000" stop-color="#d8ff24"/><stop offset="0.2464" stop-color="#fffd1c"/><stop offset="0.7101" stop-color="#ffbe09"/><stop offset="1.0000" stop-color="#ffa100"/></linearGradient><linearGradient id="j59" gradientUnits="userSpaceOnUse" x1="1641.50" y1="0" x2="1846.30" y2="0"><stop offset="0.0000" stop-color="#d9ff24"/><stop offset="0.2464" stop-color="#fffc1c"/><stop offset="0.7101" stop-color="#ffbd09"/><stop offset="1.0000" stop-color="#ffa001"/></linearGradient><linearGradient id="j60" gradientUnits="userSpaceOnUse" x1="1641.50" y1="0" x2="1846.30" y2="0"><stop offset="0.0000" stop-color="#dbff25"/><stop offset="0.2319" stop-color="#fffc1e"/><stop offset="0.6957" stop-color="#ffbd0a"/><stop offset="1.0000" stop-color="#ff9f01"/></linearGradient><linearGradient id="j61" gradientUnits="userSpaceOnUse" x1="1641.50" y1="0" x2="1846.30" y2="0"><stop offset="0.0000" stop-color="#dcff26"/><stop offset="0.2174" stop-color="#fffd1f"/><stop offset="0.6667" stop-color="#ffbf0c"/><stop offset="1.0000" stop-color="#ff9f02"/></linearGradient><linearGradient id="j62" gradientUnits="userSpaceOnUse" x1="1641.50" y1="0" x2="1846.30" y2="0"><stop offset="0.0000" stop-color="#ddff27"/><stop offset="0.2174" stop-color="#fffc20"/><stop offset="0.6812" stop-color="#ffbc0c"/><stop offset="1.0000" stop-color="#ff9e02"/></linearGradient><linearGradient id="j63" gradientUnits="userSpaceOnUse" x1="1641.50" y1="0" x2="1846.30" y2="0"><stop offset="0.0000" stop-color="#dfff28"/><stop offset="0.2029" stop-color="#fffd21"/><stop offset="0.6522" stop-color="#ffbe0e"/><stop offset="1.0000" stop-color="#ff9d03"/></linearGradient><linearGradient id="j64" gradientUnits="userSpaceOnUse" x1="1641.50" y1="0" x2="1846.30" y2="0"><stop offset="0.0000" stop-color="#e0ff28"/><stop offset="0.2029" stop-color="#fffb22"/><stop offset="0.6522" stop-color="#ffbd0e"/><stop offset="1.0000" stop-color="#ff9c03"/></linearGradient><clipPath id="insclip"><rect x="1641.5" y="66" width="204.79999999999995" height="258.8"/></clipPath><clipPath id="insTri"><path d="M2367.72,819.74 L1402.80,-147.00 L977.10,1786.47 Z"/></clipPath></defs>
<g clip-path="url(#insclip)"><rect x="1641.50" y="66.00" width="204.80" height="4.60" fill="url(#i0)"/><rect x="1641.50" y="70.00" width="204.80" height="4.60" fill="url(#i1)"/><rect x="1641.50" y="74.00" width="204.80" height="4.60" fill="url(#i2)"/><rect x="1641.50" y="78.00" width="204.80" height="4.60" fill="url(#i3)"/><rect x="1641.50" y="82.00" width="204.80" height="4.60" fill="url(#i4)"/><rect x="1641.50" y="86.00" width="204.80" height="4.60" fill="url(#i5)"/><rect x="1641.50" y="90.00" width="204.80" height="4.60" fill="url(#i6)"/><rect x="1641.50" y="94.00" width="204.80" height="4.60" fill="url(#i7)"/><rect x="1641.50" y="98.00" width="204.80" height="4.60" fill="url(#i8)"/><rect x="1641.50" y="102.00" width="204.80" height="4.60" fill="url(#i9)"/><rect x="1641.50" y="106.00" width="204.80" height="4.60" fill="url(#i10)"/><rect x="1641.50" y="110.00" width="204.80" height="4.60" fill="url(#i11)"/><rect x="1641.50" y="114.00" width="204.80" height="4.60" fill="url(#i12)"/><rect x="1641.50" y="118.00" width="204.80" height="4.60" fill="url(#i13)"/><rect x="1641.50" y="122.00" width="204.80" height="4.60" fill="url(#i14)"/><rect x="1641.50" y="126.00" width="204.80" height="4.60" fill="url(#i15)"/><rect x="1641.50" y="130.00" width="204.80" height="4.60" fill="url(#i16)"/><rect x="1641.50" y="134.00" width="204.80" height="4.60" fill="url(#i17)"/><rect x="1641.50" y="138.00" width="204.80" height="4.60" fill="url(#i18)"/><rect x="1641.50" y="142.00" width="204.80" height="4.60" fill="url(#i19)"/><rect x="1641.50" y="146.00" width="204.80" height="4.60" fill="url(#i20)"/><rect x="1641.50" y="150.00" width="204.80" height="4.60" fill="url(#i21)"/><rect x="1641.50" y="154.00" width="204.80" height="4.60" fill="url(#i22)"/><rect x="1641.50" y="158.00" width="204.80" height="4.60" fill="url(#i23)"/><rect x="1641.50" y="162.00" width="204.80" height="4.60" fill="url(#i24)"/><rect x="1641.50" y="166.00" width="204.80" height="4.60" fill="url(#i25)"/><rect x="1641.50" y="170.00" width="204.80" height="4.60" fill="url(#i26)"/><rect x="1641.50" y="174.00" width="204.80" height="4.60" fill="url(#i27)"/><rect x="1641.50" y="178.00" width="204.80" height="4.60" fill="url(#i28)"/><rect x="1641.50" y="182.00" width="204.80" height="4.60" fill="url(#i29)"/><rect x="1641.50" y="186.00" width="204.80" height="4.60" fill="url(#i30)"/><rect x="1641.50" y="190.00" width="204.80" height="4.60" fill="url(#i31)"/><rect x="1641.50" y="194.00" width="204.80" height="4.60" fill="url(#i32)"/><rect x="1641.50" y="198.00" width="204.80" height="4.60" fill="url(#i33)"/><rect x="1641.50" y="202.00" width="204.80" height="4.60" fill="url(#i34)"/><rect x="1641.50" y="206.00" width="204.80" height="4.60" fill="url(#i35)"/><rect x="1641.50" y="210.00" width="204.80" height="4.60" fill="url(#i36)"/><rect x="1641.50" y="214.00" width="204.80" height="4.60" fill="url(#i37)"/><rect x="1641.50" y="218.00" width="204.80" height="4.60" fill="url(#i38)"/><rect x="1641.50" y="222.00" width="204.80" height="4.60" fill="url(#i39)"/><rect x="1641.50" y="226.00" width="204.80" height="4.60" fill="url(#i40)"/><rect x="1641.50" y="230.00" width="204.80" height="4.60" fill="url(#i41)"/><rect x="1641.50" y="234.00" width="204.80" height="4.60" fill="url(#i42)"/><rect x="1641.50" y="238.00" width="204.80" height="4.60" fill="url(#i43)"/><rect x="1641.50" y="242.00" width="204.80" height="4.60" fill="url(#i44)"/><rect x="1641.50" y="246.00" width="204.80" height="4.60" fill="url(#i45)"/><rect x="1641.50" y="250.00" width="204.80" height="4.60" fill="url(#i46)"/><rect x="1641.50" y="254.00" width="204.80" height="4.60" fill="url(#i47)"/><rect x="1641.50" y="258.00" width="204.80" height="4.60" fill="url(#i48)"/><rect x="1641.50" y="262.00" width="204.80" height="4.60" fill="url(#i49)"/><rect x="1641.50" y="266.00" width="204.80" height="4.60" fill="url(#i50)"/><rect x="1641.50" y="270.00" width="204.80" height="4.60" fill="url(#i51)"/><rect x="1641.50" y="274.00" width="204.80" height="4.60" fill="url(#i52)"/><rect x="1641.50" y="278.00" width="204.80" height="4.60" fill="url(#i53)"/><rect x="1641.50" y="282.00" width="204.80" height="4.60" fill="url(#i54)"/><rect x="1641.50" y="286.00" width="204.80" height="4.60" fill="url(#i55)"/><rect x="1641.50" y="290.00" width="204.80" height="4.60" fill="url(#i56)"/><rect x="1641.50" y="294.00" width="204.80" height="4.60" fill="url(#i57)"/><rect x="1641.50" y="298.00" width="204.80" height="4.60" fill="url(#i58)"/><rect x="1641.50" y="302.00" width="204.80" height="4.60" fill="url(#i59)"/><rect x="1641.50" y="306.00" width="204.80" height="4.60" fill="url(#i60)"/><rect x="1641.50" y="310.00" width="204.80" height="4.60" fill="url(#i61)"/><rect x="1641.50" y="314.00" width="204.80" height="4.60" fill="url(#i62)"/><rect x="1641.50" y="318.00" width="204.80" height="4.60" fill="url(#i63)"/><rect x="1641.50" y="322.00" width="204.80" height="3.40" fill="url(#i64)"/>
<g clip-path="url(#insTri)"><rect x="1641.50" y="66.00" width="204.80" height="4.60" fill="url(#j0)"/><rect x="1641.50" y="70.00" width="204.80" height="4.60" fill="url(#j1)"/><rect x="1641.50" y="74.00" width="204.80" height="4.60" fill="url(#j2)"/><rect x="1641.50" y="78.00" width="204.80" height="4.60" fill="url(#j3)"/><rect x="1641.50" y="82.00" width="204.80" height="4.60" fill="url(#j4)"/><rect x="1641.50" y="86.00" width="204.80" height="4.60" fill="url(#j5)"/><rect x="1641.50" y="90.00" width="204.80" height="4.60" fill="url(#j6)"/><rect x="1641.50" y="94.00" width="204.80" height="4.60" fill="url(#j7)"/><rect x="1641.50" y="98.00" width="204.80" height="4.60" fill="url(#j8)"/><rect x="1641.50" y="102.00" width="204.80" height="4.60" fill="url(#j9)"/><rect x="1641.50" y="106.00" width="204.80" height="4.60" fill="url(#j10)"/><rect x="1641.50" y="110.00" width="204.80" height="4.60" fill="url(#j11)"/><rect x="1641.50" y="114.00" width="204.80" height="4.60" fill="url(#j12)"/><rect x="1641.50" y="118.00" width="204.80" height="4.60" fill="url(#j13)"/><rect x="1641.50" y="122.00" width="204.80" height="4.60" fill="url(#j14)"/><rect x="1641.50" y="126.00" width="204.80" height="4.60" fill="url(#j15)"/><rect x="1641.50" y="130.00" width="204.80" height="4.60" fill="url(#j16)"/><rect x="1641.50" y="134.00" width="204.80" height="4.60" fill="url(#j17)"/><rect x="1641.50" y="138.00" width="204.80" height="4.60" fill="url(#j18)"/><rect x="1641.50" y="142.00" width="204.80" height="4.60" fill="url(#j19)"/><rect x="1641.50" y="146.00" width="204.80" height="4.60" fill="url(#j20)"/><rect x="1641.50" y="150.00" width="204.80" height="4.60" fill="url(#j21)"/><rect x="1641.50" y="154.00" width="204.80" height="4.60" fill="url(#j22)"/><rect x="1641.50" y="158.00" width="204.80" height="4.60" fill="url(#j23)"/><rect x="1641.50" y="162.00" width="204.80" height="4.60" fill="url(#j24)"/><rect x="1641.50" y="166.00" width="204.80" height="4.60" fill="url(#j25)"/><rect x="1641.50" y="170.00" width="204.80" height="4.60" fill="url(#j26)"/><rect x="1641.50" y="174.00" width="204.80" height="4.60" fill="url(#j27)"/><rect x="1641.50" y="178.00" width="204.80" height="4.60" fill="url(#j28)"/><rect x="1641.50" y="182.00" width="204.80" height="4.60" fill="url(#j29)"/><rect x="1641.50" y="186.00" width="204.80" height="4.60" fill="url(#j30)"/><rect x="1641.50" y="190.00" width="204.80" height="4.60" fill="url(#j31)"/><rect x="1641.50" y="194.00" width="204.80" height="4.60" fill="url(#j32)"/><rect x="1641.50" y="198.00" width="204.80" height="4.60" fill="url(#j33)"/><rect x="1641.50" y="202.00" width="204.80" height="4.60" fill="url(#j34)"/><rect x="1641.50" y="206.00" width="204.80" height="4.60" fill="url(#j35)"/><rect x="1641.50" y="210.00" width="204.80" height="4.60" fill="url(#j36)"/><rect x="1641.50" y="214.00" width="204.80" height="4.60" fill="url(#j37)"/><rect x="1641.50" y="218.00" width="204.80" height="4.60" fill="url(#j38)"/><rect x="1641.50" y="222.00" width="204.80" height="4.60" fill="url(#j39)"/><rect x="1641.50" y="226.00" width="204.80" height="4.60" fill="url(#j40)"/><rect x="1641.50" y="230.00" width="204.80" height="4.60" fill="url(#j41)"/><rect x="1641.50" y="234.00" width="204.80" height="4.60" fill="url(#j42)"/><rect x="1641.50" y="238.00" width="204.80" height="4.60" fill="url(#j43)"/><rect x="1641.50" y="242.00" width="204.80" height="4.60" fill="url(#j44)"/><rect x="1641.50" y="246.00" width="204.80" height="4.60" fill="url(#j45)"/><rect x="1641.50" y="250.00" width="204.80" height="4.60" fill="url(#j46)"/><rect x="1641.50" y="254.00" width="204.80" height="4.60" fill="url(#j47)"/><rect x="1641.50" y="258.00" width="204.80" height="4.60" fill="url(#j48)"/><rect x="1641.50" y="262.00" width="204.80" height="4.60" fill="url(#j49)"/><rect x="1641.50" y="266.00" width="204.80" height="4.60" fill="url(#j50)"/><rect x="1641.50" y="270.00" width="204.80" height="4.60" fill="url(#j51)"/><rect x="1641.50" y="274.00" width="204.80" height="4.60" fill="url(#j52)"/><rect x="1641.50" y="278.00" width="204.80" height="4.60" fill="url(#j53)"/><rect x="1641.50" y="282.00" width="204.80" height="4.60" fill="url(#j54)"/><rect x="1641.50" y="286.00" width="204.80" height="4.60" fill="url(#j55)"/><rect x="1641.50" y="290.00" width="204.80" height="4.60" fill="url(#j56)"/><rect x="1641.50" y="294.00" width="204.80" height="4.60" fill="url(#j57)"/><rect x="1641.50" y="298.00" width="204.80" height="4.60" fill="url(#j58)"/><rect x="1641.50" y="302.00" width="204.80" height="4.60" fill="url(#j59)"/><rect x="1641.50" y="306.00" width="204.80" height="4.60" fill="url(#j60)"/><rect x="1641.50" y="310.00" width="204.80" height="4.60" fill="url(#j61)"/><rect x="1641.50" y="314.00" width="204.80" height="4.60" fill="url(#j62)"/><rect x="1641.50" y="318.00" width="204.80" height="4.60" fill="url(#j63)"/><rect x="1641.50" y="322.00" width="204.80" height="3.40" fill="url(#j64)"/></g>
<rect x="1735.50" y="185.10" width="14.40" height="18.80" fill="none" stroke="#ffffff" stroke-width="2.1"/>
<rect x="1670.90" y="318.60" width="14.40" height="18.80" fill="none" stroke="#ffffff" stroke-width="2.1"/>
<ellipse cx="1771.80" cy="83.00" rx="4.10" ry="6.00" fill="#c8c000" stroke="#000" stroke-width="1.5"/>
<ellipse cx="1694.40" cy="244.10" rx="4.10" ry="6.00" fill="#c0c050" stroke="#000" stroke-width="1.5"/>
</g>
<rect x="1641.5" y="66" width="204.79999999999995" height="258.8" fill="none" stroke="#9a9a9a" stroke-width="1.6"/>
<rect x="1086" y="842" width="570" height="22" fill="#2d2d2d"/>
<rect x="1086" y="864" width="570" height="21" fill="#141414"/>
<rect x="1086" y="842" width="19" height="43" fill="#000000"/>
<rect x="1105" y="885" width="551" height="41" fill="#404040"/>
<rect x="1086" y="885" width="19" height="41" fill="#1e1e1e"/>
<rect x="1105" y="926" width="551" height="40.2" fill="#7f7f7f"/>
<rect x="1086" y="926" width="19" height="40.2" fill="#1a1a1a"/>
<rect x="1105" y="966.2" width="551" height="39.8" fill="#404040"/>
<rect x="1086" y="966.2" width="19" height="39.8" fill="#1e1e1e"/>
<rect x="1105" y="1006" width="551" height="40" fill="#7f7f7f"/>
<rect x="1086" y="1006" width="19" height="40" fill="#1a1a1a"/>
<rect x="1105" y="1046" width="551" height="40" fill="#404040"/>
<rect x="1086" y="1046" width="19" height="40" fill="#1e1e1e"/>
<rect x="1105" y="1086" width="551" height="40" fill="#7f7f7f"/>
<rect x="1086" y="1086" width="19" height="40" fill="#1a1a1a"/>
<text x="1265" y="872.3" font-size="24.2" fill="#ffffff" stroke="#ffffff" stroke-width="0.7" textLength="38.7" lengthAdjust="spacingAndGlyphs">20%</text>
<text x="1344" y="872.3" font-size="24.2" fill="#ffffff" stroke="#ffffff" stroke-width="0.7" textLength="38.7" lengthAdjust="spacingAndGlyphs">40%</text>
<text x="1423.3" y="872.3" font-size="24.2" fill="#ffffff" stroke="#ffffff" stroke-width="0.7" textLength="38.7" lengthAdjust="spacingAndGlyphs">60%</text>
<text x="1502.8" y="872.3" font-size="24.2" fill="#ffffff" stroke="#ffffff" stroke-width="0.7" textLength="38.7" lengthAdjust="spacingAndGlyphs">80%</text>
<text x="1583" y="872.3" font-size="24.2" fill="#ffffff" stroke="#ffffff" stroke-width="0.7" textLength="49.4" lengthAdjust="spacingAndGlyphs">100%</text>
<text x="1111" y="914.7" font-size="25.5" fill="#f2f2f2" stroke="#f2f2f2" stroke-width="0.35" textLength="75.8" lengthAdjust="spacingAndGlyphs">x: CIE31</text>
<text x="1265" y="914.7" font-size="25.5" fill="#f2f2f2" stroke="#f2f2f2" stroke-width="0.35" textLength="40.3" lengthAdjust="spacingAndGlyphs">0,33</text>
<text x="1344" y="914.7" font-size="25.5" fill="#f2f2f2" stroke="#f2f2f2" stroke-width="0.35" textLength="40.3" lengthAdjust="spacingAndGlyphs">0,35</text>
<text x="1423.3" y="914.7" font-size="25.5" fill="#f2f2f2" stroke="#f2f2f2" stroke-width="0.35" textLength="40.3" lengthAdjust="spacingAndGlyphs">0,38</text>
<text x="1502.8" y="914.7" font-size="25.5" fill="#f2f2f2" stroke="#f2f2f2" stroke-width="0.35" textLength="40.3" lengthAdjust="spacingAndGlyphs">0,40</text>
<text x="1583" y="914.7" font-size="25.5" fill="#f2f2f2" stroke="#f2f2f2" stroke-width="0.35" textLength="40.3" lengthAdjust="spacingAndGlyphs">0,43</text>
<text x="1111" y="954.87" font-size="25.5" fill="#f2f2f2" stroke="#f2f2f2" stroke-width="0.35" textLength="76.3" lengthAdjust="spacingAndGlyphs">y: CIE31</text>
<text x="1265" y="954.87" font-size="25.5" fill="#f2f2f2" stroke="#f2f2f2" stroke-width="0.35" textLength="40.3" lengthAdjust="spacingAndGlyphs">0,37</text>
<text x="1344" y="954.87" font-size="25.5" fill="#f2f2f2" stroke="#f2f2f2" stroke-width="0.35" textLength="40.3" lengthAdjust="spacingAndGlyphs">0,41</text>
<text x="1423.3" y="954.87" font-size="25.5" fill="#f2f2f2" stroke="#f2f2f2" stroke-width="0.35" textLength="40.3" lengthAdjust="spacingAndGlyphs">0,45</text>
<text x="1502.8" y="954.87" font-size="25.5" fill="#f2f2f2" stroke="#f2f2f2" stroke-width="0.35" textLength="40.3" lengthAdjust="spacingAndGlyphs">0,49</text>
<text x="1583" y="954.87" font-size="25.5" fill="#f2f2f2" stroke="#f2f2f2" stroke-width="0.35" textLength="40.3" lengthAdjust="spacingAndGlyphs">0,54</text>
<text x="1111" y="995.04" font-size="25.5" fill="#f2f2f2" stroke="#f2f2f2" stroke-width="0.35" textLength="13" lengthAdjust="spacingAndGlyphs">Y</text>
<text x="1265" y="995.04" font-size="25.5" fill="#f2f2f2" stroke="#f2f2f2" stroke-width="0.35" textLength="63.8" lengthAdjust="spacingAndGlyphs">129,83</text>
<text x="1344" y="995.04" font-size="25.5" fill="#f2f2f2" stroke="#f2f2f2" stroke-width="0.35" textLength="63.8" lengthAdjust="spacingAndGlyphs">126,79</text>
<text x="1423.3" y="995.04" font-size="25.5" fill="#f2f2f2" stroke="#f2f2f2" stroke-width="0.35" textLength="63.8" lengthAdjust="spacingAndGlyphs">124,28</text>
<text x="1502.8" y="995.04" font-size="25.5" fill="#f2f2f2" stroke="#f2f2f2" stroke-width="0.35" textLength="63.8" lengthAdjust="spacingAndGlyphs">122,41</text>
<text x="1583" y="995.04" font-size="25.5" fill="#f2f2f2" stroke="#f2f2f2" stroke-width="0.35" textLength="63.8" lengthAdjust="spacingAndGlyphs">119,88</text>
<text x="1111" y="1035.21" font-size="25.5" fill="#f2f2f2" stroke="#f2f2f2" stroke-width="0.35" textLength="137.2" lengthAdjust="spacingAndGlyphs">Target x:CIE31</text>
<text x="1265" y="1035.21" font-size="25.5" fill="#f2f2f2" stroke="#f2f2f2" stroke-width="0.35" textLength="40.3" lengthAdjust="spacingAndGlyphs">0,33</text>
<text x="1344" y="1035.21" font-size="25.5" fill="#f2f2f2" stroke="#f2f2f2" stroke-width="0.35" textLength="40.3" lengthAdjust="spacingAndGlyphs">0,36</text>
<text x="1423.3" y="1035.21" font-size="25.5" fill="#f2f2f2" stroke="#f2f2f2" stroke-width="0.35" textLength="40.3" lengthAdjust="spacingAndGlyphs">0,38</text>
<text x="1502.8" y="1035.21" font-size="25.5" fill="#f2f2f2" stroke="#f2f2f2" stroke-width="0.35" textLength="40.3" lengthAdjust="spacingAndGlyphs">0,40</text>
<text x="1583" y="1035.21" font-size="25.5" fill="#f2f2f2" stroke="#f2f2f2" stroke-width="0.35" textLength="40.3" lengthAdjust="spacingAndGlyphs">0,42</text>
<text x="1111" y="1075.38" font-size="25.5" fill="#f2f2f2" stroke="#f2f2f2" stroke-width="0.35" textLength="137.2" lengthAdjust="spacingAndGlyphs">Target y:CIE31</text>
<text x="1265" y="1075.38" font-size="25.5" fill="#f2f2f2" stroke="#f2f2f2" stroke-width="0.35" textLength="40.3" lengthAdjust="spacingAndGlyphs">0,36</text>
<text x="1344" y="1075.38" font-size="25.5" fill="#f2f2f2" stroke="#f2f2f2" stroke-width="0.35" textLength="40.3" lengthAdjust="spacingAndGlyphs">0,40</text>
<text x="1423.3" y="1075.38" font-size="25.5" fill="#f2f2f2" stroke="#f2f2f2" stroke-width="0.35" textLength="40.3" lengthAdjust="spacingAndGlyphs">0,44</text>
<text x="1502.8" y="1075.38" font-size="25.5" fill="#f2f2f2" stroke="#f2f2f2" stroke-width="0.35" textLength="40.3" lengthAdjust="spacingAndGlyphs">0,47</text>
<text x="1583" y="1075.38" font-size="25.5" fill="#f2f2f2" stroke="#f2f2f2" stroke-width="0.35" textLength="40.3" lengthAdjust="spacingAndGlyphs">0,51</text>
<text x="1111" y="1115.55" font-size="25.5" fill="#f2f2f2" stroke="#f2f2f2" stroke-width="0.35" textLength="80.4" lengthAdjust="spacingAndGlyphs">Target Y</text>
<text x="1265" y="1115.55" font-size="25.5" fill="#f2f2f2" stroke="#f2f2f2" stroke-width="0.35" textLength="63.8" lengthAdjust="spacingAndGlyphs">132,49</text>
<text x="1344" y="1115.55" font-size="25.5" fill="#f2f2f2" stroke="#f2f2f2" stroke-width="0.35" textLength="63.8" lengthAdjust="spacingAndGlyphs">130,17</text>
<text x="1423.3" y="1115.55" font-size="25.5" fill="#f2f2f2" stroke="#f2f2f2" stroke-width="0.35" textLength="63.8" lengthAdjust="spacingAndGlyphs">128,38</text>
<text x="1502.8" y="1115.55" font-size="25.5" fill="#f2f2f2" stroke="#f2f2f2" stroke-width="0.35" textLength="63.8" lengthAdjust="spacingAndGlyphs">126,98</text>
<text x="1583" y="1115.55" font-size="25.5" fill="#f2f2f2" stroke="#f2f2f2" stroke-width="0.35" textLength="63.8" lengthAdjust="spacingAndGlyphs">125,62</text></svg>
</body></html>
